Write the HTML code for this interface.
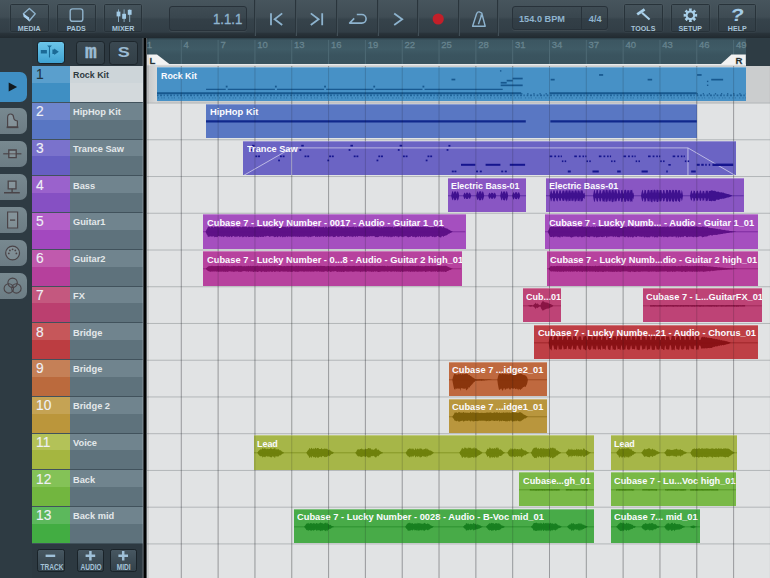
<!DOCTYPE html>
<html><head><meta charset="utf-8"><title>Cubasis</title>
<style>
html,body{margin:0;padding:0}
body{width:770px;height:578px;overflow:hidden;position:relative;background:#2e3b43;font-family:"Liberation Sans",sans-serif;}
div,svg,span{position:absolute;box-sizing:border-box}
#tb{left:0;top:0;width:770px;height:37.6px;background:linear-gradient(#47555d 0px,#3f4c54 17px,#36434b 19.5px,#323e46 32px,#29333a 33.5px,#222b31 37.6px);}
.tbtn{top:4px;height:28px;width:38.5px;border:1px solid #28333a;border-radius:1.5px;background:linear-gradient(#45535b 0%,#3e4b53 48%,#36434b 52%,#323e46 100%);box-shadow:0 0 0 .5px rgba(255,255,255,.05)}
.tbtn span{left:0;right:0;bottom:-1.5px;text-align:center;font-weight:bold;font-size:7.8px;color:#a8c4d8;line-height:8px;transform:scaleX(.91)}
.sep{top:0;width:2px;height:36px;border-left:1px solid #2a353c;border-right:1px solid #424f57}
.disp{border:1px solid #28323a;border-radius:3px;background:linear-gradient(#3f4c54 0%,#39464e 48%,#333f47 52%,#303c44 100%);box-shadow:0 1px 0 rgba(255,255,255,.06)}
#side{left:0;top:38px;width:32px;height:540px;background:#2e3b43}
.tab{left:0;width:27px;height:26px;border-radius:0 7px 7px 0;background:linear-gradient(#788990,#6c7c84)}
#tl{left:32px;top:38px;width:112px;height:540px;background:#2d3941}
#tlbg{left:0;top:28px;width:111.2px;height:478px;background:#41525c}
.row{left:0;width:111.2px;height:35.8px}
.row .n1{left:0;top:0;width:37.8px;height:16.8px}
.row .n2{left:0;top:16.8px;width:37.8px;height:19px}
.row .m1{left:37.8px;top:0;width:73.4px;height:16.8px;background:#70848e}
.row .m2{left:37.8px;top:16.8px;width:73.4px;height:19px;background:#5e727c}
.row .num{left:4.1px;top:1.3px;font-size:13.8px;line-height:16px;color:#eef0f6;-webkit-text-stroke:.12px currentColor}
.row .nm{left:41px;top:3.3px;font-size:9.25px;font-weight:bold;line-height:12px;color:#e3e8ea;white-space:nowrap}
.sbtn{top:2.5px;height:24px;border:1.5px solid #1d262c;border-radius:3.5px;background:linear-gradient(#3b4952,#323f47)}
.bbtn{top:511.4px;height:22.6px;border:1.8px solid #1a2329;border-radius:2.5px;background:linear-gradient(#475761,#33414a)}
.bbtn span{left:0;right:0;bottom:-1.3px;text-align:center;font-weight:bold;font-size:8.2px;line-height:8px;color:#a5c3d8;transform:scaleX(.8)}
#ruler{left:146.2px;top:38px;width:623.5px;height:28px;background:linear-gradient(#2c3e47 0,#3c5661 2px,#3f5b66 40%,#3a545f 60%,#39525d 100%)}
#ruler span{top:1.4px;font-size:9.5px;line-height:11px;color:#67848f;-webkit-text-stroke:.3px #67848f}
#arr{left:146.2px;top:66px;width:623.8px;height:512px;background:#e1e3e4;overflow:hidden}
.clip{border-top:1px solid rgba(255,255,255,.28);overflow:hidden}
.clip span{left:3.5px;top:1.5px;transform-origin:0 0;font-size:9.25px;font-weight:bold;line-height:12px;color:#fbfbff;white-space:nowrap}
</style></head><body>

<div id="tb">
<div class="tbtn" style="left:10.4px"><svg style="left:0;top:0" width="38" height="20" viewBox="0 0 38 20"><path d="M18.4 3.4 L24.2 8.8 L18.4 15.8 L12.4 8.8 Z" fill="none" stroke="#8fb2cb" stroke-width="1.4" stroke-linejoin="round"/><path d="M12.2 8.6 L18.2 12.4 L18.4 16 L12.6 11.8 Z" fill="#a9d0ee"/></svg><span>MEDIA</span></div>
<div class="tbtn" style="left:57.2px"><svg style="left:0;top:0" width="38" height="20" viewBox="0 0 38 20"><rect x="12.2" y="3.9" width="12.6" height="12.4" rx="2.4" fill="none" stroke="#8fb2cb" stroke-width="1.4"/></svg><span>PADS</span></div>
<div class="tbtn" style="left:103.9px"><svg style="left:0;top:0" width="38" height="20" viewBox="0 0 38 20"><path d="M13.5 4.4V17 M19.1 4.4V17 M24.7 4.4V17" stroke="#8fb2cb" stroke-width=".9" fill="none"/><rect x="11.6" y="6.6" width="3.8" height="4.8" fill="#a3cbe6"/><rect x="17.2" y="8.8" width="3.8" height="5" fill="#a3cbe6"/><rect x="22.8" y="4.8" width="3.8" height="5" fill="#a3cbe6"/></svg><span>MIXER</span></div>
<div class="tbtn" style="left:624.3px"><svg style="left:0;top:0" width="38" height="20" viewBox="0 0 38 20"><path d="M12.2 9.4 L19.6 4.4" stroke="#a9d0ea" stroke-width="2.7" fill="none"/><path d="M17 7.8 L24.6 14.6" stroke="#a9d0ea" stroke-width="2" fill="none"/></svg><span>TOOLS</span></div>
<div class="tbtn" style="left:671.1px"><svg style="left:0;top:0" width="38" height="20" viewBox="0 0 38 20"><path d="M25.13 8.79 L25.13 11.81 L23.17 11.43 L22.57 12.87 L24.23 14.00 L22.10 16.13 L20.97 14.47 L19.53 15.07 L19.91 17.03 L16.89 17.03 L17.27 15.07 L15.83 14.47 L14.70 16.13 L12.57 14.00 L14.23 12.87 L13.63 11.43 L11.67 11.81 L11.67 8.79 L13.63 9.17 L14.23 7.73 L12.57 6.60 L14.70 4.47 L15.83 6.13 L17.27 5.53 L16.89 3.57 L19.91 3.57 L19.53 5.53 L20.97 6.13 L22.10 4.47 L24.23 6.60 L22.57 7.73 L23.17 9.17Z M18.4 7.5a2.8 2.8 0 1 0 .01 0Z" fill="#a9d0ea" fill-rule="evenodd"/></svg><span>SETUP</span></div>
<div class="tbtn" style="left:717.8px"><span style="bottom:6.6px;font-size:17.4px;line-height:17px;color:#a3cbe6;transform:scaleX(1.25) skewX(-6deg)">?</span><span>HELP</span></div>
<div class="disp" style="left:169px;top:6.4px;width:78px;height:24.4px"><span style="right:3.4px;top:3.6px;font-size:14.5px;line-height:16px;color:#8fb4cf;-webkit-text-stroke:.35px #8fb4cf;transform-origin:100% 50%;transform:scaleX(.91)">1.1.1</span></div>
<div class="sep" style="left:254.3px"></div>
<div class="sep" style="left:295.4px"></div>
<div class="sep" style="left:336.3px"></div>
<div class="sep" style="left:377px"></div>
<div class="sep" style="left:417.2px"></div>
<div class="sep" style="left:458px"></div>
<div class="sep" style="left:497.2px"></div>
<svg style="left:255px;top:0" width="245" height="38" viewBox="255 0 245 38" fill="none" stroke="#8db3ce" stroke-width="1.8"><path d="M271 13.2V25.2 M282.2 13.4 L274.6 19.2 L282.2 25"/><path d="M310.8 13.4 L318.6 19.2 L310.8 25 M322.2 13.2V25.2"/><path d="M356.8 14.5 H361.8 A4.3 4.3 0 0 1 361.8 23.1 H349.6 L354.2 18.4" stroke-width="1.6" stroke-linejoin="round"/><path d="M394.2 13.4 L402.2 19.2 L394.2 25"/><circle cx="438.2" cy="19" r="5.6" fill="#c31f29" stroke="none"/><path d="M472.6 26.2 L476.6 13.8 Q477.6 11.4 479.6 12 L481.8 13.2 L485.2 26.2 Z M478.4 24.2 L482.2 13.6" stroke-width="1.4" stroke-linejoin="round"/><rect x="480.6" y="14.4" width="2.4" height="2.4" fill="#8db3ce" stroke="none"/></svg>
<div class="disp" style="left:512px;top:6.4px;width:96px;height:23.4px"><span style="left:6px;top:6.2px;font-size:9.2px;font-weight:bold;line-height:11px;color:#8fb4cf">154.0 BPM</span><div style="left:67.5px;top:0;width:1px;height:21.4px;background:#28323a"></div><span style="left:75.8px;top:6.2px;font-size:9.2px;font-weight:bold;line-height:11px;color:#8fb4cf">4/4</span></div>
</div>
<div id="side">
<div class="tab" style="top:34px;height:30.4px;background:#3f8fc4"><svg style="left:0;top:0" width="27" height="30"><path d="M8.7 10.4 L17.1 15 L8.7 19.5Z" fill="#121a1f"/></svg></div>
<div class="tab" style="top:70px"><svg style="left:0;top:0" width="27" height="26"><path d="M7.6 19 V9.6 Q7.6 6 10.6 6 Q13.4 6 13.6 9.2 Q13.8 12.4 17.4 13 V19 Z" fill="rgba(255,255,255,.14)" stroke="#4a4448" stroke-width="1.2"/><path d="M6.6 19.3 H18.4" stroke="#4a4448" stroke-width="1.7"/></svg></div>
<div class="tab" style="top:103px"><svg style="left:0;top:0" width="27" height="26"><path d="M3.2 12.8 H21.4" stroke="#4a4448" stroke-width="1.2"/><path d="M8.8 9 H16.2 V16.6 H8.8 Z" fill="rgba(255,255,255,.12)" stroke="#4a4448" stroke-width="1.3"/></svg></div>
<div class="tab" style="top:136px"><svg style="left:0;top:0" width="27" height="26"><path d="M8.2 7.2 H16 V14.8 H8.2 Z" fill="rgba(255,255,255,.14)" stroke="#4a4448" stroke-width="1.3"/><path d="M12.1 14.8 V18.4 M4 18.8 H19.8" fill="none" stroke="#4a4448" stroke-width="1.4"/></svg></div>
<div class="tab" style="top:169px"><svg style="left:0;top:0" width="27" height="26"><path d="M7.6 5 H17.6 V21 H7.6 Z" fill="rgba(255,255,255,.12)" stroke="#4a4448" stroke-width="1.2"/><path d="M10 13.1 H15.2" stroke="#4a4448" stroke-width="1.3"/></svg></div>
<div class="tab" style="top:202px"><svg style="left:0;top:0" width="27" height="26"><circle cx="12.6" cy="13" r="6.9" fill="rgba(255,255,255,.1)" stroke="#4a4448" stroke-width="1.2"/><circle cx="8.8" cy="13.4" r=".9" fill="#4a4448"/><circle cx="9.9" cy="10.4" r=".9" fill="#4a4448"/><circle cx="12.6" cy="9.3" r=".9" fill="#4a4448"/><circle cx="15.3" cy="10.4" r=".9" fill="#4a4448"/><circle cx="16.4" cy="13.4" r=".9" fill="#4a4448"/></svg></div>
<div class="tab" style="top:235px"><svg style="left:0;top:0" width="27" height="26"><circle cx="12.6" cy="9.8" r="4.7" fill="none" stroke="#4a4448" stroke-width="1.1"/><circle cx="8.8" cy="15.4" r="4.7" fill="none" stroke="#4a4448" stroke-width="1.1"/><circle cx="16.4" cy="15.4" r="4.7" fill="none" stroke="#4a4448" stroke-width="1.1"/></svg></div>
</div>
<div id="tl"><div id="tlbg"></div>
<div class="sbtn" style="left:4.6px;width:28px;top:2.6px;height:23.4px;border-color:#15222b;background:linear-gradient(#6cc6ea,#3fa2d2)"><svg style="left:0;top:0" width="25" height="20"><path d="M2.8 7.9h6.1v3.7H2.8z M14.4 7.6h1.8V6.6l4.6 3.2-4.6 3.2v-1h-1.8z" fill="#1b6a96"/><path d="M11.5 4V15.5" stroke="#1b6a96" stroke-width="1.1"/><path d="M9.1 3.5h4.8l-2.4 2.4z" fill="#1b6a96"/></svg></div>
<div class="sbtn" style="left:43.6px;width:29.6px"><span style="left:0;right:0;top:-.9px;text-align:center;font-family:'Liberation Mono',monospace;font-weight:bold;font-size:20px;line-height:24px;color:#9bbbd3;-webkit-text-stroke:.5px #9bbbd3;transform:scaleX(.98)">m</span></div>
<div class="sbtn" style="left:76.6px;width:29.6px"><span style="left:0;right:0;top:.4px;text-align:center;font-weight:bold;font-size:15px;line-height:20px;color:#9bbbd3;transform:scaleX(1.2)">S</span></div>
<div class="row" style="top:28.2px"><div class="n1" style="background:#5a9fcd"></div><div class="n2" style="background:#3f8fc3"></div><div class="m1" style="background:#cdd5d9"></div><div class="m2" style="background:#d3d9dc"></div><span class="num" style="color:#233440">1</span><span class="nm" style="color:#2f3a41;transform-origin:0 0;transform:scaleX(0.96)">Rock Kit</span></div>
<div class="row" style="top:64.9px"><div class="n1" style="background:#6e85cc"></div><div class="n2" style="background:#5876c3"></div><div class="m1" style="background:#70848e"></div><div class="m2" style="background:#5e727c"></div><span class="num" style="color:#eef0f6">2</span><span class="nm" style="color:#e3e8ea;transform-origin:0 0;transform:scaleX(1)">HipHop Kit</span></div>
<div class="row" style="top:101.7px"><div class="n1" style="background:#7a72cc"></div><div class="n2" style="background:#665fc3"></div><div class="m1" style="background:#70848e"></div><div class="m2" style="background:#5e727c"></div><span class="num" style="color:#eef0f6">3</span><span class="nm" style="color:#e3e8ea;transform-origin:0 0;transform:scaleX(1)">Trance Saw</span></div>
<div class="row" style="top:138.4px"><div class="n1" style="background:#9a62cc"></div><div class="n2" style="background:#8650c3"></div><div class="m1" style="background:#70848e"></div><div class="m2" style="background:#5e727c"></div><span class="num" style="color:#eef0f6">4</span><span class="nm" style="color:#e3e8ea;transform-origin:0 0;transform:scaleX(1)">Bass</span></div>
<div class="row" style="top:175.2px"><div class="n1" style="background:#b25fc8"></div><div class="n2" style="background:#a348bf"></div><div class="m1" style="background:#70848e"></div><div class="m2" style="background:#5e727c"></div><span class="num" style="color:#eef0f6">5</span><span class="nm" style="color:#e3e8ea;transform-origin:0 0;transform:scaleX(1)">Guitar1</span></div>
<div class="row" style="top:211.9px"><div class="n1" style="background:#c05aad"></div><div class="n2" style="background:#b6409c"></div><div class="m1" style="background:#70848e"></div><div class="m2" style="background:#5e727c"></div><span class="num" style="color:#eef0f6">6</span><span class="nm" style="color:#e3e8ea;transform-origin:0 0;transform:scaleX(1)">Guitar2</span></div>
<div class="row" style="top:248.6px"><div class="n1" style="background:#c4587f"></div><div class="n2" style="background:#bb3f6f"></div><div class="m1" style="background:#70848e"></div><div class="m2" style="background:#5e727c"></div><span class="num" style="color:#eef0f6">7</span><span class="nm" style="color:#e3e8ea;transform-origin:0 0;transform:scaleX(1)">FX</span></div>
<div class="row" style="top:285.4px"><div class="n1" style="background:#c6575a"></div><div class="n2" style="background:#bc3d41"></div><div class="m1" style="background:#70848e"></div><div class="m2" style="background:#5e727c"></div><span class="num" style="color:#eef0f6">8</span><span class="nm" style="color:#e3e8ea;transform-origin:0 0;transform:scaleX(1)">Bridge</span></div>
<div class="row" style="top:322.1px"><div class="n1" style="background:#c58057"></div><div class="n2" style="background:#bb6a3d"></div><div class="m1" style="background:#70848e"></div><div class="m2" style="background:#5e727c"></div><span class="num" style="color:#eef0f6">9</span><span class="nm" style="color:#e3e8ea;transform-origin:0 0;transform:scaleX(1)">Bridge</span></div>
<div class="row" style="top:358.9px"><div class="n1" style="background:#c5a354"></div><div class="n2" style="background:#bb963b"></div><div class="m1" style="background:#70848e"></div><div class="m2" style="background:#5e727c"></div><span class="num" style="color:#eef0f6">10</span><span class="nm" style="color:#e3e8ea;transform-origin:0 0;transform:scaleX(1)">Bridge 2</span></div>
<div class="row" style="top:395.6px"><div class="n1" style="background:#b3c258"></div><div class="n2" style="background:#a5b640"></div><div class="m1" style="background:#70848e"></div><div class="m2" style="background:#5e727c"></div><span class="num" style="color:#eef0f6">11</span><span class="nm" style="color:#e3e8ea;transform-origin:0 0;transform:scaleX(1)">Voice</span></div>
<div class="row" style="top:432.3px"><div class="n1" style="background:#84c257"></div><div class="n2" style="background:#72b63f"></div><div class="m1" style="background:#70848e"></div><div class="m2" style="background:#5e727c"></div><span class="num" style="color:#eef0f6">12</span><span class="nm" style="color:#e3e8ea;transform-origin:0 0;transform:scaleX(1)">Back</span></div>
<div class="row" style="top:469.1px"><div class="n1" style="background:#5cb85c"></div><div class="n2" style="background:#42ad42"></div><div class="m1" style="background:#70848e"></div><div class="m2" style="background:#5e727c"></div><span class="num" style="color:#eef0f6">13</span><span class="nm" style="color:#e3e8ea;transform-origin:0 0;transform:scaleX(1)">Back mid</span></div>
<div class="bbtn" style="left:4.6px;width:28px"><svg style="left:0;top:0" width="25" height="12"><rect x="7.6" y="4.6" width="9.6" height="2.4" fill="#9fc0d8"/></svg><span>TRACK</span></div>
<div class="bbtn" style="left:44.6px;width:27.8px"><svg style="left:0;top:0" width="25" height="12"><path d="M7.6 5.8h9.6M12.4 1v9.6" stroke="#9fc0d8" stroke-width="2.5"/></svg><span>AUDIO</span></div>
<div class="bbtn" style="left:77.8px;width:27.4px"><svg style="left:0;top:0" width="25" height="12"><path d="M7.4 5.8h9.6M12.2 1v9.6" stroke="#9fc0d8" stroke-width="2.5"/></svg><span>MIDI</span></div>
</div>
<div id="ruler">
<div style="left:599.8px;top:0;width:30px;height:28px;background:#2e3c44"></div>
<span style="left:0.6px">1</span>
<span style="left:37.4px">4</span>
<span style="left:74.2px">7</span>
<span style="left:111.0px">10</span>
<span style="left:147.9px">13</span>
<span style="left:184.7px">16</span>
<span style="left:221.5px">19</span>
<span style="left:258.3px">22</span>
<span style="left:295.1px">25</span>
<span style="left:332.0px">28</span>
<span style="left:368.8px">31</span>
<span style="left:405.6px">34</span>
<span style="left:442.4px">37</span>
<span style="left:479.2px">40</span>
<span style="left:516.1px">43</span>
<span style="left:552.9px">46</span>
<span style="left:589.7px">49</span>
<svg style="left:0;top:0" width="624" height="28"><path d="M35.30 2V26 M72.12 2V26 M108.94 2V26 M145.76 2V26 M182.58 2V26 M219.40 2V26 M256.22 2V26 M293.04 2V26 M329.86 2V26 M366.68 2V26 M403.50 2V26 M440.32 2V26 M477.14 2V26 M513.96 2V26 M550.78 2V26 M587.60 2V26" stroke="#4e6a75" stroke-width="1" fill="none"/></svg>
<div style="left:0;top:26px;width:599.8px;height:2px;background:linear-gradient(#f4f4f4,#c9cdcf)"></div>
<svg style="left:0;top:16px" width="624" height="12"><path d="M0 0.6 H11 L24 10.4 H0Z" fill="#f2f2f2"/><path d="M599.8 0.6 H585.4000000000001 L574.4000000000001 10.4 H599.8Z" fill="#f2f2f2"/></svg>
<span style="left:3.4px;top:17.5px;font-size:9.6px;font-weight:bold;color:#111;line-height:10px">L</span>
<span style="left:589.2px;top:17.5px;font-size:9.6px;font-weight:bold;color:#111;line-height:10px">R</span>
</div>
<div id="arr">
<div style="left:0;top:0;width:624px;height:36.74px;background:linear-gradient(90deg,#c4c6c7 0,#d7d9da 11px,#cbcdce 12px)"></div>
<svg style="left:0;top:0" width="624" height="512"><path d="M0 37.04H624 M0 73.78H624 M0 110.52H624 M0 147.26H624 M0 184.00H624 M0 220.74H624 M0 257.48H624 M0 294.22H624 M0 330.96H624 M0 367.70H624 M0 404.44H624 M0 441.18H624 M0 477.92H624" stroke="#b2b6b8" stroke-width="1" fill="none"/></svg>
<svg style="left:0;top:0" width="624" height="512"><path d="M35.30 0V512 M72.12 0V512 M108.94 0V512 M145.76 0V512 M182.58 0V512 M219.40 0V512 M256.22 0V512 M293.04 0V512 M329.86 0V512 M366.68 0V512 M403.50 0V512 M440.32 0V512 M477.14 0V512 M513.96 0V512 M550.78 0V512 M587.60 0V512 M624.42 0V512" stroke="rgba(30,36,42,.22)" stroke-width="1" fill="none"/></svg>
<div class="clip" style="left:11.1px;top:1.1px;width:588.7px;height:34.4px;background:#4791c6"><svg style="left:0;top:-1px" width="588.7" height="34.4" viewBox="157.3 67.1 588.7 34.4"><path d="M206.3 89.5H226 M228 89.5H275.2 M277.2 89.5H324.4 M326.4 89.5H373.6 M375.6 89.5H422.8 M424.8 89.5H503" stroke="#17588f" stroke-width="1.3" opacity=".95"/><rect x="226.0" y="85.8" width="1.8" height="1.8" fill="#17588f"/><rect x="275.2" y="85.8" width="1.8" height="1.8" fill="#17588f"/><rect x="324.4" y="85.8" width="1.8" height="1.8" fill="#17588f"/><rect x="373.6" y="85.8" width="1.8" height="1.8" fill="#17588f"/><rect x="422.8" y="85.8" width="1.8" height="1.8" fill="#17588f"/><path d="M157 93.4H521.5 M550 93.4H697" stroke="#17588f" stroke-width="1.9"/><path d="M157 95.5H746" stroke="#17588f" stroke-width="1.9" stroke-dasharray="1.7 1.6 2 1.5 1.3 1.9" opacity=".8"/><path d="M158 98H746" stroke="#17588f" stroke-width="1.3" stroke-dasharray="1.2 2.3 1 1.4 1.1 3.2" opacity=".5"/><path d="M521.5 93.8H550 M697 93.8H746" stroke="#17588f" stroke-width="1.6" stroke-dasharray="1.2 4.9" opacity=".85"/><rect x="451.8" y="78.8" width="3.8" height="1.7" fill="#17588f"/><rect x="501" y="82.0" width="6.0" height="1.7" fill="#17588f"/><rect x="507" y="79.9" width="6.0" height="1.7" fill="#17588f"/><rect x="513" y="77.8" width="10.0" height="1.7" fill="#17588f"/><rect x="501" y="84.60000000000001" width="22.0" height="1.7" fill="#17588f"/><rect x="551" y="78.9" width="4.0" height="1.7" fill="#17588f"/><rect x="599.4" y="74.2" width="4.1" height="1.7" fill="#17588f"/><rect x="648" y="78.9" width="4.5" height="1.7" fill="#17588f"/><rect x="697.5" y="74.2" width="4.5" height="1.7" fill="#17588f"/><rect x="711.6" y="78.9" width="11.9" height="1.7" fill="#17588f"/><rect x="500.3" y="70.3" width="1.4" height="1.4" fill="#17588f"/><rect x="707.3" y="80.8" width="1.4" height="1.4" fill="#17588f"/><rect x="707.3" y="84.7" width="1.4" height="1.4" fill="#17588f"/></svg><span style="transform:scaleX(0.957)">Rock Kit</span></div>
<div class="clip" style="left:60.0px;top:37.9px;width:490.8px;height:34.4px;background:#5977c3"><svg style="left:0;top:-1px" width="490.8" height="34.4" viewBox="206.2 103.9 490.8 34.4"><path d="M206 121.3H526 M550.6 121.3H697" stroke="#10288c" stroke-width="2.4"/></svg><span style="transform:scaleX(1.013)">HipHop Kit</span></div>
<div class="clip" style="left:97.0px;top:74.7px;width:492.8px;height:34.4px;background:#6b64c4"><svg style="left:0;top:-1px" width="492.8" height="34.4" viewBox="243.2 140.7 492.8 34.4"><path d="M243.3 175.4 L291.8 147.6 H688.2 L736 175.4 M291.8 147.6V175.4 M688.2 147.6V175.4" fill="none" stroke="rgba(255,255,255,.55)" stroke-width="1"/><rect x="252.2" y="144.5" width="2.5" height="1.7" fill="#15158e"/><rect x="250.4" y="148.8" width="1.8" height="1.7" fill="#15158e"/><rect x="255.5" y="155.2" width="1.9" height="1.7" fill="#15158e"/><rect x="258.2" y="155.2" width="1.9" height="1.7" fill="#15158e"/><rect x="278.3" y="159.3" width="1.8" height="1.7" fill="#15158e"/><rect x="280.1" y="155.2" width="1.9" height="1.7" fill="#15158e"/><rect x="282.8" y="155.2" width="1.9" height="1.7" fill="#15158e"/><rect x="301.4" y="144.5" width="2.5" height="1.7" fill="#15158e"/><rect x="299.6" y="148.8" width="1.8" height="1.7" fill="#15158e"/><rect x="304.7" y="155.2" width="1.9" height="1.7" fill="#15158e"/><rect x="307.4" y="155.2" width="1.9" height="1.7" fill="#15158e"/><rect x="327.5" y="159.3" width="1.8" height="1.7" fill="#15158e"/><rect x="329.3" y="155.2" width="1.9" height="1.7" fill="#15158e"/><rect x="332.0" y="155.2" width="1.9" height="1.7" fill="#15158e"/><rect x="350.6" y="144.5" width="2.5" height="1.7" fill="#15158e"/><rect x="348.8" y="148.8" width="1.8" height="1.7" fill="#15158e"/><rect x="353.9" y="155.2" width="1.9" height="1.7" fill="#15158e"/><rect x="356.6" y="155.2" width="1.9" height="1.7" fill="#15158e"/><rect x="376.7" y="159.3" width="1.8" height="1.7" fill="#15158e"/><rect x="378.5" y="155.2" width="1.9" height="1.7" fill="#15158e"/><rect x="381.2" y="155.2" width="1.9" height="1.7" fill="#15158e"/><rect x="399.8" y="144.5" width="2.5" height="1.7" fill="#15158e"/><rect x="398.0" y="148.8" width="1.8" height="1.7" fill="#15158e"/><rect x="403.1" y="155.2" width="1.9" height="1.7" fill="#15158e"/><rect x="405.8" y="155.2" width="1.9" height="1.7" fill="#15158e"/><rect x="425.9" y="159.3" width="1.8" height="1.7" fill="#15158e"/><rect x="427.7" y="155.2" width="1.9" height="1.7" fill="#15158e"/><rect x="430.4" y="155.2" width="1.9" height="1.7" fill="#15158e"/><rect x="448.6" y="144.6" width="2.0" height="1.7" fill="#15158e"/><rect x="446.8" y="148.8" width="1.8" height="1.7" fill="#15158e"/><rect x="461.2" y="163.5" width="14.3" height="2" fill="#15158e"/><rect x="485.8" y="163.5" width="14.8" height="2" fill="#15158e"/><rect x="510.0" y="163.5" width="15.3" height="2" fill="#15158e"/><rect x="452.0" y="170.3" width="2.0" height="1.7" fill="#15158e"/><rect x="454.6" y="170.3" width="2.0" height="1.7" fill="#15158e"/><rect x="476.2" y="170.3" width="2.0" height="1.7" fill="#15158e"/><rect x="480.0" y="170.3" width="2.0" height="1.7" fill="#15158e"/><rect x="501.4" y="170.3" width="2.0" height="1.7" fill="#15158e"/><rect x="505.0" y="170.3" width="2.0" height="1.7" fill="#15158e"/><rect x="549.9" y="155.2" width="2.6" height="1.7" fill="#15158e"/><rect x="554.5" y="155.2" width="1.8" height="1.7" fill="#15158e"/><rect x="558.1" y="155.2" width="1.6" height="1.7" fill="#15158e"/><rect x="560.9" y="155.2" width="1.2" height="1.7" fill="#15158e"/><rect x="562.1" y="160.1" width="1.5" height="1.7" fill="#15158e"/><rect x="564.9" y="160.1" width="1.5" height="1.7" fill="#15158e"/><rect x="574.5" y="155.2" width="2.6" height="1.7" fill="#15158e"/><rect x="579.1" y="155.2" width="1.8" height="1.7" fill="#15158e"/><rect x="582.7" y="155.2" width="1.6" height="1.7" fill="#15158e"/><rect x="585.5" y="155.2" width="1.2" height="1.7" fill="#15158e"/><rect x="586.7" y="160.1" width="1.5" height="1.7" fill="#15158e"/><rect x="589.5" y="160.1" width="1.5" height="1.7" fill="#15158e"/><rect x="599.1" y="155.2" width="2.6" height="1.7" fill="#15158e"/><rect x="603.7" y="155.2" width="1.8" height="1.7" fill="#15158e"/><rect x="607.3" y="155.2" width="1.6" height="1.7" fill="#15158e"/><rect x="610.1" y="155.2" width="1.2" height="1.7" fill="#15158e"/><rect x="611.3" y="160.1" width="1.5" height="1.7" fill="#15158e"/><rect x="614.1" y="160.1" width="1.5" height="1.7" fill="#15158e"/><rect x="623.7" y="155.2" width="2.6" height="1.7" fill="#15158e"/><rect x="628.3" y="155.2" width="1.8" height="1.7" fill="#15158e"/><rect x="631.9" y="155.2" width="1.6" height="1.7" fill="#15158e"/><rect x="634.7" y="155.2" width="1.2" height="1.7" fill="#15158e"/><rect x="635.9" y="160.1" width="1.5" height="1.7" fill="#15158e"/><rect x="638.7" y="160.1" width="1.5" height="1.7" fill="#15158e"/><rect x="648.3" y="155.2" width="2.6" height="1.7" fill="#15158e"/><rect x="652.9" y="155.2" width="1.8" height="1.7" fill="#15158e"/><rect x="656.5" y="155.2" width="1.6" height="1.7" fill="#15158e"/><rect x="659.3" y="155.2" width="1.2" height="1.7" fill="#15158e"/><rect x="660.5" y="160.1" width="1.5" height="1.7" fill="#15158e"/><rect x="663.3" y="160.1" width="1.5" height="1.7" fill="#15158e"/><rect x="672.9" y="155.2" width="2.6" height="1.7" fill="#15158e"/><rect x="677.5" y="155.2" width="1.8" height="1.7" fill="#15158e"/><rect x="681.1" y="155.2" width="1.6" height="1.7" fill="#15158e"/><rect x="683.9" y="155.2" width="1.2" height="1.7" fill="#15158e"/><rect x="685.1" y="160.1" width="1.5" height="1.7" fill="#15158e"/><rect x="687.9" y="160.1" width="1.5" height="1.7" fill="#15158e"/><rect x="568.0" y="170.2" width="3.0" height="2" fill="#15158e"/><rect x="592.7" y="170.2" width="6.3" height="2" fill="#15158e"/><rect x="617.4" y="170.2" width="3.6" height="2" fill="#15158e"/><rect x="641.8" y="170.2" width="6.2" height="2" fill="#15158e"/><rect x="666.5" y="170.2" width="1.5" height="2" fill="#15158e"/><rect x="691.4" y="170.2" width="4.6" height="2" fill="#15158e"/><rect x="668.6" y="163.7" width="2.4" height="1.7" fill="#15158e"/><rect x="697.0" y="163.5" width="3.0" height="2" fill="#15158e"/><rect x="701.5" y="163.5" width="2.5" height="2" fill="#15158e"/><rect x="705.5" y="163.5" width="1.5" height="2" fill="#15158e"/><rect x="709.0" y="163.5" width="1.4" height="2" fill="#15158e"/><rect x="712.7" y="163.3" width="20.8" height="2.4" fill="#15158e"/></svg><span style="transform:scaleX(0.994)">Trance Saw</span></div>
<div class="clip" style="left:301.6px;top:111.6px;width:78.4px;height:34.4px;background:#8956c3"><svg style="left:0;top:-1px" width="78.4" height="34.4" viewBox="447.8 177.6 78.4 34.4"><path d="M451.0 195.4 L451.6 192.6 L452.2 190.8 L452.8 190.8 L453.5 193.5 L454.1 191.2 L454.7 191.0 L455.3 191.2 L455.9 191.1 L456.5 193.5 L457.2 190.8 L457.8 191.0 L458.4 192.5 L459.0 195.4 L459.0 195.4 L458.4 198.4 L457.8 199.9 L457.2 200.1 L456.5 197.2 L455.9 199.2 L455.3 199.7 L454.7 200.0 L454.1 199.7 L453.5 197.2 L452.8 199.9 L452.2 199.7 L451.6 197.8 L451.0 195.4Z M463.0 195.4 L463.6 193.5 L464.2 192.3 L464.8 192.3 L465.5 194.1 L466.1 192.4 L466.7 192.2 L467.3 192.4 L467.9 192.4 L468.5 194.1 L469.2 192.2 L469.8 192.4 L470.4 193.6 L471.0 195.4 L471.0 195.4 L470.4 197.2 L469.8 198.5 L469.2 198.4 L468.5 196.8 L467.9 198.1 L467.3 198.5 L466.7 198.6 L466.1 198.5 L465.5 196.8 L464.8 198.7 L464.2 198.5 L463.6 197.2 L463.0 195.4Z M476.0 195.4 L476.6 192.7 L477.2 191.2 L477.8 190.9 L478.5 193.5 L479.1 190.8 L479.7 191.0 L480.3 190.9 L480.9 190.8 L481.5 193.5 L482.2 191.1 L482.8 191.0 L483.4 192.6 L484.0 195.4 L484.0 195.4 L483.4 197.8 L482.8 199.3 L482.2 200.0 L481.5 197.3 L480.9 199.9 L480.3 199.8 L479.7 199.7 L479.1 200.3 L478.5 197.3 L477.8 199.5 L477.2 199.3 L476.6 197.8 L476.0 195.4Z M488.0 195.4 L488.6 193.4 L489.2 192.5 L489.8 192.4 L490.5 194.1 L491.1 192.4 L491.7 192.4 L492.3 192.5 L492.9 192.4 L493.5 194.1 L494.2 192.3 L494.8 192.4 L495.4 193.5 L496.0 195.4 L496.0 195.4 L495.4 197.4 L494.8 198.2 L494.2 198.5 L493.5 196.6 L492.9 198.2 L492.3 198.3 L491.7 198.3 L491.1 198.3 L490.5 196.6 L489.8 198.3 L489.2 198.4 L488.6 197.4 L488.0 195.4Z M500.0 195.4 L500.6 192.7 L501.2 190.8 L501.8 190.8 L502.5 193.5 L503.1 191.1 L503.7 191.1 L504.3 191.0 L504.9 191.2 L505.5 193.5 L506.2 190.8 L506.8 190.9 L507.4 192.7 L508.0 195.4 L508.0 195.4 L507.4 197.9 L506.8 200.1 L506.2 200.3 L505.5 197.4 L504.9 199.9 L504.3 200.1 L503.7 199.6 L503.1 199.9 L502.5 197.1 L501.8 200.0 L501.2 199.6 L500.6 197.9 L500.0 195.4Z M512.0 195.4 L512.6 193.2 L513.2 191.8 L513.8 192.1 L514.5 193.9 L515.1 191.9 L515.7 191.9 L516.3 191.8 L516.9 192.0 L517.5 193.9 L518.2 191.8 L518.8 191.8 L519.4 193.2 L520.0 195.4 L520.0 195.4 L519.4 197.3 L518.8 198.5 L518.2 199.2 L517.5 196.9 L516.9 198.5 L516.3 198.9 L515.7 198.7 L515.1 198.7 L514.5 196.7 L513.8 198.8 L513.2 199.2 L512.6 197.6 L512.0 195.4Z" fill="#3f118f"/><path d="M447.8 195.36H526.2" stroke="#3f118f" stroke-width=".7" opacity=".8"/></svg><span style="transform:scaleX(0.956)">Electric Bass-01</span></div>
<div class="clip" style="left:399.8px;top:111.6px;width:197.6px;height:34.4px;background:#8956c3"><svg style="left:0;top:-1px" width="197.6" height="34.4" viewBox="546 177.6 197.6 34.4"><path d="M549.7 195.4 L550.3 192.3 L550.9 189.9 L551.5 190.0 L552.1 193.1 L552.7 193.1 L553.4 189.9 L554.0 190.1 L554.6 189.8 L555.2 193.1 L555.8 193.1 L556.4 190.1 L557.0 189.8 L557.6 189.8 L558.2 193.1 L558.8 193.1 L559.4 190.1 L560.0 189.9 L560.7 190.0 L561.3 193.1 L561.9 193.1 L562.5 190.1 L563.1 190.2 L563.7 190.1 L564.3 190.3 L564.9 193.1 L565.5 190.2 L566.1 190.1 L566.7 189.8 L567.4 189.8 L568.0 193.1 L568.6 190.1 L569.2 189.9 L569.8 190.1 L570.4 189.8 L571.0 193.1 L571.6 189.9 L572.2 190.3 L572.8 190.2 L573.4 190.2 L574.0 193.1 L574.7 190.2 L575.3 190.0 L575.9 189.8 L576.5 190.1 L577.1 193.1 L577.7 189.9 L578.3 190.2 L578.9 190.2 L579.5 190.3 L580.1 193.1 L580.7 189.8 L581.3 189.9 L582.0 190.2 L582.6 189.8 L583.2 193.1 L583.8 193.1 L584.4 192.1 L585.0 195.4 L585.0 195.4 L584.4 198.8 L583.8 197.7 L583.2 197.7 L582.6 200.7 L582.0 200.9 L581.3 200.8 L580.7 201.1 L580.1 197.8 L579.5 200.9 L578.9 200.9 L578.3 200.3 L577.7 200.9 L577.1 197.5 L576.5 200.1 L575.9 200.9 L575.3 201.0 L574.7 201.1 L574.0 197.4 L573.4 200.7 L572.8 200.1 L572.2 200.9 L571.6 200.7 L571.0 197.4 L570.4 200.8 L569.8 200.3 L569.2 200.6 L568.6 201.1 L568.0 197.8 L567.4 200.4 L566.7 201.4 L566.1 200.2 L565.5 200.4 L564.9 197.7 L564.3 200.0 L563.7 200.6 L563.1 200.4 L562.5 200.3 L561.9 197.8 L561.3 197.6 L560.7 200.5 L560.0 200.4 L559.4 200.3 L558.8 197.6 L558.2 197.8 L557.6 201.0 L557.0 200.9 L556.4 200.2 L555.8 197.6 L555.2 197.6 L554.6 201.3 L554.0 200.7 L553.4 201.2 L552.7 197.8 L552.1 197.4 L551.5 200.5 L550.9 201.1 L550.3 198.4 L549.7 195.4Z M593.0 195.4 L593.6 192.1 L594.2 189.4 L594.8 189.9 L595.4 193.0 L596.0 193.0 L596.6 189.4 L597.2 189.9 L597.8 189.4 L598.4 193.0 L599.0 193.0 L599.6 189.5 L600.2 189.9 L600.8 189.7 L601.4 193.0 L602.0 193.0 L602.6 190.0 L603.2 189.9 L603.9 189.5 L604.5 189.7 L605.1 193.0 L605.7 189.4 L606.3 189.4 L606.9 189.4 L607.5 189.5 L608.1 193.0 L608.7 189.9 L609.3 189.8 L609.9 189.5 L610.5 189.6 L611.1 193.0 L611.7 189.8 L612.3 189.5 L612.9 189.6 L613.5 189.4 L614.1 193.0 L614.7 189.5 L615.3 189.9 L615.9 189.6 L616.5 189.9 L617.1 193.0 L617.7 193.0 L618.3 189.6 L618.9 189.4 L619.5 189.8 L620.1 193.0 L620.7 193.0 L621.3 189.5 L621.9 189.6 L622.5 189.4 L623.1 193.0 L623.8 193.0 L624.4 189.6 L625.0 189.4 L625.6 189.4 L626.2 189.8 L626.8 193.0 L627.4 189.7 L628.0 189.8 L628.6 189.8 L629.2 189.6 L629.8 193.0 L630.4 189.9 L631.0 189.4 L631.6 189.9 L632.2 189.4 L632.8 193.0 L633.4 192.0 L634.0 195.4 L634.0 195.4 L633.4 199.0 L632.8 197.6 L632.2 201.8 L631.6 200.6 L631.0 201.4 L630.4 201.3 L629.8 197.8 L629.2 201.0 L628.6 200.9 L628.0 200.8 L627.4 200.9 L626.8 198.0 L626.2 200.7 L625.6 201.5 L625.0 201.2 L624.4 201.5 L623.8 197.8 L623.1 197.6 L622.5 201.6 L621.9 201.1 L621.3 201.8 L620.7 197.9 L620.1 197.5 L619.5 200.7 L618.9 200.9 L618.3 200.7 L617.7 197.8 L617.1 198.0 L616.5 201.2 L615.9 200.7 L615.3 201.1 L614.7 201.4 L614.1 197.7 L613.5 201.3 L612.9 201.3 L612.3 201.8 L611.7 201.3 L611.1 197.8 L610.5 201.1 L609.9 200.6 L609.3 201.0 L608.7 200.5 L608.1 197.6 L607.5 201.2 L606.9 200.9 L606.3 201.6 L605.7 201.3 L605.1 197.6 L604.5 201.6 L603.9 201.0 L603.2 200.9 L602.6 201.1 L602.0 197.9 L601.4 197.6 L600.8 201.5 L600.2 200.3 L599.6 201.2 L599.0 197.7 L598.4 197.6 L597.8 201.3 L597.2 201.2 L596.6 200.7 L596.0 197.6 L595.4 197.9 L594.8 201.0 L594.2 201.5 L593.6 198.9 L593.0 195.4Z M641.0 195.4 L641.6 192.1 L642.2 189.8 L642.8 189.4 L643.4 193.0 L644.0 193.0 L644.6 189.4 L645.2 189.5 L645.8 189.7 L646.4 193.0 L647.0 193.0 L647.6 189.8 L648.2 189.4 L648.8 189.7 L649.4 189.9 L650.0 193.0 L650.6 189.5 L651.2 189.7 L651.8 189.5 L652.4 189.4 L653.0 193.0 L653.6 189.6 L654.2 189.4 L654.8 189.4 L655.4 189.6 L656.0 193.0 L656.6 189.4 L657.2 189.5 L657.8 189.4 L658.4 189.6 L659.0 193.0 L659.6 189.5 L660.2 189.6 L660.8 189.9 L661.4 189.5 L662.0 193.0 L662.6 193.0 L663.2 189.6 L663.8 189.5 L664.4 189.9 L665.0 193.0 L665.6 193.0 L666.2 189.6 L666.8 189.4 L667.4 189.8 L668.0 189.5 L668.6 193.0 L669.2 189.4 L669.8 189.7 L670.4 189.8 L671.0 189.7 L671.6 193.0 L672.2 189.9 L672.8 189.4 L673.4 189.8 L674.0 189.4 L674.6 193.0 L675.2 189.4 L675.8 189.5 L676.4 189.8 L677.0 189.4 L677.6 193.0 L678.2 189.9 L678.8 189.8 L679.4 189.8 L680.0 189.7 L680.6 193.0 L681.2 193.0 L681.8 189.4 L682.4 191.9 L683.0 195.4 L683.0 195.4 L682.4 199.0 L681.8 200.8 L681.2 198.0 L680.6 197.6 L680.0 201.5 L679.4 201.5 L678.8 200.4 L678.2 201.1 L677.6 197.6 L677.0 200.8 L676.4 201.0 L675.8 200.8 L675.2 201.0 L674.6 197.7 L674.0 201.3 L673.4 201.4 L672.8 201.0 L672.2 201.1 L671.6 197.7 L671.0 200.5 L670.4 201.1 L669.8 201.1 L669.2 201.1 L668.6 197.5 L668.0 201.1 L667.4 201.2 L666.8 201.6 L666.2 200.6 L665.6 197.7 L665.0 197.9 L664.4 200.7 L663.8 200.7 L663.2 201.3 L662.6 197.5 L662.0 197.9 L661.4 200.7 L660.8 201.1 L660.2 200.8 L659.6 201.2 L659.0 197.7 L658.4 201.2 L657.8 201.5 L657.2 201.7 L656.6 201.4 L656.0 197.8 L655.4 200.9 L654.8 201.4 L654.2 201.1 L653.6 200.7 L653.0 197.9 L652.4 201.8 L651.8 201.8 L651.2 201.3 L650.6 200.9 L650.0 197.6 L649.4 201.3 L648.8 200.5 L648.2 201.1 L647.6 200.8 L647.0 197.6 L646.4 197.8 L645.8 200.7 L645.2 201.4 L644.6 201.5 L644.0 197.8 L643.4 197.9 L642.8 201.1 L642.2 200.5 L641.6 198.4 L641.0 195.4Z M690.0 195.4 L690.6 192.3 L691.2 190.1 L691.8 190.4 L692.4 193.2 L693.1 193.2 L693.7 190.1 L694.3 190.3 L694.9 190.5 L695.5 193.2 L696.1 193.2 L696.7 190.3 L697.3 190.4 L697.9 190.3 L698.6 193.2 L699.2 193.2 L699.8 190.4 L700.4 190.0 L701.0 190.2 L701.6 193.2 L702.2 193.2 L702.8 190.3 L703.4 190.5 L704.1 190.3 L704.7 193.2 L705.3 193.2 L705.9 190.0 L706.5 190.3 L707.1 190.3 L707.7 190.2 L708.3 193.2 L708.9 190.4 L709.6 190.5 L710.2 190.5 L710.8 190.2 L711.4 194.0 L712.0 195.4 L712.0 195.4 L711.4 196.6 L710.8 200.6 L710.2 200.7 L709.6 200.6 L708.9 200.5 L708.3 197.6 L707.7 200.1 L707.1 200.8 L706.5 200.4 L705.9 201.2 L705.3 197.6 L704.7 197.4 L704.1 200.3 L703.4 199.9 L702.8 200.8 L702.2 197.6 L701.6 197.6 L701.0 200.2 L700.4 200.7 L699.8 200.1 L699.2 197.6 L698.6 197.3 L697.9 200.4 L697.3 200.2 L696.7 200.6 L696.1 197.5 L695.5 197.6 L694.9 199.9 L694.3 200.9 L693.7 201.1 L693.1 197.5 L692.4 197.4 L691.8 200.1 L691.2 200.1 L690.6 198.6 L690.0 195.4Z M709.0 195.1 L709.6 193.6 L710.2 191.7 L710.8 190.5 L711.4 190.0 L712.0 189.7 L712.6 190.3 L713.2 190.4 L713.8 190.7 L714.4 190.1 L715.1 191.0 L715.7 190.4 L716.3 191.4 L716.9 191.3 L717.5 191.3 L718.1 191.2 L718.7 191.3 L719.3 191.5 L719.9 192.0 L720.5 192.1 L721.1 191.7 L721.7 192.2 L722.3 192.2 L722.9 192.3 L723.5 192.2 L724.1 192.5 L724.7 192.8 L725.3 193.0 L725.9 193.1 L726.6 193.4 L727.2 193.6 L727.8 193.5 L728.4 193.7 L729.0 194.1 L729.6 194.1 L730.2 194.3 L730.8 194.7 L731.4 194.9 L732.0 195.1 L732.0 195.6 L731.4 195.8 L730.8 196.0 L730.2 196.4 L729.6 196.7 L729.0 196.8 L728.4 197.0 L727.8 197.2 L727.2 197.1 L726.6 197.4 L725.9 197.7 L725.3 197.8 L724.7 197.8 L724.1 198.3 L723.5 198.3 L722.9 198.2 L722.3 198.3 L721.7 198.4 L721.1 198.8 L720.5 198.4 L719.9 198.6 L719.3 199.4 L718.7 199.4 L718.1 199.7 L717.5 199.1 L716.9 199.5 L716.3 198.9 L715.7 200.8 L715.1 200.1 L714.4 200.9 L713.8 200.3 L713.2 200.7 L712.6 200.0 L712.0 200.5 L711.4 201.1 L710.8 199.7 L710.2 198.9 L709.6 197.3 L709.0 195.6Z" fill="#3f118f"/><path d="M546 195.36H743.6" stroke="#3f118f" stroke-width=".7" opacity=".8"/></svg><span style="transform:scaleX(0.967)">Electric Bass-01</span></div>
<div class="clip" style="left:57.1px;top:148.4px;width:262.3px;height:34.4px;background:#a54fbf"><svg style="left:0;top:-1px" width="262.3" height="34.4" viewBox="203.3 214.4 262.3 34.4"><path d="M205.8 232.2 L206.4 230.9 L207.0 229.7 L207.6 229.0 L208.2 227.1 L208.8 226.9 L209.4 227.4 L210.0 227.3 L210.6 227.8 L211.2 227.6 L211.8 227.0 L212.4 227.0 L213.0 227.2 L213.6 227.9 L214.2 227.6 L214.8 226.8 L215.4 227.5 L216.0 227.3 L216.6 227.6 L217.2 227.1 L217.8 226.9 L218.4 227.5 L219.0 227.7 L219.6 227.5 L220.2 227.9 L220.8 227.5 L221.4 227.0 L222.0 227.5 L222.6 227.1 L223.2 226.8 L223.8 227.1 L224.4 227.8 L225.0 227.5 L225.6 227.9 L226.2 227.7 L226.8 227.6 L227.4 226.9 L228.0 227.5 L228.6 227.3 L229.2 227.7 L229.8 227.0 L230.4 227.8 L231.0 227.8 L231.6 227.2 L232.2 227.5 L232.8 227.3 L233.4 227.5 L234.0 227.8 L234.6 227.1 L235.2 227.7 L235.8 226.8 L236.4 227.4 L237.0 227.2 L237.6 227.4 L238.2 227.8 L238.8 227.8 L239.4 227.0 L240.0 227.1 L240.6 227.2 L241.2 227.7 L241.8 227.7 L242.4 227.5 L243.0 226.8 L243.6 226.8 L244.2 227.3 L244.8 227.3 L245.4 227.4 L246.0 227.5 L246.6 226.8 L247.2 227.3 L247.8 227.8 L248.4 227.0 L249.0 227.5 L249.6 227.0 L250.2 227.1 L250.8 227.5 L251.4 227.6 L252.0 227.0 L252.6 227.5 L253.2 227.2 L253.8 227.8 L254.4 227.6 L255.0 227.4 L255.6 227.2 L256.2 227.5 L256.8 227.1 L257.4 227.5 L258.0 226.9 L258.6 226.8 L259.2 227.3 L259.8 227.7 L260.4 226.8 L261.0 227.1 L261.6 227.1 L262.2 227.0 L262.8 227.1 L263.4 227.2 L264.0 227.2 L264.6 227.8 L265.2 227.4 L265.8 227.6 L266.4 227.2 L267.0 227.4 L267.6 227.8 L268.2 227.5 L268.8 227.7 L269.4 227.4 L270.0 227.2 L270.6 227.6 L271.2 227.9 L271.8 227.6 L272.4 227.7 L273.0 227.5 L273.6 227.2 L274.2 227.3 L274.8 227.2 L275.4 227.0 L276.0 227.0 L276.6 227.5 L277.2 227.2 L277.8 226.8 L278.4 227.2 L279.0 226.9 L279.6 227.7 L280.2 227.2 L280.8 227.2 L281.4 227.5 L282.0 227.6 L282.6 226.8 L283.2 226.8 L283.8 227.2 L284.4 226.8 L285.0 227.4 L285.6 226.8 L286.2 227.6 L286.8 227.7 L287.4 227.4 L288.0 227.0 L288.6 227.8 L289.2 227.6 L289.8 227.0 L290.4 227.6 L291.0 226.8 L291.6 227.2 L292.2 227.2 L292.8 227.1 L293.4 227.0 L294.0 227.3 L294.6 227.5 L295.2 227.4 L295.8 227.1 L296.4 227.8 L297.0 227.4 L297.6 226.9 L298.2 227.8 L298.8 227.4 L299.4 227.1 L300.0 227.3 L300.6 227.4 L301.2 226.9 L301.8 227.5 L302.4 227.8 L303.0 227.1 L303.6 227.6 L304.2 226.9 L304.8 227.3 L305.4 227.3 L306.0 227.7 L306.6 227.0 L307.2 227.6 L307.8 227.0 L308.4 227.8 L309.0 226.8 L309.6 227.1 L310.2 227.0 L310.8 227.2 L311.4 227.1 L312.0 227.5 L312.6 227.7 L313.2 227.4 L313.8 227.2 L314.4 227.7 L315.0 227.8 L315.6 227.2 L316.2 226.9 L316.8 227.4 L317.4 227.2 L318.0 226.8 L318.6 227.8 L319.2 227.7 L319.8 227.3 L320.4 227.3 L321.0 227.6 L321.6 227.6 L322.2 227.3 L322.8 227.6 L323.4 227.1 L324.0 227.1 L324.6 227.8 L325.2 227.8 L325.8 227.2 L326.4 226.9 L327.0 227.5 L327.6 227.8 L328.2 227.8 L328.8 226.8 L329.4 227.6 L330.0 226.8 L330.6 227.0 L331.2 227.2 L331.8 227.6 L332.4 227.2 L333.0 227.4 L333.6 227.0 L334.2 227.0 L334.8 226.9 L335.4 227.2 L336.0 227.1 L336.6 227.8 L337.2 227.6 L337.8 226.9 L338.4 227.0 L339.0 227.4 L339.6 227.2 L340.2 227.4 L340.8 227.7 L341.4 227.5 L342.0 226.9 L342.6 227.6 L343.2 227.7 L343.8 227.6 L344.4 227.8 L345.0 227.5 L345.6 227.1 L346.2 227.4 L346.8 227.7 L347.4 227.5 L348.0 227.1 L348.6 227.6 L349.2 227.6 L349.8 227.4 L350.4 227.5 L351.0 227.4 L351.6 227.1 L352.2 227.7 L352.8 227.1 L353.4 227.2 L354.0 226.8 L354.6 227.8 L355.2 227.4 L355.8 227.3 L356.4 227.3 L357.0 227.8 L357.6 226.9 L358.2 226.8 L358.8 227.6 L359.4 227.4 L360.0 227.6 L360.6 227.5 L361.2 227.8 L361.8 227.7 L362.4 227.4 L363.0 227.8 L363.6 227.7 L364.2 226.9 L364.8 226.9 L365.4 227.8 L366.0 227.3 L366.6 227.5 L367.2 227.1 L367.8 227.5 L368.4 227.0 L369.0 227.7 L369.6 227.8 L370.2 227.0 L370.8 227.7 L371.4 227.6 L372.0 227.4 L372.6 227.6 L373.2 227.1 L373.8 227.6 L374.4 227.5 L375.0 227.4 L375.6 227.0 L376.2 226.9 L376.8 227.0 L377.4 227.4 L378.0 227.2 L378.6 227.1 L379.2 227.6 L379.8 227.4 L380.4 227.8 L381.0 227.6 L381.6 227.6 L382.2 227.0 L382.8 227.8 L383.4 227.7 L384.0 226.9 L384.6 227.2 L385.2 227.4 L385.8 227.5 L386.4 227.2 L387.0 227.1 L387.6 227.3 L388.2 227.1 L388.8 226.8 L389.4 227.7 L390.0 226.9 L390.6 227.4 L391.2 227.0 L391.8 227.3 L392.4 227.2 L393.0 227.0 L393.6 227.8 L394.2 227.8 L394.8 227.3 L395.4 227.4 L396.0 227.6 L396.6 227.3 L397.2 227.0 L397.8 227.5 L398.4 226.8 L399.0 226.9 L399.6 227.4 L400.2 227.0 L400.8 227.8 L401.4 227.8 L402.0 226.9 L402.6 227.0 L403.2 227.1 L403.8 227.2 L404.4 227.5 L405.0 227.3 L405.6 227.7 L406.2 227.5 L406.8 227.5 L407.4 227.3 L408.0 227.4 L408.6 227.0 L409.2 227.1 L409.8 227.3 L410.4 227.5 L411.0 227.1 L411.6 227.6 L412.2 227.8 L412.8 227.2 L413.4 227.1 L414.0 226.9 L414.6 227.1 L415.2 227.0 L415.8 226.8 L416.4 227.1 L417.0 227.1 L417.6 227.6 L418.2 226.9 L418.8 226.8 L419.4 227.4 L420.0 227.4 L420.6 227.2 L421.2 226.9 L421.8 227.4 L422.4 227.1 L423.0 227.1 L423.6 226.9 L424.2 227.5 L424.8 227.2 L425.4 227.7 L426.0 227.0 L426.6 227.8 L427.2 227.0 L427.8 227.1 L428.4 227.4 L429.0 226.9 L429.6 227.6 L430.2 226.8 L430.8 227.8 L431.4 227.3 L432.0 227.7 L432.6 227.2 L433.2 227.1 L433.8 227.8 L434.4 227.0 L435.0 227.5 L435.6 227.2 L436.2 227.6 L436.8 227.0 L437.4 227.8 L438.0 227.7 L438.6 227.7 L439.2 227.7 L439.8 227.1 L440.4 227.0 L441.0 226.9 L441.6 227.2 L442.2 227.7 L442.8 227.8 L443.4 227.5 L444.0 227.1 L444.6 228.1 L445.2 227.9 L445.8 228.6 L446.4 228.7 L447.0 228.9 L447.6 229.0 L448.2 229.4 L448.8 230.0 L449.4 230.2 L450.0 230.5 L450.6 230.9 L451.2 231.2 L451.8 231.5 L452.4 231.9 L453.0 232.0 L453.0 232.4 L452.4 232.5 L451.8 232.9 L451.2 233.2 L450.6 233.4 L450.0 234.0 L449.4 234.1 L448.8 234.2 L448.2 235.0 L447.6 235.1 L447.0 235.7 L446.4 235.8 L445.8 235.8 L445.2 236.3 L444.6 236.2 L444.0 237.5 L443.4 236.9 L442.8 236.3 L442.2 236.3 L441.6 237.6 L441.0 238.0 L440.4 237.6 L439.8 237.6 L439.2 236.8 L438.6 236.8 L438.0 236.3 L437.4 236.3 L436.8 237.4 L436.2 236.9 L435.6 237.6 L435.0 237.2 L434.4 237.9 L433.8 236.6 L433.2 237.5 L432.6 237.3 L432.0 236.4 L431.4 237.2 L430.8 236.2 L430.2 237.2 L429.6 236.9 L429.0 237.3 L428.4 237.0 L427.8 237.2 L427.2 237.8 L426.6 236.6 L426.0 237.0 L425.4 236.8 L424.8 237.6 L424.2 236.6 L423.6 237.2 L423.0 237.1 L422.4 237.3 L421.8 236.5 L421.2 237.6 L420.6 237.6 L420.0 236.6 L419.4 236.5 L418.8 237.6 L418.2 237.2 L417.6 236.7 L417.0 237.4 L416.4 237.6 L415.8 238.0 L415.2 237.5 L414.6 236.8 L414.0 237.3 L413.4 237.1 L412.8 237.4 L412.2 236.5 L411.6 236.4 L411.0 237.3 L410.4 237.0 L409.8 237.4 L409.2 237.4 L408.6 237.8 L408.0 237.4 L407.4 237.2 L406.8 236.7 L406.2 236.4 L405.6 236.6 L405.0 237.1 L404.4 236.4 L403.8 237.5 L403.2 237.6 L402.6 237.2 L402.0 237.2 L401.4 236.8 L400.8 236.3 L400.2 237.4 L399.6 236.6 L399.0 237.5 L398.4 237.9 L397.8 236.6 L397.2 237.0 L396.6 237.0 L396.0 236.5 L395.4 236.7 L394.8 237.4 L394.2 236.6 L393.6 237.0 L393.0 237.3 L392.4 236.8 L391.8 237.5 L391.2 237.8 L390.6 236.9 L390.0 237.4 L389.4 236.5 L388.8 237.8 L388.2 237.2 L387.6 236.8 L387.0 236.9 L386.4 237.5 L385.8 236.4 L385.2 236.8 L384.6 236.9 L384.0 237.9 L383.4 236.5 L382.8 236.1 L382.2 237.4 L381.6 236.4 L381.0 236.9 L380.4 236.3 L379.8 236.6 L379.2 237.1 L378.6 237.5 L378.0 237.7 L377.4 237.3 L376.8 237.4 L376.2 237.6 L375.6 237.4 L375.0 236.8 L374.4 236.5 L373.8 236.5 L373.2 236.8 L372.6 236.4 L372.0 237.0 L371.4 236.4 L370.8 236.3 L370.2 237.2 L369.6 236.8 L369.0 236.5 L368.4 237.1 L367.8 236.8 L367.2 237.7 L366.6 237.0 L366.0 237.1 L365.4 236.6 L364.8 237.1 L364.2 237.6 L363.6 236.7 L363.0 236.4 L362.4 237.0 L361.8 236.7 L361.2 237.0 L360.6 236.4 L360.0 236.7 L359.4 236.5 L358.8 236.4 L358.2 237.0 L357.6 237.5 L357.0 236.2 L356.4 236.9 L355.8 237.6 L355.2 236.5 L354.6 236.8 L354.0 237.0 L353.4 237.1 L352.8 237.7 L352.2 236.4 L351.6 237.5 L351.0 236.8 L350.4 236.7 L349.8 237.4 L349.2 236.4 L348.6 236.3 L348.0 236.9 L347.4 237.0 L346.8 236.8 L346.2 237.4 L345.6 237.4 L345.0 237.3 L344.4 236.9 L343.8 236.7 L343.2 236.5 L342.6 236.6 L342.0 237.1 L341.4 236.8 L340.8 236.4 L340.2 236.6 L339.6 237.1 L339.0 237.4 L338.4 236.8 L337.8 237.4 L337.2 236.3 L336.6 236.2 L336.0 237.2 L335.4 237.2 L334.8 237.4 L334.2 237.3 L333.6 237.6 L333.0 236.6 L332.4 237.0 L331.8 236.6 L331.2 237.0 L330.6 237.0 L330.0 237.7 L329.4 236.4 L328.8 237.7 L328.2 236.3 L327.6 236.7 L327.0 237.1 L326.4 237.4 L325.8 236.9 L325.2 236.3 L324.6 236.7 L324.0 237.4 L323.4 237.0 L322.8 236.6 L322.2 236.7 L321.6 237.0 L321.0 236.8 L320.4 237.2 L319.8 237.4 L319.2 236.8 L318.6 236.7 L318.0 237.4 L317.4 237.1 L316.8 236.8 L316.2 237.1 L315.6 237.4 L315.0 236.2 L314.4 236.5 L313.8 236.7 L313.2 236.6 L312.6 236.8 L312.0 237.2 L311.4 236.9 L310.8 237.7 L310.2 237.1 L309.6 236.8 L309.0 238.1 L308.4 236.7 L307.8 237.5 L307.2 237.0 L306.6 236.9 L306.0 236.7 L305.4 236.9 L304.8 237.1 L304.2 237.1 L303.6 237.1 L303.0 237.2 L302.4 236.9 L301.8 237.1 L301.2 237.1 L300.6 236.8 L300.0 237.4 L299.4 237.4 L298.8 237.0 L298.2 236.8 L297.6 237.5 L297.0 237.4 L296.4 236.3 L295.8 237.4 L295.2 236.9 L294.6 236.8 L294.0 236.9 L293.4 237.1 L292.8 236.9 L292.2 237.3 L291.6 237.1 L291.0 237.3 L290.4 236.5 L289.8 237.1 L289.2 237.2 L288.6 236.5 L288.0 237.7 L287.4 236.8 L286.8 236.7 L286.2 236.8 L285.6 237.6 L285.0 236.8 L284.4 237.6 L283.8 236.9 L283.2 238.0 L282.6 237.4 L282.0 236.6 L281.4 236.8 L280.8 237.6 L280.2 236.8 L279.6 236.7 L279.0 236.9 L278.4 237.0 L277.8 238.0 L277.2 237.2 L276.6 236.6 L276.0 237.5 L275.4 237.3 L274.8 237.6 L274.2 236.9 L273.6 236.8 L273.0 236.5 L272.4 236.9 L271.8 236.7 L271.2 236.4 L270.6 237.1 L270.0 237.3 L269.4 236.9 L268.8 236.3 L268.2 236.5 L267.6 236.2 L267.0 236.7 L266.4 236.7 L265.8 236.9 L265.2 237.1 L264.6 236.2 L264.0 237.4 L263.4 237.4 L262.8 237.1 L262.2 237.4 L261.6 237.0 L261.0 237.5 L260.4 237.5 L259.8 237.0 L259.2 237.1 L258.6 238.0 L258.0 237.6 L257.4 237.2 L256.8 237.6 L256.2 237.0 L255.6 237.5 L255.0 237.3 L254.4 236.9 L253.8 236.6 L253.2 237.3 L252.6 237.2 L252.0 237.5 L251.4 236.8 L250.8 237.1 L250.2 237.5 L249.6 237.5 L249.0 237.2 L248.4 237.7 L247.8 236.4 L247.2 236.9 L246.6 237.7 L246.0 237.4 L245.4 236.6 L244.8 236.8 L244.2 237.2 L243.6 237.5 L243.0 238.0 L242.4 236.8 L241.8 237.0 L241.2 236.6 L240.6 237.5 L240.0 237.7 L239.4 237.0 L238.8 236.5 L238.2 236.9 L237.6 236.9 L237.0 237.5 L236.4 236.7 L235.8 237.6 L235.2 236.3 L234.6 237.7 L234.0 236.3 L233.4 236.5 L232.8 236.9 L232.2 237.3 L231.6 237.6 L231.0 236.5 L230.4 236.9 L229.8 237.7 L229.2 236.8 L228.6 237.3 L228.0 236.7 L227.4 238.0 L226.8 236.9 L226.2 237.1 L225.6 236.1 L225.0 237.0 L224.4 236.8 L223.8 237.7 L223.2 237.0 L222.6 236.8 L222.0 236.8 L221.4 237.4 L220.8 236.7 L220.2 236.7 L219.6 236.9 L219.0 236.3 L218.4 236.6 L217.8 237.3 L217.2 237.7 L216.6 237.1 L216.0 237.3 L215.4 237.2 L214.8 238.0 L214.2 236.5 L213.6 236.8 L213.0 236.8 L212.4 237.0 L211.8 237.0 L211.2 237.2 L210.6 236.3 L210.0 237.2 L209.4 236.8 L208.8 237.1 L208.2 237.5 L207.6 235.3 L207.0 234.8 L206.4 233.5 L205.8 232.2Z" fill="#5f1187"/><path d="M203.3 232.18H465.6" stroke="#5f1187" stroke-width=".7" opacity=".8"/></svg><span style="transform:scaleX(1.007)">Cubase 7 - Lucky Number - 0017 - Audio - Guitar 1_01</span></div>
<div class="clip" style="left:399.2px;top:148.4px;width:212.8px;height:34.4px;background:#a54fbf"><svg style="left:0;top:-1px" width="212.8" height="34.4" viewBox="545.4 214.4 212.8 34.4"><path d="M548.0 232.2 L548.6 231.0 L549.2 230.0 L549.8 228.6 L550.4 227.5 L551.0 227.4 L551.6 226.9 L552.2 227.1 L552.8 227.5 L553.4 226.8 L554.0 226.8 L554.6 226.8 L555.2 227.6 L555.8 226.8 L556.4 227.6 L557.0 227.0 L557.6 226.6 L558.2 227.5 L558.8 227.3 L559.4 226.7 L560.0 227.0 L560.6 226.8 L561.2 227.7 L561.8 227.0 L562.4 227.0 L563.0 226.7 L563.6 227.6 L564.2 227.4 L564.8 227.2 L565.4 227.5 L566.0 226.9 L566.6 226.8 L567.2 227.3 L567.8 227.0 L568.4 227.3 L569.0 227.6 L569.6 227.6 L570.2 226.9 L570.8 226.6 L571.4 226.6 L572.0 226.9 L572.6 227.2 L573.2 226.8 L573.8 227.2 L574.4 227.2 L575.0 226.9 L575.6 227.2 L576.2 227.5 L576.8 227.6 L577.4 227.3 L578.0 227.2 L578.6 227.4 L579.2 226.7 L579.8 227.4 L580.4 227.2 L581.0 227.3 L581.6 226.8 L582.2 227.0 L582.8 226.7 L583.4 227.0 L584.0 227.3 L584.6 226.8 L585.2 227.4 L585.8 227.2 L586.4 227.7 L587.0 227.6 L587.6 227.3 L588.2 226.7 L588.8 227.5 L589.4 227.0 L590.0 226.8 L590.6 227.1 L591.2 227.6 L591.8 227.5 L592.4 227.0 L593.0 227.0 L593.6 227.6 L594.2 227.2 L594.8 227.0 L595.5 227.6 L596.1 227.6 L596.7 226.7 L597.3 226.7 L597.9 226.9 L598.5 227.5 L599.1 226.7 L599.7 226.8 L600.3 227.4 L600.9 227.6 L601.5 226.6 L602.1 226.6 L602.7 226.7 L603.3 226.6 L603.9 226.7 L604.5 227.6 L605.1 227.0 L605.7 227.7 L606.3 227.3 L606.9 226.6 L607.5 226.6 L608.1 227.3 L608.7 226.9 L609.3 227.1 L609.9 227.1 L610.5 227.6 L611.1 227.7 L611.7 227.5 L612.3 227.5 L612.9 227.3 L613.5 227.5 L614.1 226.7 L614.7 227.5 L615.3 227.4 L615.9 226.8 L616.5 227.5 L617.1 227.3 L617.7 227.3 L618.3 227.1 L618.9 226.9 L619.5 226.8 L620.1 227.0 L620.7 227.5 L621.3 227.3 L621.9 227.7 L622.5 227.6 L623.1 227.6 L623.7 227.7 L624.3 226.8 L624.9 227.1 L625.5 227.4 L626.1 226.9 L626.7 227.5 L627.3 227.6 L627.9 226.6 L628.5 226.7 L629.1 226.9 L629.7 227.0 L630.3 227.2 L630.9 226.7 L631.5 226.8 L632.1 227.0 L632.7 226.8 L633.3 226.6 L633.9 226.9 L634.5 227.6 L635.1 227.7 L635.7 227.6 L636.3 227.7 L636.9 226.6 L637.5 226.8 L638.1 227.5 L638.7 227.6 L639.3 226.8 L639.9 227.0 L640.5 227.6 L641.1 227.5 L641.7 227.3 L642.3 227.1 L642.9 227.2 L643.5 227.5 L644.1 227.5 L644.7 226.8 L645.3 226.6 L645.9 227.1 L646.5 227.0 L647.1 226.7 L647.7 226.9 L648.3 227.2 L648.9 226.7 L649.5 226.7 L650.1 226.7 L650.7 227.4 L651.3 227.3 L651.9 227.3 L652.5 227.4 L653.1 227.0 L653.7 226.7 L654.3 227.3 L654.9 226.7 L655.5 227.1 L656.1 227.1 L656.7 227.2 L657.3 226.6 L657.9 227.0 L658.5 227.0 L659.1 227.6 L659.7 227.6 L660.3 226.9 L660.9 227.1 L661.5 226.9 L662.1 227.6 L662.7 227.0 L663.3 227.3 L663.9 226.9 L664.5 227.5 L665.1 227.0 L665.7 226.9 L666.3 227.6 L666.9 227.2 L667.5 227.1 L668.1 226.6 L668.7 226.7 L669.3 227.7 L669.9 227.7 L670.5 227.2 L671.1 227.4 L671.7 227.3 L672.3 227.6 L672.9 227.3 L673.5 227.5 L674.1 227.2 L674.7 227.7 L675.3 226.8 L675.9 227.2 L676.5 226.6 L677.1 226.9 L677.7 227.6 L678.3 226.9 L678.9 226.6 L679.5 227.2 L680.1 227.1 L680.7 227.1 L681.3 227.2 L681.9 226.9 L682.5 226.9 L683.1 227.0 L683.7 226.7 L684.3 227.1 L684.9 227.7 L685.5 227.5 L686.1 227.5 L686.7 226.9 L687.3 226.7 L687.9 226.9 L688.5 227.6 L689.2 227.3 L689.8 227.5 L690.4 227.5 L691.0 227.1 L691.6 227.0 L692.2 227.2 L692.8 227.0 L693.4 227.4 L694.0 226.6 L694.6 227.0 L695.2 227.4 L695.8 226.6 L696.4 227.2 L697.0 226.6 L697.6 226.7 L698.2 227.4 L698.8 227.3 L699.4 227.1 L700.0 227.6 L700.6 227.1 L701.2 227.4 L701.8 227.4 L702.4 227.3 L703.0 226.7 L703.6 226.9 L704.2 227.2 L704.8 226.8 L705.4 227.9 L706.0 227.4 L706.6 227.9 L707.2 227.5 L707.8 227.3 L708.4 227.5 L709.0 228.3 L709.6 228.0 L710.2 228.3 L710.8 228.5 L711.4 228.7 L712.0 228.5 L712.6 228.3 L713.2 228.6 L713.8 228.6 L714.4 229.0 L715.0 228.7 L715.6 229.2 L716.2 229.0 L716.8 229.1 L717.4 229.4 L718.0 229.2 L718.6 229.5 L719.2 229.8 L719.8 229.4 L720.4 229.7 L721.0 229.6 L721.6 230.0 L722.2 230.1 L722.8 230.1 L723.4 230.3 L724.0 230.3 L724.6 230.2 L725.2 230.4 L725.8 230.6 L726.4 230.7 L727.0 230.9 L727.6 230.8 L728.2 230.9 L728.8 231.0 L729.4 231.1 L730.0 231.3 L730.6 231.3 L731.2 231.4 L731.8 231.5 L732.4 231.6 L733.0 231.7 L733.6 231.8 L734.2 231.9 L734.8 232.0 L735.4 232.0 L736.0 232.0 L736.0 232.4 L735.4 232.4 L734.8 232.4 L734.2 232.5 L733.6 232.6 L733.0 232.7 L732.4 232.8 L731.8 232.8 L731.2 232.9 L730.6 233.0 L730.0 233.2 L729.4 233.2 L728.8 233.5 L728.2 233.5 L727.6 233.5 L727.0 233.5 L726.4 233.8 L725.8 233.7 L725.2 234.0 L724.6 234.0 L724.0 233.9 L723.4 234.1 L722.8 234.3 L722.2 234.5 L721.6 234.5 L721.0 234.7 L720.4 234.5 L719.8 234.9 L719.2 234.7 L718.6 234.9 L718.0 235.1 L717.4 235.1 L716.8 235.3 L716.2 235.4 L715.6 235.1 L715.0 235.4 L714.4 235.1 L713.8 235.5 L713.2 235.6 L712.6 236.1 L712.0 235.8 L711.4 235.5 L710.8 235.5 L710.2 235.8 L709.6 236.0 L709.0 236.0 L708.4 236.5 L707.8 236.6 L707.2 237.2 L706.6 236.7 L706.0 237.3 L705.4 236.1 L704.8 237.3 L704.2 237.4 L703.6 237.3 L703.0 237.9 L702.4 237.2 L701.8 236.8 L701.2 236.5 L700.6 236.9 L700.0 236.7 L699.4 236.8 L698.8 237.2 L698.2 237.1 L697.6 237.3 L697.0 237.8 L696.4 237.0 L695.8 237.5 L695.2 236.7 L694.6 237.7 L694.0 237.7 L693.4 237.1 L692.8 237.5 L692.2 237.2 L691.6 237.0 L691.0 237.1 L690.4 236.8 L689.8 237.3 L689.2 236.8 L688.5 237.1 L687.9 237.6 L687.3 237.3 L686.7 237.7 L686.1 236.4 L685.5 236.7 L684.9 236.3 L684.3 236.9 L683.7 237.6 L683.1 236.8 L682.5 237.7 L681.9 237.0 L681.3 237.6 L680.7 237.7 L680.1 237.1 L679.5 236.9 L678.9 238.2 L678.3 237.8 L677.7 236.4 L677.1 237.4 L676.5 238.3 L675.9 236.7 L675.3 237.2 L674.7 236.7 L674.1 237.1 L673.5 237.0 L672.9 237.4 L672.3 237.1 L671.7 237.2 L671.1 237.2 L670.5 236.7 L669.9 237.1 L669.3 237.0 L668.7 237.4 L668.1 237.9 L667.5 237.5 L666.9 237.5 L666.3 236.9 L665.7 237.4 L665.1 237.7 L664.5 236.6 L663.9 237.9 L663.3 236.7 L662.7 237.0 L662.1 237.2 L661.5 237.7 L660.9 236.8 L660.3 237.1 L659.7 236.9 L659.1 236.4 L658.5 237.7 L657.9 237.7 L657.3 238.2 L656.7 237.1 L656.1 237.5 L655.5 237.7 L654.9 238.1 L654.3 236.7 L653.7 237.2 L653.1 237.6 L652.5 236.6 L651.9 236.6 L651.3 237.4 L650.7 236.6 L650.1 237.4 L649.5 238.1 L648.9 237.3 L648.3 237.5 L647.7 237.8 L647.1 237.7 L646.5 237.3 L645.9 236.9 L645.3 238.1 L644.7 237.6 L644.1 236.8 L643.5 237.2 L642.9 237.0 L642.3 237.4 L641.7 237.2 L641.1 237.3 L640.5 236.7 L639.9 237.1 L639.3 237.1 L638.7 236.3 L638.1 236.4 L637.5 237.1 L636.9 237.7 L636.3 237.1 L635.7 237.2 L635.1 236.6 L634.5 236.9 L633.9 237.7 L633.3 238.0 L632.7 237.8 L632.1 237.1 L631.5 237.2 L630.9 237.9 L630.3 236.9 L629.7 237.2 L629.1 237.7 L628.5 238.0 L627.9 237.3 L627.3 236.4 L626.7 237.0 L626.1 237.9 L625.5 237.0 L624.9 237.7 L624.3 237.2 L623.7 236.7 L623.1 236.7 L622.5 237.0 L621.9 236.9 L621.3 236.7 L620.7 237.0 L620.1 237.9 L619.5 237.4 L618.9 237.6 L618.3 237.4 L617.7 237.6 L617.1 237.0 L616.5 236.7 L615.9 237.6 L615.3 237.0 L614.7 236.7 L614.1 237.6 L613.5 237.0 L612.9 236.8 L612.3 236.9 L611.7 236.6 L611.1 236.7 L610.5 236.8 L609.9 236.8 L609.3 237.2 L608.7 237.1 L608.1 236.6 L607.5 237.9 L606.9 238.1 L606.3 236.6 L605.7 236.4 L605.1 237.4 L604.5 237.0 L603.9 237.2 L603.3 237.7 L602.7 237.4 L602.1 237.3 L601.5 237.5 L600.9 237.0 L600.3 237.2 L599.7 237.5 L599.1 237.6 L598.5 237.2 L597.9 237.7 L597.3 237.6 L596.7 238.1 L596.1 236.9 L595.5 237.1 L594.8 237.6 L594.2 237.6 L593.6 236.9 L593.0 236.9 L592.4 237.0 L591.8 236.9 L591.2 236.6 L590.6 237.2 L590.0 237.9 L589.4 237.3 L588.8 237.3 L588.2 237.1 L587.6 237.5 L587.0 237.0 L586.4 236.9 L585.8 236.7 L585.2 236.5 L584.6 238.0 L584.0 237.1 L583.4 237.1 L582.8 237.6 L582.2 237.9 L581.6 237.4 L581.0 236.9 L580.4 236.8 L579.8 236.9 L579.2 237.8 L578.6 236.9 L578.0 237.6 L577.4 236.8 L576.8 236.9 L576.2 236.4 L575.6 237.5 L575.0 237.2 L574.4 236.7 L573.8 237.4 L573.2 237.6 L572.6 237.5 L572.0 237.8 L571.4 238.2 L570.8 237.5 L570.2 237.4 L569.6 236.7 L569.0 237.3 L568.4 237.0 L567.8 237.2 L567.2 237.4 L566.6 237.0 L566.0 236.9 L565.4 237.2 L564.8 236.8 L564.2 236.7 L563.6 236.9 L563.0 237.7 L562.4 236.9 L561.8 237.1 L561.2 236.6 L560.6 238.1 L560.0 237.6 L559.4 237.7 L558.8 237.5 L558.2 237.0 L557.6 237.8 L557.0 237.2 L556.4 236.5 L555.8 237.5 L555.2 237.0 L554.6 237.4 L554.0 237.8 L553.4 237.3 L552.8 236.9 L552.2 237.4 L551.6 237.4 L551.0 237.3 L550.4 237.1 L549.8 236.0 L549.2 234.4 L548.6 233.3 L548.0 232.2Z" fill="#5f1187"/><path d="M545.4 232.18H758.2" stroke="#5f1187" stroke-width=".7" opacity=".8"/></svg><span style="transform:scaleX(1.000)">Cubase 7 - Lucky Numb... - Audio - Guitar 1_01</span></div>
<div class="clip" style="left:57.1px;top:185.2px;width:258.3px;height:34.4px;background:#b7429e"><svg style="left:0;top:-1px" width="258.3" height="34.4" viewBox="203.3 251.2 258.3 34.4"><path d="M206.0 269.0 L206.6 268.3 L207.2 267.6 L207.8 267.2 L208.4 266.6 L209.0 266.5 L209.6 266.3 L210.2 266.4 L210.8 266.1 L211.4 266.2 L212.0 265.9 L212.6 266.0 L213.2 266.4 L213.8 266.3 L214.4 266.4 L215.0 266.1 L215.6 266.2 L216.2 266.5 L216.8 266.1 L217.4 266.3 L218.0 266.2 L218.6 266.0 L219.2 266.4 L219.8 266.2 L220.4 266.1 L221.0 265.9 L221.6 266.3 L222.2 266.4 L222.8 266.5 L223.4 266.0 L224.0 266.0 L224.6 266.1 L225.2 266.2 L225.8 266.0 L226.4 266.2 L227.0 266.5 L227.6 266.1 L228.2 266.0 L228.8 266.3 L229.4 266.5 L230.0 266.4 L230.6 266.5 L231.2 266.4 L231.8 266.3 L232.4 266.5 L233.0 266.2 L233.6 266.0 L234.2 266.3 L234.8 266.3 L235.4 265.9 L236.0 266.4 L236.6 266.4 L237.3 266.2 L237.9 266.5 L238.5 266.3 L239.1 265.9 L239.7 266.2 L240.3 266.1 L240.9 266.0 L241.5 266.0 L242.1 266.3 L242.7 266.5 L243.3 266.5 L243.9 266.4 L244.5 266.3 L245.1 266.5 L245.7 266.5 L246.3 266.5 L246.9 266.1 L247.5 266.4 L248.1 266.3 L248.7 266.0 L249.3 266.2 L249.9 266.5 L250.5 266.3 L251.1 266.0 L251.7 266.5 L252.3 266.2 L252.9 266.2 L253.5 266.2 L254.1 266.0 L254.7 266.4 L255.3 266.4 L255.9 266.2 L256.5 266.3 L257.1 266.0 L257.7 266.0 L258.3 266.0 L258.9 266.4 L259.5 266.3 L260.1 266.5 L260.7 266.4 L261.3 265.9 L261.9 265.9 L262.5 265.9 L263.1 266.4 L263.7 266.4 L264.3 266.1 L264.9 266.0 L265.5 266.1 L266.1 266.5 L266.7 266.0 L267.3 266.1 L267.9 266.4 L268.5 266.3 L269.1 265.9 L269.7 266.3 L270.3 266.1 L270.9 266.4 L271.5 266.0 L272.1 266.4 L272.7 265.9 L273.3 266.3 L273.9 266.4 L274.5 265.9 L275.1 266.2 L275.7 266.3 L276.3 266.0 L276.9 266.4 L277.5 266.4 L278.1 266.4 L278.7 266.4 L279.3 266.3 L279.9 266.2 L280.5 266.3 L281.1 266.2 L281.7 266.2 L282.3 266.2 L282.9 266.5 L283.5 266.4 L284.1 266.1 L284.7 266.3 L285.3 266.2 L285.9 266.5 L286.5 266.4 L287.1 266.0 L287.7 266.2 L288.3 266.0 L288.9 266.1 L289.5 266.2 L290.1 266.2 L290.7 266.2 L291.3 266.1 L291.9 265.9 L292.5 266.2 L293.1 266.0 L293.7 266.4 L294.3 266.5 L294.9 266.5 L295.5 266.0 L296.1 266.4 L296.7 266.1 L297.3 266.0 L297.9 266.4 L298.5 266.3 L299.2 265.9 L299.8 266.4 L300.4 266.2 L301.0 266.4 L301.6 266.1 L302.2 266.2 L302.8 266.5 L303.4 266.1 L304.0 266.5 L304.6 266.0 L305.2 266.5 L305.8 266.5 L306.4 266.4 L307.0 266.3 L307.6 266.0 L308.2 266.4 L308.8 266.2 L309.4 266.5 L310.0 266.1 L310.6 266.5 L311.2 266.1 L311.8 266.5 L312.4 266.5 L313.0 266.2 L313.6 266.2 L314.2 266.4 L314.8 266.2 L315.4 266.5 L316.0 266.5 L316.6 266.3 L317.2 266.0 L317.8 266.2 L318.4 266.3 L319.0 266.4 L319.6 266.1 L320.2 266.4 L320.8 265.9 L321.4 266.0 L322.0 266.2 L322.6 266.3 L323.2 266.1 L323.8 266.3 L324.4 266.1 L325.0 266.3 L325.6 266.5 L326.2 266.5 L326.8 266.4 L327.4 266.5 L328.0 266.0 L328.6 266.3 L329.2 266.3 L329.8 266.4 L330.4 266.4 L331.0 265.9 L331.6 266.4 L332.2 266.3 L332.8 266.5 L333.4 266.2 L334.0 266.4 L334.6 266.5 L335.2 266.5 L335.8 266.5 L336.4 266.3 L337.0 266.2 L337.6 266.1 L338.2 266.1 L338.8 266.3 L339.4 265.9 L340.0 266.1 L340.6 266.5 L341.2 266.0 L341.8 266.1 L342.4 266.4 L343.0 266.2 L343.6 266.0 L344.2 266.2 L344.8 266.1 L345.4 266.4 L346.0 266.4 L346.6 266.5 L347.2 266.2 L347.8 266.1 L348.4 266.2 L349.0 266.0 L349.6 266.2 L350.2 266.1 L350.8 266.1 L351.4 266.5 L352.0 266.1 L352.6 266.1 L353.2 266.2 L353.8 266.2 L354.4 266.0 L355.0 266.1 L355.6 266.4 L356.2 266.1 L356.8 266.2 L357.4 266.5 L358.0 266.1 L358.6 266.1 L359.2 266.2 L359.8 266.2 L360.5 266.0 L361.1 265.9 L361.7 266.5 L362.3 266.0 L362.9 266.2 L363.5 266.4 L364.1 266.4 L364.7 266.4 L365.3 265.9 L365.9 266.0 L366.5 266.0 L367.1 266.4 L367.7 266.2 L368.3 266.5 L368.9 266.2 L369.5 266.4 L370.1 266.3 L370.7 266.5 L371.3 266.0 L371.9 265.9 L372.5 266.0 L373.1 266.3 L373.7 265.9 L374.3 266.3 L374.9 266.3 L375.5 266.5 L376.1 266.3 L376.7 266.4 L377.3 266.2 L377.9 266.3 L378.5 266.0 L379.1 266.1 L379.7 265.9 L380.3 266.1 L380.9 266.1 L381.5 266.1 L382.1 266.3 L382.7 265.9 L383.3 266.2 L383.9 266.3 L384.5 265.9 L385.1 266.1 L385.7 266.2 L386.3 266.4 L386.9 266.4 L387.5 266.2 L388.1 266.0 L388.7 266.2 L389.3 266.4 L389.9 266.3 L390.5 266.4 L391.1 266.2 L391.7 266.1 L392.3 266.3 L392.9 266.3 L393.5 266.5 L394.1 265.9 L394.7 266.2 L395.3 266.0 L395.9 266.4 L396.5 266.3 L397.1 265.9 L397.7 266.0 L398.3 266.5 L398.9 266.0 L399.5 266.2 L400.1 266.3 L400.7 266.0 L401.3 265.9 L401.9 266.5 L402.5 266.2 L403.1 265.9 L403.7 266.1 L404.3 266.2 L404.9 266.5 L405.5 266.4 L406.1 266.1 L406.7 266.4 L407.3 266.1 L407.9 266.5 L408.5 266.2 L409.1 266.3 L409.7 266.1 L410.3 266.3 L410.9 265.9 L411.5 266.0 L412.1 266.4 L412.7 265.9 L413.3 266.3 L413.9 266.2 L414.5 266.3 L415.1 266.1 L415.7 266.4 L416.3 266.3 L416.9 266.1 L417.5 266.0 L418.1 266.2 L418.7 265.9 L419.3 266.0 L419.9 266.4 L420.5 266.3 L421.1 266.2 L421.7 266.4 L422.4 266.1 L423.0 266.4 L423.6 266.4 L424.2 266.4 L424.8 266.5 L425.4 266.0 L426.0 266.1 L426.6 265.9 L427.2 266.4 L427.8 266.1 L428.4 266.1 L429.0 266.3 L429.6 266.4 L430.2 266.3 L430.8 265.9 L431.4 265.9 L432.0 266.3 L432.6 266.0 L433.2 266.5 L433.8 266.3 L434.4 266.4 L435.0 266.0 L435.6 266.3 L436.2 266.0 L436.8 266.5 L437.4 265.9 L438.0 266.1 L438.6 266.3 L439.2 265.9 L439.8 266.4 L440.4 266.3 L441.0 266.5 L441.6 266.0 L442.2 265.9 L442.8 266.4 L443.4 265.9 L444.0 266.3 L444.6 266.3 L445.2 265.9 L445.8 266.0 L446.4 266.0 L447.0 266.1 L447.6 266.6 L448.2 266.6 L448.8 267.2 L449.4 267.4 L450.0 267.7 L450.6 267.9 L451.2 268.1 L451.8 268.5 L452.4 268.7 L453.0 268.9 L453.0 269.1 L452.4 269.3 L451.8 269.5 L451.2 270.0 L450.6 270.2 L450.0 270.3 L449.4 270.4 L448.8 270.9 L448.2 271.2 L447.6 271.3 L447.0 271.8 L446.4 272.2 L445.8 272.1 L445.2 271.9 L444.6 271.7 L444.0 271.6 L443.4 272.4 L442.8 271.6 L442.2 271.8 L441.6 272.1 L441.0 271.6 L440.4 271.6 L439.8 271.8 L439.2 272.1 L438.6 271.6 L438.0 272.2 L437.4 271.9 L436.8 271.3 L436.2 271.7 L435.6 271.9 L435.0 271.8 L434.4 271.5 L433.8 271.9 L433.2 271.5 L432.6 271.9 L432.0 271.9 L431.4 271.9 L430.8 271.8 L430.2 271.6 L429.6 271.3 L429.0 271.6 L428.4 271.8 L427.8 271.7 L427.2 271.8 L426.6 272.0 L426.0 272.2 L425.4 272.3 L424.8 271.5 L424.2 271.3 L423.6 271.9 L423.0 271.5 L422.4 272.2 L421.7 271.6 L421.1 271.6 L420.5 271.9 L419.9 271.8 L419.3 271.8 L418.7 272.0 L418.1 271.6 L417.5 272.1 L416.9 271.7 L416.3 271.6 L415.7 271.4 L415.1 272.1 L414.5 271.6 L413.9 271.9 L413.3 271.4 L412.7 272.2 L412.1 271.5 L411.5 272.0 L410.9 272.2 L410.3 271.6 L409.7 271.6 L409.1 271.6 L408.5 271.9 L407.9 271.3 L407.3 272.0 L406.7 271.4 L406.1 271.8 L405.5 271.8 L404.9 271.6 L404.3 271.8 L403.7 272.0 L403.1 272.2 L402.5 271.9 L401.9 271.4 L401.3 271.9 L400.7 272.2 L400.1 272.0 L399.5 271.6 L398.9 272.0 L398.3 271.6 L397.7 271.7 L397.1 272.3 L396.5 271.7 L395.9 271.5 L395.3 271.8 L394.7 271.9 L394.1 271.8 L393.5 271.4 L392.9 271.6 L392.3 271.7 L391.7 271.9 L391.1 272.1 L390.5 271.5 L389.9 271.5 L389.3 271.4 L388.7 271.6 L388.1 272.3 L387.5 271.6 L386.9 271.8 L386.3 271.4 L385.7 271.8 L385.1 271.8 L384.5 271.9 L383.9 271.8 L383.3 271.7 L382.7 271.8 L382.1 271.4 L381.5 272.0 L380.9 271.9 L380.3 271.7 L379.7 272.1 L379.1 272.1 L378.5 272.2 L377.9 272.0 L377.3 271.6 L376.7 271.5 L376.1 271.9 L375.5 271.7 L374.9 271.4 L374.3 271.7 L373.7 272.2 L373.1 271.7 L372.5 271.9 L371.9 272.2 L371.3 271.8 L370.7 271.6 L370.1 271.9 L369.5 271.5 L368.9 271.7 L368.3 271.5 L367.7 271.5 L367.1 271.8 L366.5 272.2 L365.9 272.0 L365.3 271.8 L364.7 271.6 L364.1 271.7 L363.5 271.8 L362.9 271.6 L362.3 272.3 L361.7 271.5 L361.1 272.4 L360.5 271.9 L359.8 271.6 L359.2 271.8 L358.6 271.8 L358.0 272.0 L357.4 271.4 L356.8 271.6 L356.2 271.8 L355.6 271.4 L355.0 271.6 L354.4 272.0 L353.8 271.9 L353.2 271.7 L352.6 272.2 L352.0 271.8 L351.4 271.4 L350.8 271.8 L350.2 271.6 L349.6 271.8 L349.0 272.1 L348.4 271.5 L347.8 272.0 L347.2 271.9 L346.6 271.7 L346.0 271.5 L345.4 271.4 L344.8 272.0 L344.2 272.1 L343.6 272.2 L343.0 272.0 L342.4 271.6 L341.8 272.1 L341.2 272.1 L340.6 271.7 L340.0 272.0 L339.4 271.9 L338.8 271.6 L338.2 272.1 L337.6 272.0 L337.0 271.9 L336.4 271.5 L335.8 271.3 L335.2 271.5 L334.6 271.4 L334.0 271.6 L333.4 271.8 L332.8 271.4 L332.2 271.6 L331.6 271.9 L331.0 272.1 L330.4 271.9 L329.8 271.5 L329.2 271.6 L328.6 271.5 L328.0 272.1 L327.4 271.7 L326.8 271.5 L326.2 271.6 L325.6 271.3 L325.0 271.6 L324.4 272.0 L323.8 271.9 L323.2 272.2 L322.6 271.7 L322.0 272.0 L321.4 271.9 L320.8 271.8 L320.2 271.6 L319.6 272.0 L319.0 271.4 L318.4 271.4 L317.8 271.6 L317.2 271.8 L316.6 271.6 L316.0 271.4 L315.4 271.4 L314.8 271.7 L314.2 271.4 L313.6 272.1 L313.0 271.7 L312.4 271.7 L311.8 271.7 L311.2 272.0 L310.6 271.7 L310.0 271.9 L309.4 271.3 L308.8 271.9 L308.2 271.8 L307.6 271.8 L307.0 272.0 L306.4 271.5 L305.8 271.6 L305.2 271.4 L304.6 272.2 L304.0 271.8 L303.4 271.9 L302.8 271.4 L302.2 271.8 L301.6 271.6 L301.0 271.5 L300.4 271.7 L299.8 271.5 L299.2 272.3 L298.5 271.7 L297.9 271.9 L297.3 272.3 L296.7 271.7 L296.1 271.7 L295.5 272.2 L294.9 271.6 L294.3 271.4 L293.7 271.5 L293.1 271.8 L292.5 272.1 L291.9 271.9 L291.3 272.1 L290.7 272.0 L290.1 271.8 L289.5 271.9 L288.9 271.9 L288.3 272.0 L287.7 272.0 L287.1 272.0 L286.5 271.5 L285.9 271.6 L285.3 272.0 L284.7 271.7 L284.1 272.0 L283.5 271.6 L282.9 271.6 L282.3 271.6 L281.7 271.5 L281.1 271.8 L280.5 272.0 L279.9 272.1 L279.3 271.7 L278.7 271.8 L278.1 271.6 L277.5 271.7 L276.9 271.5 L276.3 271.8 L275.7 272.0 L275.1 272.0 L274.5 272.2 L273.9 271.3 L273.3 271.7 L272.7 272.2 L272.1 271.7 L271.5 272.2 L270.9 271.4 L270.3 271.7 L269.7 272.0 L269.1 272.0 L268.5 271.8 L267.9 271.7 L267.3 271.9 L266.7 272.2 L266.1 271.6 L265.5 272.1 L264.9 272.0 L264.3 272.1 L263.7 271.4 L263.1 271.5 L262.5 272.0 L261.9 272.4 L261.3 272.0 L260.7 271.7 L260.1 271.4 L259.5 271.4 L258.9 271.6 L258.3 272.1 L257.7 272.2 L257.1 272.3 L256.5 271.5 L255.9 272.0 L255.3 271.7 L254.7 271.6 L254.1 272.1 L253.5 272.1 L252.9 271.6 L252.3 271.6 L251.7 271.7 L251.1 271.8 L250.5 271.6 L249.9 271.3 L249.3 271.8 L248.7 272.3 L248.1 271.5 L247.5 271.6 L246.9 271.7 L246.3 271.7 L245.7 271.5 L245.1 271.3 L244.5 271.5 L243.9 271.4 L243.3 271.3 L242.7 271.6 L242.1 271.7 L241.5 272.2 L240.9 272.2 L240.3 271.6 L239.7 271.9 L239.1 272.2 L238.5 271.7 L237.9 271.4 L237.3 271.7 L236.6 271.6 L236.0 271.5 L235.4 271.9 L234.8 271.9 L234.2 271.6 L233.6 272.2 L233.0 272.0 L232.4 271.5 L231.8 271.9 L231.2 271.4 L230.6 271.7 L230.0 271.4 L229.4 271.5 L228.8 271.8 L228.2 271.9 L227.6 272.2 L227.0 271.6 L226.4 271.9 L225.8 272.3 L225.2 271.8 L224.6 272.0 L224.0 271.9 L223.4 272.0 L222.8 271.6 L222.2 271.6 L221.6 271.9 L221.0 271.9 L220.4 271.8 L219.8 272.0 L219.2 271.7 L218.6 272.1 L218.0 271.7 L217.4 271.7 L216.8 271.9 L216.2 271.4 L215.6 271.6 L215.0 271.8 L214.4 271.6 L213.8 271.8 L213.2 271.4 L212.6 271.9 L212.0 271.8 L211.4 271.8 L210.8 272.1 L210.2 271.4 L209.6 271.9 L209.0 271.3 L208.4 271.4 L207.8 270.8 L207.2 270.3 L206.6 269.6 L206.0 269.0Z" fill="#84116a"/><path d="M203.3 269.0H461.6" stroke="#84116a" stroke-width=".7" opacity=".8"/></svg><span style="transform:scaleX(1.006)">Cubase 7 - Lucky Number - 0...8 - Audio - Guitar 2 high_01</span></div>
<div class="clip" style="left:400.4px;top:185.2px;width:211.6px;height:34.4px;background:#b7429e"><svg style="left:0;top:-1px" width="211.6" height="34.4" viewBox="546.6 251.2 211.6 34.4"><path d="M548.0 269.0 L548.6 268.4 L549.2 267.8 L549.8 266.8 L550.4 266.2 L551.0 266.2 L551.6 266.4 L552.2 266.5 L552.8 266.5 L553.4 266.3 L554.0 266.3 L554.6 266.4 L555.2 266.5 L555.8 266.3 L556.4 266.3 L557.0 266.2 L557.6 266.0 L558.2 266.4 L558.8 265.9 L559.4 266.4 L560.0 266.2 L560.6 266.0 L561.2 266.3 L561.8 266.4 L562.4 266.5 L563.0 266.1 L563.6 266.0 L564.2 266.4 L564.8 266.2 L565.4 266.5 L566.0 266.2 L566.6 266.4 L567.2 266.5 L567.8 266.4 L568.4 266.3 L569.0 266.0 L569.6 266.3 L570.2 266.1 L570.8 266.4 L571.4 266.3 L572.0 266.0 L572.6 266.4 L573.2 266.4 L573.8 266.2 L574.4 266.2 L575.0 266.5 L575.6 266.5 L576.2 266.3 L576.8 266.2 L577.4 265.9 L578.0 266.5 L578.6 266.3 L579.2 266.1 L579.8 265.9 L580.4 266.0 L581.0 266.0 L581.6 265.9 L582.2 265.9 L582.8 266.4 L583.4 266.2 L584.0 266.1 L584.6 266.2 L585.2 266.4 L585.8 266.2 L586.4 266.2 L587.0 266.1 L587.6 266.3 L588.2 266.4 L588.8 266.2 L589.4 266.1 L590.0 266.1 L590.6 266.3 L591.2 266.5 L591.8 266.1 L592.4 266.1 L593.0 266.4 L593.6 266.1 L594.2 266.5 L594.8 266.0 L595.4 265.9 L596.0 266.4 L596.6 266.2 L597.2 266.3 L597.8 266.0 L598.4 266.1 L599.0 266.0 L599.6 266.0 L600.2 266.3 L600.8 266.0 L601.4 266.3 L602.0 266.0 L602.6 265.9 L603.2 266.0 L603.8 266.3 L604.4 266.2 L605.0 266.0 L605.6 266.5 L606.2 266.4 L606.8 266.4 L607.4 266.4 L608.0 266.0 L608.6 266.3 L609.2 266.3 L609.8 265.9 L610.4 266.1 L611.0 266.0 L611.6 266.0 L612.2 266.0 L612.8 266.3 L613.4 266.0 L614.0 265.9 L614.6 266.4 L615.2 266.1 L615.8 266.2 L616.4 266.0 L617.0 266.5 L617.6 266.0 L618.2 266.3 L618.8 265.9 L619.4 266.1 L620.0 266.0 L620.6 266.1 L621.2 266.3 L621.8 266.3 L622.4 266.2 L623.0 266.1 L623.6 266.4 L624.2 266.3 L624.8 266.0 L625.4 266.4 L626.0 266.4 L626.6 266.5 L627.2 266.2 L627.8 266.0 L628.4 266.3 L629.0 266.1 L629.6 266.2 L630.2 265.9 L630.8 266.4 L631.4 266.3 L632.0 266.0 L632.6 266.0 L633.2 266.1 L633.8 265.9 L634.4 266.0 L635.0 266.1 L635.6 266.2 L636.2 266.0 L636.8 266.3 L637.4 266.2 L638.0 266.0 L638.6 265.9 L639.2 265.9 L639.8 266.4 L640.4 266.0 L641.0 266.1 L641.6 266.3 L642.2 266.3 L642.8 266.3 L643.4 266.1 L644.0 266.1 L644.6 266.4 L645.2 266.4 L645.8 266.3 L646.4 265.9 L647.0 265.9 L647.6 266.1 L648.2 265.9 L648.8 265.9 L649.4 266.2 L650.0 266.4 L650.6 266.3 L651.2 266.0 L651.8 266.1 L652.4 266.4 L653.0 266.0 L653.6 266.5 L654.2 266.3 L654.8 266.2 L655.4 266.1 L656.0 266.0 L656.6 266.2 L657.2 266.0 L657.8 266.0 L658.4 266.1 L659.0 266.1 L659.6 266.2 L660.2 266.3 L660.8 266.2 L661.4 266.3 L662.0 266.1 L662.6 266.4 L663.2 266.5 L663.8 266.0 L664.4 266.1 L665.0 266.0 L665.6 266.4 L666.2 266.1 L666.8 266.3 L667.4 266.1 L668.0 266.2 L668.6 266.5 L669.2 266.3 L669.8 266.3 L670.4 266.5 L671.0 266.5 L671.6 266.2 L672.2 266.1 L672.8 266.0 L673.4 266.4 L674.0 266.1 L674.6 266.1 L675.2 266.1 L675.8 266.4 L676.4 266.4 L677.0 266.5 L677.6 266.1 L678.2 266.3 L678.8 266.4 L679.4 266.1 L680.0 266.4 L680.6 266.1 L681.2 266.0 L681.8 266.0 L682.4 266.2 L683.0 266.3 L683.6 266.5 L684.2 266.2 L684.8 266.1 L685.4 266.0 L686.0 266.1 L686.6 266.2 L687.2 266.0 L687.8 266.4 L688.4 266.4 L689.0 266.1 L689.6 266.1 L690.2 266.4 L690.8 265.9 L691.4 266.4 L692.0 266.0 L692.6 266.3 L693.2 266.4 L693.8 266.0 L694.4 266.2 L695.0 266.2 L695.6 266.0 L696.2 266.4 L696.8 265.9 L697.4 266.2 L698.0 266.2 L698.6 266.1 L699.2 265.9 L699.8 266.2 L700.4 266.1 L701.0 266.3 L701.6 266.3 L702.2 266.4 L702.8 266.0 L703.4 266.0 L704.0 266.3 L704.6 266.2 L705.2 266.4 L705.8 266.3 L706.4 266.5 L707.0 266.6 L707.6 266.4 L708.2 266.8 L708.8 266.7 L709.4 266.5 L710.0 266.8 L710.6 266.8 L711.2 267.0 L711.8 266.8 L712.4 267.0 L713.0 267.0 L713.6 267.2 L714.2 267.1 L714.8 267.1 L715.4 267.1 L716.0 267.3 L716.6 267.3 L717.2 267.5 L717.8 267.6 L718.4 267.5 L719.0 267.5 L719.6 267.5 L720.2 267.7 L720.8 267.7 L721.4 267.7 L722.0 267.8 L722.6 267.9 L723.2 267.9 L723.8 268.0 L724.4 268.1 L725.0 268.0 L725.6 268.1 L726.2 268.1 L726.8 268.2 L727.4 268.2 L728.0 268.3 L728.6 268.3 L729.2 268.4 L729.8 268.4 L730.4 268.4 L731.0 268.5 L731.6 268.6 L732.2 268.6 L732.8 268.6 L733.4 268.7 L734.0 268.7 L734.6 268.8 L735.2 268.8 L735.8 268.9 L736.4 268.9 L737.0 268.9 L737.0 269.1 L736.4 269.1 L735.8 269.1 L735.2 269.1 L734.6 269.2 L734.0 269.3 L733.4 269.3 L732.8 269.4 L732.2 269.4 L731.6 269.5 L731.0 269.6 L730.4 269.5 L729.8 269.6 L729.2 269.7 L728.6 269.7 L728.0 269.6 L727.4 269.7 L726.8 269.9 L726.2 270.0 L725.6 270.0 L725.0 269.9 L724.4 269.9 L723.8 270.1 L723.2 270.1 L722.6 270.0 L722.0 270.2 L721.4 270.3 L720.8 270.4 L720.2 270.2 L719.6 270.4 L719.0 270.5 L718.4 270.5 L717.8 270.4 L717.2 270.4 L716.6 270.7 L716.0 270.8 L715.4 270.7 L714.8 270.9 L714.2 271.0 L713.6 271.0 L713.0 271.1 L712.4 271.0 L711.8 271.4 L711.2 270.8 L710.6 271.2 L710.0 271.5 L709.4 271.6 L708.8 271.4 L708.2 271.3 L707.6 271.4 L707.0 271.4 L706.4 271.5 L705.8 271.7 L705.2 271.7 L704.6 272.0 L704.0 271.7 L703.4 272.3 L702.8 272.0 L702.2 271.6 L701.6 271.7 L701.0 271.6 L700.4 271.6 L699.8 271.6 L699.2 272.0 L698.6 271.6 L698.0 271.8 L697.4 271.7 L696.8 272.1 L696.2 271.7 L695.6 272.3 L695.0 271.8 L694.4 271.8 L693.8 272.1 L693.2 271.5 L692.6 271.9 L692.0 272.3 L691.4 271.7 L690.8 271.9 L690.2 271.6 L689.6 271.9 L689.0 271.7 L688.4 271.7 L687.8 271.4 L687.2 272.0 L686.6 271.6 L686.0 271.9 L685.4 272.3 L684.8 272.1 L684.2 272.0 L683.6 271.5 L683.0 271.8 L682.4 271.9 L681.8 272.2 L681.2 272.1 L680.6 271.7 L680.0 271.7 L679.4 271.8 L678.8 271.7 L678.2 271.8 L677.6 271.8 L677.0 271.5 L676.4 271.4 L675.8 271.7 L675.2 271.9 L674.6 271.8 L674.0 272.2 L673.4 271.4 L672.8 272.0 L672.2 272.2 L671.6 272.0 L671.0 271.5 L670.4 271.7 L669.8 272.0 L669.2 271.9 L668.6 271.6 L668.0 271.9 L667.4 272.1 L666.8 271.9 L666.2 271.8 L665.6 271.3 L665.0 271.8 L664.4 271.7 L663.8 271.8 L663.2 271.7 L662.6 271.7 L662.0 271.7 L661.4 271.7 L660.8 271.7 L660.2 271.8 L659.6 272.0 L659.0 271.8 L658.4 271.9 L657.8 272.0 L657.2 271.9 L656.6 271.7 L656.0 272.1 L655.4 272.0 L654.8 271.7 L654.2 271.6 L653.6 271.4 L653.0 271.9 L652.4 271.7 L651.8 271.6 L651.2 271.9 L650.6 271.6 L650.0 271.6 L649.4 271.6 L648.8 272.2 L648.2 272.0 L647.6 271.9 L647.0 271.8 L646.4 271.8 L645.8 271.8 L645.2 271.8 L644.6 271.6 L644.0 271.7 L643.4 271.7 L642.8 271.8 L642.2 272.0 L641.6 271.5 L641.0 271.7 L640.4 272.1 L639.8 271.6 L639.2 271.9 L638.6 272.1 L638.0 272.0 L637.4 271.6 L636.8 271.8 L636.2 272.0 L635.6 271.7 L635.0 272.2 L634.4 272.3 L633.8 272.1 L633.2 271.8 L632.6 272.1 L632.0 271.7 L631.4 271.6 L630.8 271.5 L630.2 272.4 L629.6 272.1 L629.0 271.9 L628.4 271.9 L627.8 272.0 L627.2 272.0 L626.6 271.3 L626.0 271.7 L625.4 271.5 L624.8 271.7 L624.2 271.7 L623.6 271.5 L623.0 271.8 L622.4 271.6 L621.8 271.6 L621.2 271.6 L620.6 272.0 L620.0 272.2 L619.4 271.8 L618.8 272.3 L618.2 271.4 L617.6 272.1 L617.0 271.6 L616.4 272.3 L615.8 272.0 L615.2 271.7 L614.6 271.6 L614.0 272.2 L613.4 272.3 L612.8 271.8 L612.2 272.1 L611.6 271.9 L611.0 272.0 L610.4 271.8 L609.8 272.3 L609.2 271.7 L608.6 271.9 L608.0 272.0 L607.4 271.5 L606.8 271.7 L606.2 271.6 L605.6 271.6 L605.0 271.9 L604.4 271.8 L603.8 271.7 L603.2 272.1 L602.6 272.2 L602.0 272.1 L601.4 271.7 L600.8 271.9 L600.2 272.0 L599.6 271.8 L599.0 271.8 L598.4 272.1 L597.8 272.0 L597.2 271.9 L596.6 272.1 L596.0 271.5 L595.4 272.3 L594.8 272.2 L594.2 271.5 L593.6 272.0 L593.0 271.6 L592.4 271.7 L591.8 272.0 L591.2 271.8 L590.6 271.7 L590.0 271.6 L589.4 272.1 L588.8 271.5 L588.2 271.5 L587.6 271.6 L587.0 271.9 L586.4 271.9 L585.8 271.6 L585.2 271.6 L584.6 271.6 L584.0 271.9 L583.4 271.5 L582.8 271.8 L582.2 272.1 L581.6 272.2 L581.0 271.7 L580.4 271.8 L579.8 271.8 L579.2 271.9 L578.6 271.8 L578.0 271.3 L577.4 271.8 L576.8 271.9 L576.2 271.9 L575.6 271.6 L575.0 271.3 L574.4 271.7 L573.8 271.7 L573.2 271.6 L572.6 271.6 L572.0 271.9 L571.4 271.4 L570.8 271.7 L570.2 272.2 L569.6 271.5 L569.0 271.8 L568.4 271.9 L567.8 271.6 L567.2 271.4 L566.6 271.5 L566.0 271.9 L565.4 271.7 L564.8 271.8 L564.2 271.4 L563.6 272.0 L563.0 272.2 L562.4 271.6 L561.8 271.7 L561.2 271.9 L560.6 271.9 L560.0 272.0 L559.4 271.8 L558.8 272.1 L558.2 271.3 L557.6 272.1 L557.0 271.9 L556.4 271.8 L555.8 271.8 L555.2 271.6 L554.6 271.9 L554.0 271.5 L553.4 272.0 L552.8 271.4 L552.2 271.4 L551.6 271.8 L551.0 271.8 L550.4 271.7 L549.8 271.1 L549.2 270.2 L548.6 269.6 L548.0 269.0Z" fill="#84116a"/><path d="M546.6 269.0H758.2" stroke="#84116a" stroke-width=".7" opacity=".8"/></svg><span style="transform:scaleX(1.000)">Cubase 7 - Lucky Numb...dio - Guitar 2 high_01</span></div>
<div class="clip" style="left:376.6px;top:222.0px;width:38.7px;height:34.4px;background:#be4376"><svg style="left:0;top:-1px" width="38.7" height="34.4" viewBox="522.8 288.0 38.7 34.4"><path d="M527.6 305.8 L528.3 305.6 L528.9 305.3 L529.6 305.2 L530.2 305.0 L530.9 305.1 L531.5 305.1 L532.2 305.5 L532.8 305.6 L533.5 305.8 L533.5 305.8 L532.8 306.0 L532.2 306.2 L531.5 306.5 L530.9 306.4 L530.2 306.7 L529.6 306.4 L528.9 306.3 L528.3 306.1 L527.6 305.8Z M532.5 305.8 L533.1 305.1 L533.7 304.6 L534.3 304.1 L534.9 303.6 L535.5 302.6 L536.1 303.7 L536.8 304.0 L537.4 303.3 L538.0 304.0 L538.6 304.7 L539.2 305.0 L539.8 305.2 L540.4 305.4 L541.0 305.8 L541.0 305.8 L540.4 306.2 L539.8 306.4 L539.2 306.6 L538.6 307.0 L538.0 307.5 L537.4 308.3 L536.8 307.5 L536.1 307.7 L535.5 309.3 L534.9 308.1 L534.3 307.6 L533.7 307.0 L533.1 306.6 L532.5 305.8Z M540.0 305.6 L540.6 304.3 L541.2 302.7 L541.9 301.9 L542.5 301.0 L543.1 301.6 L543.7 301.2 L544.3 302.3 L545.0 302.2 L545.6 302.5 L546.2 302.6 L546.8 302.6 L547.4 302.8 L548.0 303.0 L548.7 303.4 L549.3 303.8 L549.9 303.9 L550.5 304.0 L551.1 304.5 L551.8 304.8 L552.4 305.2 L553.0 305.6 L553.0 306.0 L552.4 306.4 L551.8 306.8 L551.1 307.2 L550.5 307.6 L549.9 307.6 L549.3 308.0 L548.7 308.3 L548.0 308.8 L547.4 308.6 L546.8 308.8 L546.2 308.7 L545.6 309.1 L545.0 309.4 L544.3 309.5 L543.7 310.5 L543.1 310.0 L542.5 310.8 L541.9 309.7 L541.2 309.1 L540.6 307.4 L540.0 306.0Z" fill="#8a1545"/><path d="M522.8 305.82H561.5" stroke="#8a1545" stroke-width=".7" opacity=".8"/></svg><span style="transform:scaleX(0.976)">Cub...01</span></div>
<div class="clip" style="left:496.6px;top:222.0px;width:118.8px;height:34.4px;background:#be4376"><svg style="left:0;top:-1px" width="118.8" height="34.4" viewBox="642.8 288.0 118.8 34.4"><path d="M650.0 305.1 L650.6 305.0 L651.2 305.2 L651.8 305.2 L652.4 305.3 L653.0 305.1 L653.6 305.1 L654.2 305.2 L654.8 304.9 L655.4 305.3 L656.0 305.2 L656.6 305.2 L657.2 305.3 L657.8 305.2 L658.4 305.3 L659.0 305.0 L659.6 305.2 L660.2 305.1 L660.8 305.2 L661.4 304.9 L662.0 305.2 L662.6 305.2 L663.2 305.2 L663.8 305.0 L664.4 305.1 L665.0 305.2 L665.6 305.1 L666.2 305.0 L666.8 305.1 L667.4 305.1 L668.0 305.1 L668.6 305.1 L669.2 305.2 L669.8 305.1 L670.4 305.1 L671.0 305.2 L671.6 305.1 L672.2 305.1 L672.8 305.0 L673.4 305.0 L674.1 305.2 L674.7 305.0 L675.3 305.1 L675.9 305.1 L676.5 305.0 L677.1 305.0 L677.7 305.2 L678.3 305.1 L678.9 305.2 L679.5 305.2 L680.1 305.0 L680.7 305.0 L681.3 305.0 L681.9 305.1 L682.5 305.2 L683.1 305.0 L683.7 305.1 L684.3 305.2 L684.9 305.1 L685.5 305.1 L686.1 305.1 L686.7 305.1 L687.3 305.1 L687.9 305.0 L688.5 304.9 L689.1 305.3 L689.7 305.3 L690.3 305.0 L690.9 305.2 L691.5 305.0 L692.1 305.0 L692.7 305.1 L693.3 305.0 L693.9 305.0 L694.5 305.0 L695.1 305.2 L695.7 305.3 L696.3 305.1 L696.9 305.2 L697.5 304.9 L698.1 305.1 L698.7 305.1 L699.3 305.0 L699.9 305.0 L700.5 305.0 L701.1 305.1 L701.7 305.1 L702.3 305.2 L702.9 304.9 L703.5 305.1 L704.1 305.2 L704.7 305.2 L705.3 305.2 L705.9 305.1 L706.5 305.2 L707.1 305.0 L707.7 305.0 L708.3 305.1 L708.9 305.0 L709.5 304.9 L710.1 305.0 L710.7 305.0 L711.3 305.0 L711.9 305.1 L712.5 305.0 L713.1 305.1 L713.7 305.1 L714.3 304.9 L714.9 305.1 L715.5 305.3 L716.1 304.9 L716.7 305.1 L717.3 305.2 L717.9 305.2 L718.5 305.1 L719.1 305.3 L719.7 305.3 L720.3 305.2 L720.9 305.1 L721.6 305.0 L722.2 305.1 L722.8 305.3 L723.4 305.0 L724.0 305.2 L724.6 305.2 L725.2 305.2 L725.8 305.0 L726.4 305.1 L727.0 305.1 L727.6 305.1 L728.2 305.1 L728.8 305.0 L729.4 305.1 L730.0 305.2 L730.6 305.1 L731.2 305.1 L731.8 305.0 L732.4 305.2 L733.0 305.1 L733.6 305.1 L734.2 304.9 L734.8 305.0 L735.4 305.2 L736.0 304.9 L736.6 305.0 L737.2 305.0 L737.8 304.9 L738.4 305.0 L739.0 305.2 L739.6 305.1 L740.2 305.0 L740.8 305.2 L741.4 305.2 L742.0 305.1 L742.6 305.1 L743.2 305.1 L743.8 305.1 L744.4 305.1 L745.0 305.3 L745.0 306.3 L744.4 306.6 L743.8 306.5 L743.2 306.6 L742.6 306.6 L742.0 306.6 L741.4 306.4 L740.8 306.5 L740.2 306.6 L739.6 306.5 L739.0 306.3 L738.4 306.7 L737.8 306.7 L737.2 306.6 L736.6 306.7 L736.0 306.7 L735.4 306.4 L734.8 306.6 L734.2 306.7 L733.6 306.6 L733.0 306.5 L732.4 306.4 L731.8 306.6 L731.2 306.6 L730.6 306.5 L730.0 306.5 L729.4 306.5 L728.8 306.6 L728.2 306.5 L727.6 306.6 L727.0 306.5 L726.4 306.6 L725.8 306.7 L725.2 306.4 L724.6 306.4 L724.0 306.4 L723.4 306.6 L722.8 306.4 L722.2 306.5 L721.6 306.7 L720.9 306.5 L720.3 306.4 L719.7 306.4 L719.1 306.3 L718.5 306.6 L717.9 306.4 L717.3 306.4 L716.7 306.7 L716.1 306.7 L715.5 306.4 L714.9 306.5 L714.3 306.7 L713.7 306.5 L713.1 306.6 L712.5 306.6 L711.9 306.5 L711.3 306.7 L710.7 306.7 L710.1 306.6 L709.5 306.6 L708.9 306.7 L708.3 306.6 L707.7 306.6 L707.1 306.6 L706.5 306.4 L705.9 306.6 L705.3 306.5 L704.7 306.4 L704.1 306.5 L703.5 306.4 L702.9 306.8 L702.3 306.4 L701.7 306.5 L701.1 306.6 L700.5 306.7 L699.9 306.7 L699.3 306.7 L698.7 306.5 L698.1 306.5 L697.5 306.6 L696.9 306.4 L696.3 306.5 L695.7 306.4 L695.1 306.4 L694.5 306.7 L693.9 306.7 L693.3 306.6 L692.7 306.6 L692.1 306.7 L691.5 306.7 L690.9 306.4 L690.3 306.6 L689.7 306.3 L689.1 306.4 L688.5 306.8 L687.9 306.6 L687.3 306.6 L686.7 306.5 L686.1 306.5 L685.5 306.5 L684.9 306.6 L684.3 306.4 L683.7 306.5 L683.1 306.7 L682.5 306.4 L681.9 306.5 L681.3 306.6 L680.7 306.6 L680.1 306.7 L679.5 306.4 L678.9 306.4 L678.3 306.6 L677.7 306.5 L677.1 306.7 L676.5 306.6 L675.9 306.6 L675.3 306.6 L674.7 306.6 L674.1 306.5 L673.4 306.7 L672.8 306.7 L672.2 306.5 L671.6 306.5 L671.0 306.4 L670.4 306.5 L669.8 306.4 L669.2 306.4 L668.6 306.6 L668.0 306.5 L667.4 306.5 L666.8 306.6 L666.2 306.7 L665.6 306.5 L665.0 306.5 L664.4 306.4 L663.8 306.6 L663.2 306.4 L662.6 306.4 L662.0 306.4 L661.4 306.7 L660.8 306.4 L660.2 306.5 L659.6 306.4 L659.0 306.6 L658.4 306.4 L657.8 306.4 L657.2 306.4 L656.6 306.5 L656.0 306.5 L655.4 306.3 L654.8 306.7 L654.2 306.4 L653.6 306.6 L653.0 306.5 L652.4 306.4 L651.8 306.5 L651.2 306.4 L650.6 306.7 L650.0 306.5Z" fill="#8a1545"/><path d="M642.8 305.82H761.6" stroke="#8a1545" stroke-width=".7" opacity=".8"/></svg><span style="transform:scaleX(0.998)">Cubase 7 - L...GuitarFX_01</span></div>
<div class="clip" style="left:388.2px;top:258.8px;width:223.8px;height:34.4px;background:#be3f45"><svg style="left:0;top:-1px" width="223.8" height="34.4" viewBox="534.4 324.8 223.8 34.4"><path d="M549.0 342.6 L549.6 338.7 L550.2 336.1 L550.8 336.4 L551.4 335.9 L552.0 335.8 L552.6 339.9 L553.2 339.9 L553.8 339.9 L554.4 336.3 L555.0 336.1 L555.6 336.0 L556.2 336.1 L556.8 335.7 L557.4 336.2 L558.0 339.9 L558.6 339.9 L559.2 336.2 L559.8 336.4 L560.4 336.1 L561.0 336.4 L561.6 336.2 L562.2 335.8 L562.8 339.9 L563.4 339.9 L564.0 336.3 L564.6 336.3 L565.2 336.0 L565.8 336.3 L566.4 335.9 L567.0 336.3 L567.6 339.9 L568.2 339.9 L568.8 336.3 L569.4 336.2 L570.0 336.0 L570.6 336.2 L571.2 336.1 L571.8 336.3 L572.4 339.9 L573.0 339.9 L573.6 335.8 L574.2 335.8 L574.8 336.4 L575.4 336.3 L576.0 335.9 L576.6 336.3 L577.2 339.9 L577.8 339.9 L578.4 339.9 L579.0 336.3 L579.6 336.1 L580.2 336.2 L580.8 336.2 L581.4 336.0 L582.0 339.9 L582.6 339.9 L583.2 339.9 L583.8 336.4 L584.4 335.9 L585.0 336.4 L585.6 335.8 L586.2 335.9 L586.8 336.0 L587.4 339.9 L588.0 339.9 L588.6 336.0 L589.2 336.0 L589.8 335.7 L590.4 336.2 L591.0 336.1 L591.6 335.9 L592.2 339.9 L592.8 339.9 L593.4 336.0 L594.0 336.4 L594.6 336.3 L595.2 336.0 L595.8 336.2 L596.4 336.1 L597.0 339.9 L597.6 339.9 L598.2 336.3 L598.8 335.8 L599.4 336.2 L600.0 336.2 L600.6 336.0 L601.2 335.9 L601.8 339.9 L602.4 339.9 L603.0 335.9 L603.6 335.9 L604.2 336.1 L604.8 336.3 L605.4 336.0 L606.0 336.0 L606.6 339.9 L607.2 339.9 L607.8 339.9 L608.4 335.9 L609.0 336.2 L609.6 336.0 L610.2 335.9 L610.8 335.8 L611.4 339.9 L612.0 339.9 L612.6 339.9 L613.2 335.9 L613.8 336.0 L614.4 335.9 L615.0 336.3 L615.6 335.8 L616.2 336.2 L616.8 339.9 L617.4 339.9 L618.0 335.9 L618.6 335.9 L619.2 336.3 L619.8 336.3 L620.4 335.9 L621.0 335.8 L621.6 339.9 L622.2 339.9 L622.8 335.9 L623.4 335.8 L624.0 336.2 L624.6 336.3 L625.2 336.1 L625.8 336.1 L626.4 339.9 L627.0 339.9 L627.6 335.9 L628.2 336.0 L628.8 336.1 L629.4 336.2 L630.0 336.1 L630.6 336.1 L631.2 339.9 L631.8 339.9 L632.4 336.4 L633.0 336.0 L633.6 336.0 L634.2 336.3 L634.8 336.3 L635.4 336.2 L636.0 339.9 L636.6 339.9 L637.2 336.1 L637.8 335.8 L638.4 335.9 L639.0 336.2 L639.6 335.7 L640.2 336.3 L640.8 339.9 L641.4 339.9 L642.0 339.9 L642.6 336.0 L643.2 336.0 L643.8 336.4 L644.4 336.1 L645.0 336.4 L645.6 336.0 L646.2 339.9 L646.8 339.9 L647.4 335.7 L648.0 336.4 L648.6 335.9 L649.2 336.1 L649.8 336.4 L650.4 336.3 L651.0 339.9 L651.6 339.9 L652.2 336.4 L652.8 335.9 L653.4 336.2 L654.0 335.8 L654.6 335.8 L655.2 335.9 L655.8 339.9 L656.4 339.9 L657.0 336.2 L657.6 336.2 L658.2 336.2 L658.8 336.3 L659.4 336.2 L660.0 336.1 L660.6 339.9 L661.2 339.9 L661.8 336.4 L662.4 336.3 L663.0 336.3 L663.6 336.3 L664.2 336.1 L664.8 335.7 L665.4 339.9 L666.0 339.9 L666.6 335.8 L667.2 336.3 L667.8 336.4 L668.4 336.1 L669.0 336.2 L669.6 336.2 L670.2 339.9 L670.8 339.9 L671.4 339.9 L672.0 335.8 L672.6 335.7 L673.2 335.8 L673.8 335.8 L674.4 335.8 L675.0 335.8 L675.6 339.9 L676.2 339.9 L676.8 336.4 L677.4 336.1 L678.0 336.2 L678.6 335.9 L679.2 335.8 L679.8 336.4 L680.4 339.9 L681.0 339.9 L681.6 336.0 L682.2 335.9 L682.8 335.8 L683.4 336.4 L684.0 336.1 L684.6 336.1 L685.2 339.9 L685.8 339.9 L686.4 336.1 L687.0 335.9 L687.6 336.3 L688.2 335.9 L688.8 336.3 L689.4 336.0 L690.0 339.9 L690.6 339.9 L691.2 336.2 L691.8 336.4 L692.4 336.1 L693.0 335.9 L693.6 336.0 L694.2 335.9 L694.8 339.9 L695.4 339.9 L696.0 339.9 L696.6 336.0 L697.2 335.8 L697.8 336.2 L698.4 335.8 L699.0 336.2 L699.6 339.9 L700.2 339.9 L700.8 339.9 L701.4 338.6 L702.0 342.6 L702.0 342.6 L701.4 346.8 L700.8 345.6 L700.2 345.2 L699.6 345.3 L699.0 348.9 L698.4 350.0 L697.8 348.8 L697.2 349.4 L696.6 349.8 L696.0 345.2 L695.4 345.5 L694.8 345.2 L694.2 349.6 L693.6 348.7 L693.0 348.8 L692.4 349.4 L691.8 348.4 L691.2 348.6 L690.6 345.6 L690.0 345.4 L689.4 350.0 L688.8 349.4 L688.2 349.0 L687.6 349.3 L687.0 349.8 L686.4 348.8 L685.8 345.5 L685.2 345.5 L684.6 348.7 L684.0 349.3 L683.4 348.3 L682.8 350.1 L682.2 349.0 L681.6 349.4 L681.0 345.3 L680.4 345.5 L679.8 349.4 L679.2 349.8 L678.6 349.4 L678.0 349.1 L677.4 349.4 L676.8 348.9 L676.2 345.4 L675.6 345.2 L675.0 350.0 L674.4 349.8 L673.8 349.2 L673.2 349.4 L672.6 350.1 L672.0 349.8 L671.4 345.5 L670.8 345.1 L670.2 345.1 L669.6 349.3 L669.0 349.2 L668.4 349.3 L667.8 349.4 L667.2 349.0 L666.6 349.0 L666.0 345.5 L665.4 345.2 L664.8 349.7 L664.2 349.8 L663.6 349.5 L663.0 348.8 L662.4 348.9 L661.8 349.0 L661.2 345.5 L660.6 345.5 L660.0 349.1 L659.4 349.3 L658.8 349.6 L658.2 349.3 L657.6 349.0 L657.0 349.4 L656.4 345.5 L655.8 345.6 L655.2 349.3 L654.6 349.8 L654.0 349.9 L653.4 349.3 L652.8 349.8 L652.2 349.3 L651.6 345.2 L651.0 345.3 L650.4 348.9 L649.8 349.1 L649.2 349.1 L648.6 349.1 L648.0 349.5 L647.4 350.1 L646.8 345.2 L646.2 345.2 L645.6 349.3 L645.0 348.4 L644.4 349.4 L643.8 348.9 L643.2 349.9 L642.6 348.7 L642.0 345.2 L641.4 345.4 L640.8 345.2 L640.2 349.3 L639.6 350.1 L639.0 349.6 L638.4 350.0 L637.8 349.1 L637.2 349.7 L636.6 345.5 L636.0 345.2 L635.4 349.0 L634.8 349.0 L634.2 348.9 L633.6 348.8 L633.0 349.1 L632.4 348.5 L631.8 345.2 L631.2 345.5 L630.6 348.9 L630.0 349.6 L629.4 349.0 L628.8 349.7 L628.2 348.7 L627.6 349.5 L627.0 345.4 L626.4 345.1 L625.8 349.2 L625.2 349.3 L624.6 349.4 L624.0 349.6 L623.4 349.5 L622.8 349.5 L622.2 345.4 L621.6 345.2 L621.0 349.5 L620.4 349.8 L619.8 348.5 L619.2 348.8 L618.6 348.8 L618.0 349.4 L617.4 345.4 L616.8 345.3 L616.2 349.6 L615.6 349.6 L615.0 349.5 L614.4 349.6 L613.8 348.9 L613.2 350.0 L612.6 345.4 L612.0 345.6 L611.4 345.4 L610.8 349.8 L610.2 349.9 L609.6 349.6 L609.0 349.3 L608.4 348.9 L607.8 345.1 L607.2 345.4 L606.6 345.5 L606.0 349.7 L605.4 349.2 L604.8 348.6 L604.2 348.5 L603.6 348.7 L603.0 349.4 L602.4 345.6 L601.8 345.2 L601.2 350.1 L600.6 349.3 L600.0 348.7 L599.4 348.6 L598.8 349.7 L598.2 348.9 L597.6 345.4 L597.0 345.6 L596.4 349.5 L595.8 349.3 L595.2 349.2 L594.6 348.6 L594.0 348.6 L593.4 349.8 L592.8 345.5 L592.2 345.4 L591.6 348.7 L591.0 349.6 L590.4 349.4 L589.8 350.1 L589.2 348.7 L588.6 349.1 L588.0 345.6 L587.4 345.4 L586.8 349.9 L586.2 350.0 L585.6 349.8 L585.0 349.0 L584.4 349.1 L583.8 349.0 L583.2 345.5 L582.6 345.1 L582.0 345.2 L581.4 349.6 L580.8 349.6 L580.2 349.2 L579.6 348.6 L579.0 348.4 L578.4 345.3 L577.8 345.6 L577.2 345.3 L576.6 349.3 L576.0 349.5 L575.4 349.3 L574.8 348.3 L574.2 349.6 L573.6 349.1 L573.0 345.2 L572.4 345.6 L571.8 348.5 L571.2 349.3 L570.6 349.0 L570.0 348.9 L569.4 348.5 L568.8 349.4 L568.2 345.7 L567.6 345.5 L567.0 348.9 L566.4 349.1 L565.8 348.7 L565.2 348.8 L564.6 349.3 L564.0 349.0 L563.4 345.2 L562.8 345.3 L562.2 349.9 L561.6 348.5 L561.0 349.1 L560.4 349.8 L559.8 348.5 L559.2 349.7 L558.6 345.3 L558.0 345.2 L557.4 348.7 L556.8 350.0 L556.2 348.9 L555.6 349.3 L555.0 349.6 L554.4 348.4 L553.8 345.2 L553.2 345.1 L552.6 345.5 L552.0 350.2 L551.4 349.7 L550.8 348.7 L550.2 349.4 L549.6 346.6 L549.0 342.6Z M700.0 342.4 L700.6 340.7 L701.2 338.9 L701.8 336.9 L702.4 337.3 L703.0 336.4 L703.6 337.4 L704.3 336.5 L704.9 336.9 L705.5 336.8 L706.1 337.5 L706.7 337.0 L707.3 337.1 L707.9 337.7 L708.5 337.4 L709.1 337.7 L709.7 337.6 L710.3 338.0 L710.9 337.8 L711.5 337.8 L712.2 337.8 L712.8 338.2 L713.4 338.2 L714.0 338.6 L714.6 338.9 L715.2 338.3 L715.8 339.1 L716.4 339.0 L717.0 338.7 L717.6 339.3 L718.2 339.1 L718.8 339.6 L719.5 339.5 L720.1 339.3 L720.7 340.0 L721.3 340.0 L721.9 339.8 L722.5 340.2 L723.1 340.3 L723.7 340.2 L724.3 340.5 L724.9 340.6 L725.5 340.6 L726.1 341.0 L726.7 340.9 L727.4 341.3 L728.0 341.3 L728.6 341.6 L729.2 341.8 L729.8 341.9 L730.4 342.3 L731.0 342.4 L731.0 342.9 L730.4 343.0 L729.8 343.4 L729.2 343.5 L728.6 343.7 L728.0 344.1 L727.4 343.8 L726.7 344.4 L726.1 344.3 L725.5 344.8 L724.9 344.5 L724.3 345.0 L723.7 345.0 L723.1 344.8 L722.5 344.9 L721.9 345.5 L721.3 345.1 L720.7 345.1 L720.1 345.6 L719.5 345.8 L718.8 345.4 L718.2 346.3 L717.6 345.7 L717.0 346.3 L716.4 346.1 L715.8 346.0 L715.2 346.9 L714.6 346.5 L714.0 346.6 L713.4 347.4 L712.8 347.1 L712.2 347.9 L711.5 347.8 L710.9 347.8 L710.3 347.6 L709.7 348.1 L709.1 347.8 L708.5 347.9 L707.9 348.0 L707.3 348.1 L706.7 348.3 L706.1 347.5 L705.5 348.6 L704.9 348.0 L704.3 348.3 L703.6 348.1 L703.0 348.4 L702.4 348.1 L701.8 348.7 L701.2 346.8 L700.6 344.6 L700.0 342.9Z" fill="#8a1216"/><path d="M534.4 342.64000000000004H758.2" stroke="#8a1216" stroke-width=".7" opacity=".8"/></svg><span style="transform:scaleX(1.000)">Cubase 7 - Lucky Numbe...21 - Audio - Chorus_01</span></div>
<div class="clip" style="left:302.5px;top:295.7px;width:98.3px;height:34.4px;background:#bf693f"><svg style="left:0;top:-1px" width="98.3" height="34.4" viewBox="448.7 361.7 98.3 34.4"><path d="M452.0 379.5 L452.6 377.1 L453.2 375.4 L453.8 374.0 L454.4 373.5 L455.0 373.6 L455.6 374.2 L456.2 374.1 L456.8 374.3 L457.4 374.2 L458.0 373.9 L458.6 373.3 L459.2 374.3 L459.8 373.7 L460.4 373.1 L461.0 374.2 L461.6 374.2 L462.2 373.5 L462.8 373.4 L463.4 374.1 L464.0 373.8 L464.6 373.6 L465.2 373.8 L465.8 373.4 L466.4 373.1 L467.0 373.9 L467.6 373.5 L468.2 374.6 L468.8 374.7 L469.4 374.6 L470.0 375.7 L470.6 375.8 L471.2 376.3 L471.8 376.6 L472.4 377.1 L473.0 377.5 L473.6 377.9 L474.2 378.2 L474.8 378.6 L475.4 378.9 L476.0 378.9 L476.6 378.9 L477.2 378.9 L477.8 378.9 L478.4 378.9 L479.0 378.9 L479.6 378.8 L480.2 378.9 L480.8 378.9 L481.4 378.8 L482.0 378.9 L482.6 379.0 L483.2 379.0 L483.8 379.1 L484.4 379.1 L485.0 379.1 L485.6 379.1 L486.2 379.2 L486.8 379.2 L487.4 379.2 L488.0 379.3 L488.6 379.3 L489.2 379.3 L489.8 379.4 L490.4 379.3 L491.0 379.3 L491.0 379.7 L490.4 379.6 L489.8 379.6 L489.2 379.7 L488.6 379.7 L488.0 379.7 L487.4 379.8 L486.8 379.9 L486.2 379.9 L485.6 380.0 L485.0 380.0 L484.4 380.1 L483.8 380.1 L483.2 380.3 L482.6 380.3 L482.0 380.2 L481.4 380.6 L480.8 380.3 L480.2 380.2 L479.6 380.4 L479.0 380.2 L478.4 380.5 L477.8 380.3 L477.2 380.4 L476.6 380.5 L476.0 380.5 L475.4 380.3 L474.8 380.8 L474.2 381.6 L473.6 381.8 L473.0 382.8 L472.4 383.2 L471.8 384.3 L471.2 384.4 L470.6 385.4 L470.0 385.8 L469.4 387.2 L468.8 387.2 L468.2 386.9 L467.6 389.4 L467.0 388.1 L466.4 390.0 L465.8 390.0 L465.2 387.6 L464.6 388.8 L464.0 388.3 L463.4 388.5 L462.8 388.2 L462.2 388.3 L461.6 387.6 L461.0 387.8 L460.4 390.6 L459.8 387.9 L459.2 388.5 L458.6 388.4 L458.0 388.2 L457.4 388.1 L456.8 388.3 L456.2 388.7 L455.6 387.8 L455.0 389.1 L454.4 389.3 L453.8 388.8 L453.2 385.9 L452.6 383.0 L452.0 379.5Z M497.0 379.5 L497.6 376.9 L498.2 374.6 L498.8 373.6 L499.4 373.3 L500.0 373.9 L500.6 373.4 L501.2 374.3 L501.8 373.2 L502.4 373.2 L503.0 373.7 L503.6 373.9 L504.2 373.9 L504.8 373.1 L505.4 373.6 L506.0 374.2 L506.6 373.4 L507.2 374.0 L507.8 373.9 L508.4 374.2 L509.0 373.9 L509.6 373.4 L510.2 373.1 L510.8 374.3 L511.4 373.8 L512.0 373.5 L512.6 374.0 L513.2 373.1 L513.8 373.9 L514.4 374.1 L515.0 374.1 L515.6 373.7 L516.2 374.1 L516.8 373.6 L517.4 374.0 L518.0 373.2 L518.6 374.0 L519.2 373.4 L519.8 373.5 L520.4 373.2 L521.0 373.6 L521.6 373.7 L522.2 374.1 L522.8 374.5 L523.4 374.8 L524.0 375.0 L524.6 374.8 L525.2 375.1 L525.8 376.0 L526.4 376.3 L527.0 377.5 L527.6 379.5 L527.6 379.5 L527.0 382.7 L526.4 384.4 L525.8 385.4 L525.2 386.6 L524.6 386.6 L524.0 385.9 L523.4 387.0 L522.8 386.8 L522.2 387.8 L521.6 388.4 L521.0 388.5 L520.4 389.6 L519.8 389.3 L519.2 389.0 L518.6 388.2 L518.0 390.1 L517.4 388.1 L516.8 389.5 L516.2 387.9 L515.6 389.0 L515.0 388.8 L514.4 387.9 L513.8 388.0 L513.2 388.6 L512.6 387.8 L512.0 388.7 L511.4 388.0 L510.8 387.7 L510.2 389.3 L509.6 389.5 L509.0 388.6 L508.4 387.2 L507.8 388.6 L507.2 388.0 L506.6 388.9 L506.0 388.0 L505.4 389.0 L504.8 389.9 L504.2 388.0 L503.6 387.7 L503.0 389.3 L502.4 390.3 L501.8 390.1 L501.2 388.0 L500.6 389.3 L500.0 388.1 L499.4 389.4 L498.8 389.6 L498.2 387.1 L497.6 383.9 L497.0 379.5Z" fill="#8a350c"/><path d="M448.7 379.46H547" stroke="#8a350c" stroke-width=".7" opacity=".8"/></svg><span style="transform:scaleX(1.004)">Cubase 7 ...idge2_01</span></div>
<div class="clip" style="left:302.5px;top:332.5px;width:98.3px;height:34.4px;background:#b9963d"><svg style="left:0;top:-1px" width="98.3" height="34.4" viewBox="448.7 398.5 98.3 34.4"><path d="M452.0 416.3 L452.6 415.2 L453.2 414.4 L453.8 413.5 L454.4 412.0 L455.0 412.0 L455.6 412.2 L456.2 411.7 L456.8 412.5 L457.4 412.4 L458.0 411.8 L458.6 411.7 L459.2 411.6 L459.8 412.3 L460.4 412.1 L461.0 412.0 L461.6 412.2 L462.2 412.2 L462.8 411.7 L463.4 411.6 L464.0 412.0 L464.6 412.4 L465.2 412.1 L465.8 412.3 L466.4 412.3 L467.0 412.0 L467.6 412.4 L468.2 412.3 L468.8 412.3 L469.4 412.5 L470.0 411.6 L470.6 411.8 L471.2 412.5 L471.8 411.8 L472.4 411.9 L473.0 412.1 L473.6 411.7 L474.2 412.3 L474.8 412.2 L475.4 412.4 L476.0 412.0 L476.6 412.3 L477.2 412.0 L477.8 412.2 L478.4 412.2 L479.0 412.4 L479.6 412.4 L480.2 412.5 L480.8 412.0 L481.4 412.5 L482.0 412.2 L482.6 412.5 L483.2 412.4 L483.8 412.3 L484.4 412.4 L485.0 412.2 L485.6 412.5 L486.2 412.1 L486.8 412.0 L487.4 411.9 L488.0 412.5 L488.6 411.7 L489.2 412.3 L489.8 411.7 L490.4 412.0 L491.0 412.3 L491.6 412.3 L492.2 412.5 L492.8 412.4 L493.4 412.0 L494.0 411.8 L494.6 412.1 L495.2 412.2 L495.8 412.1 L496.4 411.7 L497.0 411.7 L497.6 412.2 L498.2 412.5 L498.8 412.2 L499.4 411.7 L500.0 412.5 L500.6 412.4 L501.2 412.2 L501.8 412.0 L502.4 412.5 L503.0 411.7 L503.6 412.1 L504.2 412.2 L504.8 412.3 L505.4 411.9 L506.0 412.0 L506.6 412.1 L507.2 411.9 L507.8 411.7 L508.4 412.4 L509.0 411.8 L509.6 412.2 L510.2 412.2 L510.8 412.5 L511.4 411.8 L512.0 411.8 L512.6 411.6 L513.2 412.1 L513.8 411.7 L514.4 412.2 L515.0 412.4 L515.6 411.6 L516.2 412.3 L516.8 412.1 L517.4 412.5 L518.0 412.2 L518.6 412.3 L519.2 411.7 L519.8 411.6 L520.4 412.1 L521.0 412.3 L521.6 412.6 L522.2 413.1 L522.8 413.6 L523.4 414.0 L524.0 414.3 L524.6 414.4 L525.2 414.7 L525.8 415.2 L526.4 415.6 L527.0 415.9 L527.6 416.1 L527.6 416.4 L527.0 416.6 L526.4 417.0 L525.8 417.4 L525.2 417.9 L524.6 418.1 L524.0 418.1 L523.4 418.7 L522.8 419.0 L522.2 419.4 L521.6 419.7 L521.0 420.6 L520.4 420.3 L519.8 421.2 L519.2 420.8 L518.6 420.6 L518.0 420.7 L517.4 419.9 L516.8 420.0 L516.2 420.5 L515.6 420.9 L515.0 420.0 L514.4 420.5 L513.8 421.0 L513.2 420.5 L512.6 421.3 L512.0 421.0 L511.4 420.4 L510.8 419.7 L510.2 420.0 L509.6 420.7 L509.0 420.8 L508.4 420.2 L507.8 420.5 L507.2 420.9 L506.6 420.5 L506.0 420.9 L505.4 421.0 L504.8 420.4 L504.2 420.6 L503.6 420.4 L503.0 420.5 L502.4 419.9 L501.8 420.2 L501.2 420.7 L500.6 420.4 L500.0 420.1 L499.4 421.3 L498.8 420.3 L498.2 419.8 L497.6 420.2 L497.0 420.6 L496.4 420.5 L495.8 420.1 L495.2 420.2 L494.6 420.5 L494.0 420.5 L493.4 420.2 L492.8 420.3 L492.2 420.0 L491.6 420.1 L491.0 420.1 L490.4 420.5 L489.8 420.6 L489.2 420.4 L488.6 421.1 L488.0 420.1 L487.4 420.5 L486.8 420.5 L486.2 420.9 L485.6 419.9 L485.0 420.7 L484.4 420.1 L483.8 420.4 L483.2 420.0 L482.6 420.4 L482.0 420.0 L481.4 420.0 L480.8 420.6 L480.2 420.2 L479.6 419.9 L479.0 420.3 L478.4 420.2 L477.8 420.6 L477.2 420.7 L476.6 420.3 L476.0 420.8 L475.4 420.5 L474.8 420.6 L474.2 420.5 L473.6 421.2 L473.0 420.7 L472.4 420.3 L471.8 421.1 L471.2 419.8 L470.6 421.1 L470.0 420.8 L469.4 420.2 L468.8 420.1 L468.2 420.1 L467.6 420.2 L467.0 420.5 L466.4 420.2 L465.8 420.2 L465.2 420.2 L464.6 420.3 L464.0 420.8 L463.4 421.1 L462.8 421.1 L462.2 420.0 L461.6 420.3 L461.0 420.5 L460.4 420.7 L459.8 420.6 L459.2 421.2 L458.6 421.0 L458.0 421.1 L457.4 420.5 L456.8 419.9 L456.2 420.9 L455.6 420.3 L455.0 420.3 L454.4 420.2 L453.8 418.9 L453.2 418.1 L452.6 417.4 L452.0 416.3Z" fill="#7e600a"/><path d="M448.7 416.28000000000003H547" stroke="#7e600a" stroke-width=".7" opacity=".8"/></svg><span style="transform:scaleX(1.004)">Cubase 7 ...idge1_01</span></div>
<div class="clip" style="left:107.6px;top:369.3px;width:340.2px;height:34.4px;background:#a6b648"><svg style="left:0;top:-1px" width="340.2" height="34.4" viewBox="253.8 435.3 340.2 34.4"><path d="M257.0 453.1 L257.6 452.4 L258.2 451.4 L258.8 450.8 L259.4 450.3 L260.0 449.6 L260.6 449.8 L261.2 449.8 L261.8 449.4 L262.4 448.1 L263.0 449.2 L263.6 448.7 L264.2 448.8 L264.8 448.4 L265.4 449.2 L266.0 449.1 L266.6 449.9 L267.2 448.6 L267.8 449.9 L268.4 449.0 L269.0 449.2 L269.6 449.2 L270.2 448.2 L270.8 448.7 L271.4 448.7 L272.0 449.4 L272.6 449.6 L273.2 448.8 L273.8 449.3 L274.4 448.1 L275.0 448.2 L275.6 450.0 L276.2 449.6 L276.8 449.6 L277.4 449.7 L278.0 449.6 L278.6 449.6 L279.2 450.5 L279.8 450.6 L280.4 450.6 L281.0 451.0 L281.6 451.9 L282.2 452.0 L282.8 452.4 L283.4 452.7 L284.0 453.1 L284.0 453.1 L283.4 453.5 L282.8 453.8 L282.2 454.1 L281.6 454.2 L281.0 455.2 L280.4 455.6 L279.8 455.7 L279.2 455.6 L278.6 456.6 L278.0 456.7 L277.4 456.7 L276.8 456.7 L276.2 456.8 L275.6 456.0 L275.0 457.8 L274.4 458.2 L273.8 456.5 L273.2 457.3 L272.6 456.5 L272.0 456.8 L271.4 457.9 L270.8 457.6 L270.2 457.6 L269.6 456.8 L269.0 457.0 L268.4 457.1 L267.8 456.3 L267.2 457.2 L266.6 456.1 L266.0 456.8 L265.4 456.8 L264.8 457.9 L264.2 457.1 L263.6 457.1 L263.0 457.1 L262.4 458.0 L261.8 456.5 L261.2 456.5 L260.6 456.4 L260.0 456.8 L259.4 456.1 L258.8 455.5 L258.2 454.8 L257.6 453.8 L257.0 453.1Z M306.0 453.1 L306.6 452.2 L307.2 451.3 L307.8 450.5 L308.4 450.0 L309.0 448.2 L309.7 448.7 L310.3 449.9 L310.9 448.1 L311.5 448.2 L312.1 449.5 L312.7 448.9 L313.3 448.5 L313.9 449.5 L314.5 448.7 L315.1 448.1 L315.7 448.2 L316.3 449.3 L317.0 448.2 L317.6 448.2 L318.2 448.2 L318.8 449.2 L319.4 449.2 L320.0 449.3 L320.6 449.3 L321.2 448.4 L321.8 449.1 L322.4 449.6 L323.0 449.6 L323.7 449.0 L324.3 448.7 L324.9 449.3 L325.5 448.8 L326.1 449.4 L326.7 448.9 L327.3 449.6 L327.9 450.0 L328.5 450.5 L329.1 449.8 L329.7 450.6 L330.3 450.9 L331.0 451.6 L331.6 451.7 L332.2 452.0 L332.8 452.4 L333.4 452.8 L334.0 453.1 L334.0 453.1 L333.4 453.4 L332.8 453.8 L332.2 454.3 L331.6 454.4 L331.0 454.6 L330.3 455.3 L329.7 455.7 L329.1 456.5 L328.5 455.8 L327.9 456.0 L327.3 456.6 L326.7 457.3 L326.1 457.0 L325.5 457.5 L324.9 456.7 L324.3 457.6 L323.7 456.8 L323.0 456.3 L322.4 456.4 L321.8 456.8 L321.2 457.8 L320.6 456.7 L320.0 457.1 L319.4 457.0 L318.8 457.3 L318.2 458.1 L317.6 458.3 L317.0 457.5 L316.3 456.9 L315.7 458.3 L315.1 457.8 L314.5 457.6 L313.9 457.0 L313.3 457.7 L312.7 456.9 L312.1 456.4 L311.5 457.5 L310.9 458.4 L310.3 456.5 L309.7 457.8 L309.0 458.3 L308.4 456.0 L307.8 455.8 L307.2 454.8 L306.6 453.9 L306.0 453.1Z M355.0 453.1 L355.6 452.4 L356.2 451.8 L356.8 450.4 L357.4 449.8 L358.0 449.4 L358.7 450.1 L359.3 449.8 L359.9 449.2 L360.5 449.2 L361.1 449.0 L361.7 448.8 L362.3 449.8 L362.9 449.3 L363.5 450.1 L364.1 449.5 L364.7 449.7 L365.3 448.7 L366.0 449.4 L366.6 449.5 L367.2 449.2 L367.8 448.5 L368.4 448.4 L369.0 448.6 L369.6 448.9 L370.2 448.4 L370.8 449.6 L371.4 449.9 L372.0 449.8 L372.7 449.8 L373.3 450.2 L373.9 449.6 L374.5 449.8 L375.1 448.7 L375.7 448.6 L376.3 448.6 L376.9 450.5 L377.5 449.8 L378.1 449.8 L378.7 450.3 L379.3 451.0 L380.0 451.6 L380.6 451.9 L381.2 452.3 L381.8 452.3 L382.4 452.7 L383.0 453.1 L383.0 453.1 L382.4 453.5 L381.8 453.9 L381.2 453.8 L380.6 454.3 L380.0 454.6 L379.3 455.0 L378.7 455.8 L378.1 456.6 L377.5 456.5 L376.9 455.9 L376.3 457.5 L375.7 457.5 L375.1 457.8 L374.5 456.7 L373.9 456.9 L373.3 456.1 L372.7 456.2 L372.0 456.5 L371.4 456.6 L370.8 456.4 L370.2 457.8 L369.6 457.7 L369.0 457.6 L368.4 457.8 L367.8 457.7 L367.2 457.2 L366.6 456.5 L366.0 456.5 L365.3 457.6 L364.7 456.5 L364.1 457.0 L363.5 456.2 L362.9 456.9 L362.3 456.7 L361.7 457.1 L361.1 457.5 L360.5 456.7 L359.9 457.2 L359.3 456.5 L358.7 456.3 L358.0 457.0 L357.4 456.1 L356.8 455.7 L356.2 454.5 L355.6 453.9 L355.0 453.1Z M405.4 453.1 L406.0 452.2 L406.6 451.2 L407.2 450.5 L407.8 449.4 L408.4 449.5 L409.1 448.8 L409.7 448.8 L410.3 448.9 L410.9 450.1 L411.5 448.6 L412.1 449.9 L412.7 448.4 L413.3 449.2 L413.9 450.0 L414.5 450.2 L415.1 448.5 L415.7 448.7 L416.4 450.2 L417.0 448.6 L417.6 449.4 L418.2 449.0 L418.8 450.1 L419.4 448.7 L420.0 448.4 L420.6 449.4 L421.2 448.7 L421.8 449.3 L422.4 450.1 L423.0 449.9 L423.7 449.6 L424.3 449.4 L424.9 449.5 L425.5 448.3 L426.1 450.1 L426.7 448.3 L427.3 449.6 L427.9 449.9 L428.5 450.0 L429.1 450.7 L429.7 450.6 L430.3 450.7 L431.0 451.0 L431.6 451.5 L432.2 451.9 L432.8 452.3 L433.4 452.8 L434.0 453.1 L434.0 453.1 L433.4 453.4 L432.8 453.9 L432.2 454.3 L431.6 454.7 L431.0 455.0 L430.3 455.7 L429.7 455.6 L429.1 455.7 L428.5 456.1 L427.9 456.0 L427.3 456.5 L426.7 458.1 L426.1 455.8 L425.5 457.4 L424.9 457.0 L424.3 456.8 L423.7 456.9 L423.0 456.5 L422.4 456.2 L421.8 456.8 L421.2 457.5 L420.6 457.1 L420.0 458.1 L419.4 457.3 L418.8 456.2 L418.2 456.9 L417.6 456.9 L417.0 457.2 L416.4 456.0 L415.7 457.6 L415.1 457.5 L414.5 455.8 L413.9 455.9 L413.3 456.7 L412.7 457.3 L412.1 456.0 L411.5 457.7 L410.9 456.0 L410.3 457.0 L409.7 457.7 L409.1 457.2 L408.4 456.6 L407.8 456.8 L407.2 455.7 L406.6 455.2 L406.0 454.0 L405.4 453.1Z M459.0 453.1 L459.6 452.3 L460.2 451.2 L460.8 450.6 L461.4 449.4 L462.0 448.1 L462.6 448.9 L463.2 449.0 L463.8 449.2 L464.4 447.6 L465.1 448.4 L465.7 447.7 L466.3 448.5 L466.9 449.2 L467.5 448.3 L468.1 447.5 L468.7 448.8 L469.3 447.9 L469.9 448.5 L470.5 447.9 L471.1 448.7 L471.7 449.0 L472.3 448.5 L472.9 449.1 L473.5 448.0 L474.1 447.6 L474.7 449.3 L475.3 448.0 L475.9 449.3 L476.5 448.2 L477.2 449.6 L477.8 450.3 L478.4 450.3 L479.0 450.8 L479.6 450.8 L480.2 451.7 L480.8 451.6 L481.4 452.3 L482.0 452.8 L482.6 453.1 L482.6 453.1 L482.0 453.4 L481.4 453.9 L480.8 454.5 L480.2 454.5 L479.6 455.4 L479.0 455.3 L478.4 455.8 L477.8 456.0 L477.2 456.3 L476.5 458.1 L475.9 456.9 L475.3 458.3 L474.7 456.6 L474.1 458.1 L473.5 458.3 L472.9 457.4 L472.3 457.3 L471.7 457.6 L471.1 457.6 L470.5 458.0 L469.9 457.9 L469.3 458.2 L468.7 457.6 L468.1 458.5 L467.5 458.2 L466.9 456.9 L466.3 457.3 L465.7 458.1 L465.1 457.6 L464.4 458.3 L463.8 456.7 L463.2 457.3 L462.6 457.5 L462.0 458.5 L461.4 457.0 L460.8 455.6 L460.2 455.2 L459.6 453.9 L459.0 453.1Z M485.0 453.1 L485.6 452.3 L486.2 451.2 L486.8 450.0 L487.4 448.8 L488.0 449.5 L488.6 449.5 L489.2 447.3 L489.8 449.3 L490.4 447.8 L491.0 449.4 L491.6 448.7 L492.2 448.4 L492.8 449.4 L493.4 449.0 L494.0 448.2 L494.6 448.6 L495.2 449.5 L495.8 447.8 L496.4 448.3 L497.0 447.3 L497.6 449.1 L498.2 447.9 L498.8 449.8 L499.4 450.0 L500.0 449.6 L500.6 449.7 L501.2 450.4 L501.8 450.7 L502.4 451.2 L503.0 452.0 L503.6 452.4 L504.2 452.6 L504.8 453.1 L504.8 453.1 L504.2 453.5 L503.6 453.8 L503.0 454.3 L502.4 454.8 L501.8 455.7 L501.2 455.8 L500.6 456.3 L500.0 456.3 L499.4 456.0 L498.8 456.3 L498.2 458.0 L497.6 456.8 L497.0 458.6 L496.4 457.5 L495.8 457.9 L495.2 456.5 L494.6 457.9 L494.0 458.2 L493.4 457.4 L492.8 457.2 L492.2 458.0 L491.6 457.7 L491.0 456.8 L490.4 458.9 L489.8 456.8 L489.2 458.8 L488.6 456.4 L488.0 456.4 L487.4 457.6 L486.8 456.0 L486.2 455.0 L485.6 453.8 L485.0 453.1Z M507.0 453.1 L507.6 452.4 L508.2 451.4 L508.8 450.3 L509.4 450.0 L510.1 448.4 L510.7 450.2 L511.3 449.3 L511.9 448.3 L512.5 449.5 L513.1 449.8 L513.7 449.4 L514.3 449.0 L514.9 448.7 L515.6 449.6 L516.2 449.8 L516.8 449.2 L517.4 449.2 L518.0 449.3 L518.6 450.1 L519.2 449.1 L519.8 450.0 L520.4 449.6 L521.1 448.3 L521.7 448.9 L522.3 449.7 L522.9 449.8 L523.5 450.6 L524.1 450.2 L524.7 451.2 L525.3 450.6 L525.9 451.3 L526.6 451.9 L527.2 452.2 L527.8 452.4 L528.4 452.7 L529.0 453.1 L529.0 453.1 L528.4 453.5 L527.8 453.8 L527.2 454.0 L526.6 454.3 L525.9 455.0 L525.3 455.7 L524.7 454.9 L524.1 455.9 L523.5 455.7 L522.9 456.6 L522.3 456.8 L521.7 457.1 L521.1 458.0 L520.4 456.6 L519.8 456.0 L519.2 457.0 L518.6 456.3 L518.0 456.5 L517.4 457.3 L516.8 456.9 L516.2 456.4 L515.6 456.9 L514.9 457.2 L514.3 457.3 L513.7 456.8 L513.1 456.5 L512.5 456.5 L511.9 458.0 L511.3 457.0 L510.7 456.2 L510.1 457.4 L509.4 456.4 L508.8 456.1 L508.2 454.7 L507.6 453.8 L507.0 453.1Z M530.5 453.1 L531.1 452.4 L531.7 451.5 L532.3 450.0 L532.9 449.1 L533.5 448.6 L534.2 448.2 L534.8 447.9 L535.4 448.1 L536.0 447.9 L536.6 447.7 L537.2 449.0 L537.8 449.0 L538.4 448.1 L539.0 449.6 L539.6 449.3 L540.3 448.3 L540.9 448.9 L541.5 448.4 L542.1 449.7 L542.7 448.0 L543.3 448.7 L543.9 448.4 L544.5 449.4 L545.1 449.6 L545.8 448.2 L546.4 449.4 L547.0 449.3 L547.6 449.3 L548.2 448.1 L548.8 449.6 L549.4 449.5 L550.0 447.8 L550.6 448.2 L551.2 448.9 L551.9 447.7 L552.5 448.0 L553.1 448.7 L553.7 447.9 L554.3 449.0 L554.9 448.4 L555.5 449.2 L556.1 450.3 L556.7 450.7 L557.3 450.6 L558.0 451.4 L558.6 451.6 L559.2 452.0 L559.8 452.2 L560.4 452.6 L561.0 453.1 L561.0 453.1 L560.4 453.6 L559.8 453.9 L559.2 454.1 L558.6 454.5 L558.0 454.7 L557.3 455.7 L556.7 455.7 L556.1 456.1 L555.5 456.9 L554.9 457.4 L554.3 457.4 L553.7 458.7 L553.1 457.5 L552.5 458.7 L551.9 458.2 L551.2 457.0 L550.6 458.3 L550.0 458.2 L549.4 457.0 L548.8 456.7 L548.2 457.8 L547.6 456.8 L547.0 456.8 L546.4 456.6 L545.8 458.0 L545.1 456.9 L544.5 456.8 L543.9 457.7 L543.3 457.5 L542.7 457.7 L542.1 456.3 L541.5 458.2 L540.9 457.3 L540.3 457.5 L539.6 456.9 L539.0 456.3 L538.4 458.3 L537.8 456.9 L537.2 456.9 L536.6 458.8 L536.0 457.9 L535.4 458.2 L534.8 458.1 L534.2 458.5 L533.5 457.4 L532.9 456.9 L532.3 456.4 L531.7 454.7 L531.1 453.9 L530.5 453.1Z M565.5 453.1 L566.1 452.4 L566.7 451.5 L567.3 450.7 L567.9 450.6 L568.5 448.9 L569.1 449.7 L569.8 449.9 L570.4 450.1 L571.0 448.8 L571.6 450.2 L572.2 449.9 L572.8 449.9 L573.4 450.4 L574.0 450.1 L574.6 449.7 L575.2 450.3 L575.8 450.1 L576.4 448.8 L577.0 450.3 L577.6 449.6 L578.2 449.4 L578.9 450.1 L579.5 450.1 L580.1 449.5 L580.7 450.0 L581.3 449.3 L581.9 450.5 L582.5 450.2 L583.1 448.9 L583.7 448.7 L584.3 449.1 L584.9 450.1 L585.5 450.5 L586.1 450.4 L586.8 450.7 L587.4 451.3 L588.0 451.4 L588.6 452.2 L589.2 452.4 L589.8 452.5 L590.4 452.8 L591.0 453.1 L591.0 453.1 L590.4 453.3 L589.8 453.6 L589.2 453.8 L588.6 454.1 L588.0 455.0 L587.4 455.0 L586.8 455.7 L586.1 455.7 L585.5 456.0 L584.9 456.2 L584.3 457.3 L583.7 457.3 L583.1 456.9 L582.5 456.1 L581.9 455.6 L581.3 457.1 L580.7 456.3 L580.1 456.9 L579.5 456.0 L578.9 456.2 L578.2 456.9 L577.6 456.9 L577.0 455.6 L576.4 457.0 L575.8 455.9 L575.2 455.9 L574.6 456.6 L574.0 456.2 L573.4 455.9 L572.8 456.6 L572.2 456.5 L571.6 455.9 L571.0 457.8 L570.4 456.1 L569.8 456.3 L569.1 456.7 L568.5 457.7 L567.9 455.4 L567.3 455.6 L566.7 454.6 L566.1 453.8 L565.5 453.1Z" fill="#6f810c"/><path d="M253.8 453.09999999999997H594" stroke="#6f810c" stroke-width=".7" opacity=".8"/></svg><span style="transform:scaleX(0.964)">Lead</span></div>
<div class="clip" style="left:464.6px;top:369.3px;width:126.2px;height:34.4px;background:#a6b648"><svg style="left:0;top:-1px" width="126.2" height="34.4" viewBox="610.8 435.3 126.2 34.4"><path d="M616.0 453.1 L616.6 452.0 L617.2 451.2 L617.8 450.8 L618.4 450.0 L619.0 448.0 L619.6 449.4 L620.2 449.4 L620.8 449.7 L621.5 448.6 L622.1 449.0 L622.7 448.8 L623.3 449.6 L623.9 448.4 L624.5 448.8 L625.1 449.6 L625.7 448.0 L626.3 448.8 L626.9 449.1 L627.5 448.1 L628.1 449.1 L628.7 447.9 L629.3 449.8 L629.9 448.7 L630.5 450.1 L631.2 449.4 L631.8 450.5 L632.4 451.3 L633.0 451.3 L633.6 451.5 L634.2 452.3 L634.8 452.4 L635.4 452.7 L636.0 453.1 L636.0 453.1 L635.4 453.5 L634.8 453.8 L634.2 453.9 L633.6 454.7 L633.0 455.0 L632.4 455.0 L631.8 455.9 L631.2 456.5 L630.5 455.8 L629.9 457.9 L629.3 456.4 L628.7 458.6 L628.1 457.0 L627.5 457.9 L626.9 456.9 L626.3 457.1 L625.7 458.2 L625.1 456.3 L624.5 457.7 L623.9 458.0 L623.3 456.4 L622.7 457.8 L622.1 457.5 L621.5 458.0 L620.8 456.6 L620.2 456.8 L619.6 457.1 L619.0 458.6 L618.4 456.1 L617.8 455.3 L617.2 455.1 L616.6 454.1 L616.0 453.1Z M641.0 453.1 L641.6 452.3 L642.2 451.8 L642.8 450.9 L643.5 450.1 L644.1 448.7 L644.7 449.8 L645.3 449.9 L645.9 449.4 L646.5 449.9 L647.1 449.0 L647.7 449.3 L648.4 448.5 L649.0 448.4 L649.6 449.0 L650.2 449.6 L650.8 449.9 L651.4 449.8 L652.0 449.4 L652.6 448.8 L653.3 450.0 L653.9 450.4 L654.5 449.5 L655.1 450.7 L655.7 450.4 L656.3 451.3 L656.9 451.7 L657.5 451.4 L658.2 452.0 L658.8 452.4 L659.4 452.8 L660.0 453.1 L660.0 453.1 L659.4 453.5 L658.8 453.8 L658.2 454.1 L657.5 454.7 L656.9 454.4 L656.3 454.8 L655.7 455.8 L655.1 455.6 L654.5 456.4 L653.9 456.1 L653.3 456.1 L652.6 457.3 L652.0 457.0 L651.4 456.6 L650.8 456.4 L650.2 456.6 L649.6 457.4 L649.0 457.9 L648.4 457.4 L647.7 457.1 L647.1 457.2 L646.5 456.2 L645.9 457.1 L645.3 456.5 L644.7 456.7 L644.1 457.4 L643.5 456.0 L642.8 455.5 L642.2 454.4 L641.6 453.8 L641.0 453.1Z M664.0 453.1 L664.6 452.4 L665.2 451.8 L665.8 451.1 L666.4 450.0 L667.0 449.3 L667.6 449.8 L668.2 449.6 L668.8 450.2 L669.4 449.5 L670.1 450.0 L670.7 450.3 L671.3 450.4 L671.9 450.1 L672.5 450.3 L673.1 450.3 L673.7 449.5 L674.3 449.9 L674.9 449.4 L675.5 449.9 L676.1 449.3 L676.7 448.9 L677.3 450.4 L677.9 449.4 L678.5 450.5 L679.1 450.1 L679.7 449.8 L680.3 449.4 L680.9 450.2 L681.6 450.4 L682.2 450.4 L682.8 450.7 L683.4 451.6 L684.0 451.6 L684.6 452.0 L685.2 452.0 L685.8 452.4 L686.4 452.8 L687.0 453.1 L687.0 453.1 L686.4 453.4 L685.8 453.8 L685.2 454.1 L684.6 454.1 L684.0 454.6 L683.4 454.6 L682.8 455.2 L682.2 455.9 L681.6 455.8 L680.9 456.1 L680.3 457.1 L679.7 456.2 L679.1 455.9 L678.5 455.8 L677.9 456.6 L677.3 455.6 L676.7 457.2 L676.1 456.8 L675.5 456.5 L674.9 456.8 L674.3 456.4 L673.7 456.9 L673.1 456.1 L672.5 456.0 L671.9 456.1 L671.3 456.0 L670.7 456.1 L670.1 456.4 L669.4 456.9 L668.8 456.1 L668.2 456.6 L667.6 456.4 L667.0 456.6 L666.4 456.2 L665.8 455.2 L665.2 454.3 L664.6 453.9 L664.0 453.1Z M690.0 453.1 L690.6 452.2 L691.2 451.1 L691.8 450.2 L692.4 449.3 L693.0 449.3 L693.6 449.1 L694.2 448.6 L694.8 449.4 L695.4 449.3 L696.0 448.7 L696.6 448.8 L697.2 449.0 L697.8 449.2 L698.4 448.5 L699.0 448.6 L699.6 448.8 L700.2 449.3 L700.8 449.3 L701.4 448.6 L702.0 448.6 L702.6 448.7 L703.2 449.2 L703.8 448.6 L704.4 449.0 L705.0 449.1 L705.6 448.8 L706.2 448.6 L706.8 448.7 L707.4 448.8 L708.0 448.6 L708.6 449.3 L709.2 449.2 L709.8 448.9 L710.4 449.3 L711.0 448.8 L711.6 448.8 L712.2 448.7 L712.9 448.6 L713.5 449.3 L714.1 449.3 L714.7 449.1 L715.3 448.8 L715.9 448.5 L716.5 448.9 L717.1 449.2 L717.7 449.0 L718.3 448.6 L718.9 448.6 L719.5 449.4 L720.1 448.6 L720.7 449.3 L721.3 448.5 L721.9 449.3 L722.5 449.4 L723.1 448.8 L723.7 448.8 L724.3 448.7 L724.9 448.7 L725.5 448.5 L726.1 449.0 L726.7 448.9 L727.3 449.0 L727.9 448.5 L728.5 449.2 L729.1 449.3 L729.7 449.9 L730.3 450.4 L730.9 450.5 L731.5 451.2 L732.1 451.6 L732.7 451.9 L733.3 452.3 L733.9 452.7 L734.5 452.9 L734.5 453.3 L733.9 453.5 L733.3 453.9 L732.7 454.3 L732.1 454.5 L731.5 454.8 L730.9 455.7 L730.3 455.7 L729.7 456.2 L729.1 456.6 L728.5 457.3 L727.9 457.8 L727.3 457.2 L726.7 457.4 L726.1 457.1 L725.5 458.1 L724.9 457.2 L724.3 457.6 L723.7 457.0 L723.1 457.3 L722.5 457.0 L721.9 456.7 L721.3 457.4 L720.7 456.6 L720.1 457.4 L719.5 456.7 L718.9 457.4 L718.3 457.7 L717.7 457.2 L717.1 457.1 L716.5 457.0 L715.9 457.8 L715.3 457.4 L714.7 457.2 L714.1 457.2 L713.5 456.7 L712.9 457.5 L712.2 458.0 L711.6 457.5 L711.0 457.1 L710.4 456.9 L709.8 457.3 L709.2 456.7 L708.6 456.8 L708.0 458.0 L707.4 457.1 L706.8 457.7 L706.2 457.8 L705.6 457.3 L705.0 457.3 L704.4 457.4 L703.8 457.4 L703.2 456.8 L702.6 457.2 L702.0 457.8 L701.4 457.4 L700.8 457.3 L700.2 457.1 L699.6 457.4 L699.0 457.9 L698.4 458.1 L697.8 457.2 L697.2 457.2 L696.6 457.6 L696.0 457.5 L695.4 457.0 L694.8 456.8 L694.2 458.0 L693.6 457.5 L693.0 456.6 L692.4 457.2 L691.8 455.8 L691.2 455.3 L690.6 454.0 L690.0 453.1Z" fill="#6f810c"/><path d="M610.8 453.09999999999997H737" stroke="#6f810c" stroke-width=".7" opacity=".8"/></svg><span style="transform:scaleX(0.964)">Lead</span></div>
<div class="clip" style="left:373.0px;top:406.1px;width:74.8px;height:34.4px;background:#79b947"><svg style="left:0;top:-1px" width="74.8" height="34.4" viewBox="519.2 472.1 74.8 34.4"><path d="M530.0 489.2 L530.6 489.2 L531.2 489.2 L531.8 489.3 L532.4 489.3 L533.0 489.3 L533.6 489.1 L534.2 489.2 L534.8 489.3 L535.4 489.3 L536.0 489.0 L536.6 489.0 L537.2 489.2 L537.8 489.3 L538.4 489.1 L539.0 489.1 L539.6 489.2 L540.2 489.2 L540.8 489.3 L541.4 489.2 L542.0 489.2 L542.6 489.0 L543.2 489.1 L543.8 489.3 L544.4 489.2 L545.0 489.1 L545.6 489.3 L546.2 489.3 L546.8 489.0 L547.4 489.2 L548.0 489.1 L548.6 489.4 L549.2 489.0 L549.8 489.3 L550.4 489.3 L551.0 489.3 L551.6 489.2 L552.2 489.1 L552.8 489.3 L553.4 489.3 L554.0 489.4 L554.6 489.2 L555.2 489.2 L555.8 489.4 L556.4 489.1 L557.0 489.1 L557.6 489.3 L558.2 489.2 L558.8 489.2 L559.4 489.3 L560.0 489.4 L560.0 490.5 L559.4 490.5 L558.8 490.7 L558.2 490.6 L557.6 490.5 L557.0 490.8 L556.4 490.7 L555.8 490.5 L555.2 490.7 L554.6 490.6 L554.0 490.5 L553.4 490.5 L552.8 490.5 L552.2 490.8 L551.6 490.6 L551.0 490.6 L550.4 490.5 L549.8 490.5 L549.2 490.8 L548.6 490.4 L548.0 490.7 L547.4 490.5 L546.8 490.7 L546.2 490.5 L545.6 490.5 L545.0 490.8 L544.4 490.7 L543.8 490.5 L543.2 490.7 L542.6 490.9 L542.0 490.6 L541.4 490.6 L540.8 490.5 L540.2 490.7 L539.6 490.7 L539.0 490.8 L538.4 490.7 L537.8 490.6 L537.2 490.6 L536.6 490.9 L536.0 490.8 L535.4 490.6 L534.8 490.5 L534.2 490.7 L533.6 490.6 L533.0 490.6 L532.4 490.6 L531.8 490.5 L531.2 490.6 L530.6 490.6 L530.0 490.6Z M566.0 489.2 L566.6 489.1 L567.2 489.1 L567.8 489.2 L568.4 489.2 L569.1 489.2 L569.7 489.3 L570.3 489.1 L570.9 489.0 L571.5 489.1 L572.1 489.3 L572.7 489.3 L573.3 489.3 L573.9 489.3 L574.6 489.3 L575.2 489.1 L575.8 489.3 L576.4 489.3 L577.0 489.1 L577.6 489.3 L578.2 489.2 L578.8 489.2 L579.4 489.4 L580.1 489.1 L580.7 489.3 L581.3 489.2 L581.9 489.0 L582.5 489.3 L583.1 489.2 L583.7 489.2 L584.3 489.1 L584.9 489.0 L585.6 489.2 L586.2 489.2 L586.8 489.2 L587.4 489.0 L588.0 489.3 L588.0 490.6 L587.4 490.8 L586.8 490.5 L586.2 490.6 L585.6 490.6 L584.9 490.8 L584.3 490.8 L583.7 490.7 L583.1 490.7 L582.5 490.6 L581.9 490.7 L581.3 490.7 L580.7 490.5 L580.1 490.7 L579.4 490.5 L578.8 490.6 L578.2 490.6 L577.6 490.5 L577.0 490.7 L576.4 490.5 L575.8 490.5 L575.2 490.7 L574.6 490.5 L573.9 490.4 L573.3 490.5 L572.7 490.6 L572.1 490.5 L571.5 490.8 L570.9 490.8 L570.3 490.7 L569.7 490.6 L569.1 490.6 L568.4 490.7 L567.8 490.7 L567.2 490.8 L566.6 490.7 L566.0 490.6Z" fill="#468612"/><path d="M519.2 489.92H594" stroke="#468612" stroke-width=".7" opacity=".8"/></svg><span style="transform:scaleX(0.995)">Cubase...gh_01</span></div>
<div class="clip" style="left:464.6px;top:406.1px;width:125.6px;height:34.4px;background:#79b947"><svg style="left:0;top:-1px" width="125.6" height="34.4" viewBox="610.8 472.1 125.6 34.4"><path d="M616.0 489.1 L616.6 489.1 L617.2 489.3 L617.8 489.1 L618.4 489.3 L619.0 489.2 L619.6 489.1 L620.2 489.1 L620.8 489.3 L621.4 489.2 L622.0 489.0 L622.6 489.3 L623.2 489.0 L623.8 489.4 L624.4 489.0 L625.0 489.1 L625.6 489.0 L626.2 489.3 L626.8 489.2 L627.4 489.3 L628.0 489.3 L628.6 489.2 L629.2 489.1 L629.8 489.3 L630.4 489.3 L631.0 489.1 L631.6 489.1 L632.2 489.0 L632.8 489.3 L633.4 489.3 L634.0 489.2 L634.0 490.7 L633.4 490.5 L632.8 490.5 L632.2 490.8 L631.6 490.7 L631.0 490.7 L630.4 490.5 L629.8 490.6 L629.2 490.7 L628.6 490.6 L628.0 490.6 L627.4 490.5 L626.8 490.7 L626.2 490.6 L625.6 490.8 L625.0 490.7 L624.4 490.8 L623.8 490.5 L623.2 490.7 L622.6 490.5 L622.0 490.8 L621.4 490.7 L620.8 490.5 L620.2 490.7 L619.6 490.8 L619.0 490.7 L618.4 490.6 L617.8 490.7 L617.2 490.4 L616.6 490.8 L616.0 490.8Z M642.0 489.1 L642.6 489.3 L643.2 489.1 L643.8 489.3 L644.4 489.2 L645.0 489.3 L645.6 489.2 L646.2 489.2 L646.8 489.1 L647.4 489.3 L648.0 489.1 L648.6 489.1 L649.2 489.0 L649.8 489.2 L650.4 489.3 L651.0 489.2 L651.6 489.2 L652.2 489.2 L652.8 489.2 L653.4 489.3 L654.0 489.2 L654.6 489.3 L655.2 489.4 L655.8 489.2 L656.4 489.1 L657.0 489.2 L657.0 490.7 L656.4 490.8 L655.8 490.8 L655.2 490.5 L654.6 490.6 L654.0 490.7 L653.4 490.6 L652.8 490.6 L652.2 490.6 L651.6 490.7 L651.0 490.7 L650.4 490.6 L649.8 490.7 L649.2 490.8 L648.6 490.8 L648.0 490.7 L647.4 490.5 L646.8 490.7 L646.2 490.6 L645.6 490.6 L645.0 490.6 L644.4 490.6 L643.8 490.5 L643.2 490.7 L642.6 490.5 L642.0 490.7Z M665.0 489.1 L665.6 489.2 L666.2 489.3 L666.8 489.3 L667.4 489.0 L668.0 489.1 L668.6 489.1 L669.2 489.3 L669.8 489.2 L670.4 489.3 L671.0 489.1 L671.6 489.2 L672.2 489.1 L672.8 489.2 L673.4 489.2 L674.0 489.2 L674.6 489.3 L675.2 489.0 L675.8 489.3 L676.4 489.2 L677.0 489.1 L677.6 489.3 L678.2 489.4 L678.8 489.2 L679.4 489.3 L680.0 489.3 L680.6 489.0 L681.2 489.1 L681.8 489.3 L682.4 489.1 L683.0 489.1 L683.6 489.1 L684.2 489.3 L684.8 489.1 L685.4 489.4 L686.0 489.1 L686.0 490.7 L685.4 490.5 L684.8 490.7 L684.2 490.5 L683.6 490.8 L683.0 490.7 L682.4 490.8 L681.8 490.5 L681.2 490.8 L680.6 490.9 L680.0 490.6 L679.4 490.6 L678.8 490.7 L678.2 490.4 L677.6 490.5 L677.0 490.8 L676.4 490.6 L675.8 490.5 L675.2 490.8 L674.6 490.6 L674.0 490.6 L673.4 490.7 L672.8 490.6 L672.2 490.7 L671.6 490.6 L671.0 490.7 L670.4 490.5 L669.8 490.6 L669.2 490.5 L668.6 490.7 L668.0 490.7 L667.4 490.8 L666.8 490.6 L666.2 490.5 L665.6 490.6 L665.0 490.7Z M690.0 489.3 L690.6 489.0 L691.2 489.3 L691.8 489.0 L692.4 489.2 L693.0 489.1 L693.7 489.2 L694.3 489.3 L694.9 489.3 L695.5 489.1 L696.1 489.0 L696.7 489.2 L697.3 489.0 L697.9 489.3 L698.5 489.3 L699.1 489.3 L699.7 489.3 L700.3 489.3 L701.0 489.2 L701.6 489.2 L702.2 489.1 L702.8 489.1 L703.4 489.3 L704.0 489.3 L704.6 489.0 L705.2 489.3 L705.8 489.2 L706.4 489.4 L707.0 489.1 L707.7 489.1 L708.3 489.3 L708.9 489.3 L709.5 489.1 L710.1 489.4 L710.7 489.2 L711.3 489.3 L711.9 489.1 L712.5 489.3 L713.1 489.2 L713.7 489.4 L714.3 489.3 L715.0 489.3 L715.6 489.3 L716.2 489.4 L716.8 489.1 L717.4 489.2 L718.0 489.1 L718.0 490.8 L717.4 490.6 L716.8 490.7 L716.2 490.5 L715.6 490.5 L715.0 490.5 L714.3 490.6 L713.7 490.5 L713.1 490.7 L712.5 490.6 L711.9 490.7 L711.3 490.6 L710.7 490.7 L710.1 490.4 L709.5 490.7 L708.9 490.5 L708.3 490.6 L707.7 490.7 L707.0 490.7 L706.4 490.5 L705.8 490.6 L705.2 490.5 L704.6 490.7 L704.0 490.6 L703.4 490.5 L702.8 490.9 L702.2 490.7 L701.6 490.7 L701.0 490.7 L700.3 490.6 L699.7 490.6 L699.1 490.5 L698.5 490.5 L697.9 490.5 L697.3 490.8 L696.7 490.6 L696.1 490.9 L695.5 490.8 L694.9 490.5 L694.3 490.6 L693.7 490.6 L693.0 490.8 L692.4 490.6 L691.8 490.8 L691.2 490.5 L690.6 490.8 L690.0 490.5Z" fill="#468612"/><path d="M610.8 489.92H736.4" stroke="#468612" stroke-width=".7" opacity=".8"/></svg><span style="transform:scaleX(0.995)">Cubase 7 - Lu...Voc high_01</span></div>
<div class="clip" style="left:147.8px;top:442.9px;width:300.0px;height:34.4px;background:#48ab48"><svg style="left:0;top:-1px" width="300.0" height="34.4" viewBox="294 508.9 300.0 34.4"><path d="M304.0 526.7 L304.6 526.0 L305.2 525.4 L305.8 524.4 L306.4 523.5 L307.0 523.7 L307.6 523.1 L308.2 522.6 L308.8 523.6 L309.4 523.7 L310.0 523.1 L310.6 523.0 L311.2 523.3 L311.8 522.9 L312.4 523.7 L313.0 523.4 L313.6 522.9 L314.2 523.5 L314.8 523.1 L315.4 523.8 L316.0 523.1 L316.6 523.0 L317.2 522.9 L317.8 523.9 L318.4 523.3 L319.0 523.4 L319.6 522.9 L320.2 522.6 L320.8 522.3 L321.4 523.1 L322.0 522.8 L322.6 523.2 L323.2 523.9 L323.8 523.4 L324.4 523.3 L325.0 522.5 L325.6 522.7 L326.2 523.6 L326.8 522.5 L327.4 522.6 L328.0 524.1 L328.6 523.8 L329.2 524.6 L329.8 524.8 L330.4 524.7 L331.0 525.2 L331.6 525.8 L332.2 526.0 L332.8 526.2 L333.4 526.4 L334.0 526.7 L334.0 526.7 L333.4 527.1 L332.8 527.2 L332.2 527.4 L331.6 527.7 L331.0 528.3 L330.4 528.7 L329.8 528.7 L329.2 529.0 L328.6 529.9 L328.0 529.2 L327.4 530.9 L326.8 531.2 L326.2 529.6 L325.6 531.1 L325.0 530.7 L324.4 530.2 L323.8 530.1 L323.2 529.7 L322.6 530.3 L322.0 530.8 L321.4 530.1 L320.8 531.2 L320.2 530.7 L319.6 530.3 L319.0 530.0 L318.4 530.4 L317.8 529.7 L317.2 530.6 L316.6 530.7 L316.0 530.1 L315.4 529.4 L314.8 530.0 L314.2 530.2 L313.6 530.7 L313.0 530.1 L312.4 529.9 L311.8 530.7 L311.2 530.5 L310.6 530.3 L310.0 530.4 L309.4 529.9 L308.8 529.6 L308.2 531.2 L307.6 530.2 L307.0 529.6 L306.4 530.2 L305.8 529.0 L305.2 528.1 L304.6 527.4 L304.0 526.7Z M405.0 526.7 L405.6 526.2 L406.2 525.1 L406.8 524.2 L407.4 524.0 L408.0 522.7 L408.6 523.1 L409.2 523.1 L409.8 522.5 L410.4 523.0 L411.0 523.7 L411.6 523.1 L412.2 523.0 L412.9 523.5 L413.5 523.8 L414.1 523.8 L414.7 523.2 L415.3 523.2 L415.9 523.7 L416.5 523.1 L417.1 523.9 L417.7 522.6 L418.3 522.8 L418.9 523.3 L419.5 523.1 L420.1 522.9 L420.7 523.7 L421.3 523.7 L421.9 523.3 L422.5 524.2 L423.1 522.7 L423.7 524.1 L424.3 522.6 L424.9 522.8 L425.5 523.5 L426.1 523.9 L426.8 524.0 L427.4 523.4 L428.0 523.4 L428.6 523.9 L429.2 524.2 L429.8 524.4 L430.4 525.2 L431.0 525.3 L431.6 525.6 L432.2 525.8 L432.8 526.2 L433.4 526.5 L434.0 526.7 L434.0 526.7 L433.4 527.0 L432.8 527.2 L432.2 527.8 L431.6 527.8 L431.0 528.1 L430.4 528.4 L429.8 529.3 L429.2 529.2 L428.6 529.7 L428.0 530.3 L427.4 529.8 L426.8 529.7 L426.1 529.5 L425.5 529.8 L424.9 530.5 L424.3 530.9 L423.7 529.7 L423.1 531.2 L422.5 529.4 L421.9 530.4 L421.3 530.1 L420.7 529.6 L420.1 530.4 L419.5 530.4 L418.9 530.0 L418.3 530.9 L417.7 530.7 L417.1 529.4 L416.5 530.6 L415.9 530.0 L415.3 530.1 L414.7 530.5 L414.1 529.5 L413.5 529.5 L412.9 530.2 L412.2 530.4 L411.6 530.0 L411.0 529.6 L410.4 530.7 L409.8 530.5 L409.2 530.7 L408.6 530.4 L408.0 531.0 L407.4 529.6 L406.8 529.0 L406.2 528.5 L405.6 527.3 L405.0 526.7Z M463.0 526.7 L463.6 526.1 L464.2 525.4 L464.8 524.9 L465.4 524.8 L466.0 523.2 L466.6 523.1 L467.2 523.1 L467.8 524.2 L468.5 523.2 L469.1 524.1 L469.7 524.1 L470.3 523.8 L470.9 523.4 L471.5 523.9 L472.1 524.2 L472.7 524.2 L473.3 523.0 L473.9 523.2 L474.5 524.0 L475.1 523.4 L475.7 523.8 L476.3 524.3 L476.9 524.7 L477.5 524.2 L478.2 524.5 L478.8 525.0 L479.4 524.9 L480.0 525.5 L480.6 525.5 L481.2 526.0 L481.8 526.3 L482.4 526.5 L483.0 526.7 L483.0 526.7 L482.4 526.9 L481.8 527.2 L481.2 527.4 L480.6 528.0 L480.0 528.0 L479.4 528.6 L478.8 528.5 L478.2 528.8 L477.5 529.1 L476.9 528.9 L476.3 529.4 L475.7 529.5 L475.1 530.0 L474.5 529.7 L473.9 530.5 L473.3 530.2 L472.7 529.4 L472.1 529.2 L471.5 529.6 L470.9 530.1 L470.3 529.9 L469.7 529.5 L469.1 529.5 L468.5 530.3 L467.8 529.6 L467.2 530.4 L466.6 530.5 L466.0 530.5 L465.4 528.8 L464.8 528.5 L464.2 528.3 L463.6 527.5 L463.0 526.7Z M486.0 526.7 L486.6 525.9 L487.2 525.2 L487.8 524.8 L488.5 523.8 L489.1 523.6 L489.7 523.0 L490.3 523.6 L490.9 523.1 L491.5 522.7 L492.1 523.4 L492.7 522.9 L493.4 522.8 L494.0 523.6 L494.6 523.9 L495.2 523.2 L495.8 523.2 L496.4 522.9 L497.0 523.3 L497.6 523.5 L498.3 523.4 L498.9 523.2 L499.5 523.5 L500.1 524.5 L500.7 524.1 L501.3 525.3 L501.9 525.1 L502.5 525.6 L503.2 525.6 L503.8 526.2 L504.4 526.4 L505.0 526.7 L505.0 526.7 L504.4 527.1 L503.8 527.3 L503.2 527.8 L502.5 527.9 L501.9 528.2 L501.3 528.2 L500.7 529.3 L500.1 529.2 L499.5 530.0 L498.9 530.2 L498.3 530.0 L497.6 529.9 L497.0 530.0 L496.4 530.4 L495.8 530.6 L495.2 530.4 L494.6 529.7 L494.0 529.9 L493.4 530.5 L492.7 530.4 L492.1 530.3 L491.5 531.0 L490.9 530.0 L490.3 529.9 L489.7 530.7 L489.1 529.6 L488.5 529.9 L487.8 528.9 L487.2 528.2 L486.6 527.7 L486.0 526.7Z M531.0 526.7 L531.6 525.9 L532.2 525.6 L532.8 524.7 L533.4 523.5 L534.0 523.0 L534.6 523.0 L535.3 522.9 L535.9 522.7 L536.5 522.4 L537.1 523.2 L537.7 523.2 L538.3 522.8 L538.9 523.6 L539.5 522.8 L540.1 523.8 L540.7 522.5 L541.3 523.5 L541.9 523.0 L542.5 524.1 L543.2 522.8 L543.8 522.5 L544.4 524.0 L545.0 522.9 L545.6 523.1 L546.2 522.6 L546.8 523.3 L547.4 523.5 L548.0 522.5 L548.6 523.2 L549.2 523.9 L549.8 523.0 L550.5 522.6 L551.1 523.3 L551.7 523.3 L552.3 523.3 L552.9 523.1 L553.5 523.8 L554.1 524.1 L554.7 523.5 L555.3 523.0 L555.9 523.7 L556.5 523.7 L557.1 523.8 L557.7 524.9 L558.4 525.1 L559.0 525.5 L559.6 525.5 L560.2 525.7 L560.8 526.2 L561.4 526.5 L562.0 526.7 L562.0 526.7 L561.4 527.0 L560.8 527.4 L560.2 527.7 L559.6 528.0 L559.0 528.1 L558.4 528.2 L557.7 528.6 L557.1 529.7 L556.5 529.5 L555.9 529.9 L555.3 530.6 L554.7 530.0 L554.1 529.6 L553.5 529.6 L552.9 530.5 L552.3 530.2 L551.7 530.4 L551.1 529.9 L550.5 531.1 L549.8 530.9 L549.2 529.4 L548.6 530.4 L548.0 531.1 L547.4 530.1 L546.8 530.1 L546.2 531.1 L545.6 530.2 L545.0 530.6 L544.4 529.7 L543.8 530.6 L543.2 531.0 L542.5 529.2 L541.9 530.8 L541.3 530.2 L540.7 530.8 L540.1 529.5 L539.5 531.0 L538.9 529.9 L538.3 530.8 L537.7 530.3 L537.1 530.4 L536.5 531.0 L535.9 530.8 L535.3 530.6 L534.6 530.2 L534.0 530.7 L533.4 530.2 L532.8 528.6 L532.2 527.9 L531.6 527.6 L531.0 526.7Z M567.0 526.7 L567.6 526.2 L568.2 525.5 L568.8 525.1 L569.4 524.5 L570.0 524.3 L570.6 524.3 L571.2 522.8 L571.8 523.5 L572.4 523.9 L573.0 522.8 L573.6 523.1 L574.2 523.8 L574.8 524.2 L575.4 524.3 L576.0 523.8 L576.6 524.0 L577.2 524.2 L577.8 523.7 L578.4 523.7 L579.0 522.8 L579.6 523.3 L580.2 524.3 L580.8 522.9 L581.4 523.3 L582.0 524.3 L582.6 524.1 L583.2 524.9 L583.8 524.5 L584.4 524.9 L585.0 525.6 L585.6 525.4 L586.2 526.0 L586.8 526.1 L587.4 526.5 L588.0 526.7 L588.0 526.7 L587.4 527.0 L586.8 527.4 L586.2 527.5 L585.6 528.2 L585.0 528.0 L584.4 528.5 L583.8 529.0 L583.2 528.8 L582.6 529.7 L582.0 529.1 L581.4 529.9 L580.8 530.7 L580.2 529.2 L579.6 530.3 L579.0 531.0 L578.4 530.0 L577.8 529.6 L577.2 529.3 L576.6 529.7 L576.0 529.4 L575.4 529.1 L574.8 529.3 L574.2 529.6 L573.6 530.3 L573.0 530.8 L572.4 529.6 L571.8 530.3 L571.2 531.0 L570.6 529.0 L570.0 529.4 L569.4 528.8 L568.8 528.3 L568.2 528.0 L567.6 527.2 L567.0 526.7Z" fill="#188020"/><path d="M294 526.74H594" stroke="#188020" stroke-width=".7" opacity=".8"/></svg><span style="transform:scaleX(1.007)">Cubase 7 - Lucky Number - 0028 - Audio - B-Voc mid_01</span></div>
<div class="clip" style="left:464.6px;top:442.9px;width:89.2px;height:34.4px;background:#48ab48"><svg style="left:0;top:-1px" width="89.2" height="34.4" viewBox="610.8 508.9 89.2 34.4"><path d="M616.0 526.7 L616.6 526.0 L617.2 525.5 L617.8 524.7 L618.4 524.0 L619.0 523.6 L619.6 523.0 L620.2 522.5 L620.8 522.6 L621.5 522.8 L622.1 522.4 L622.7 523.6 L623.3 522.5 L623.9 522.8 L624.5 524.0 L625.1 523.8 L625.7 523.3 L626.3 522.3 L626.9 523.3 L627.5 523.5 L628.1 523.2 L628.7 523.4 L629.3 523.7 L629.9 524.2 L630.5 523.6 L631.2 524.5 L631.8 524.7 L632.4 524.7 L633.0 525.5 L633.6 525.8 L634.2 525.6 L634.8 526.1 L635.4 526.4 L636.0 526.7 L636.0 526.7 L635.4 527.0 L634.8 527.5 L634.2 528.0 L633.6 527.7 L633.0 528.0 L632.4 528.9 L631.8 528.7 L631.2 528.8 L630.5 529.5 L629.9 529.1 L629.3 529.8 L628.7 530.2 L628.1 530.4 L627.5 529.7 L626.9 529.9 L626.3 530.9 L625.7 530.5 L625.1 529.7 L624.5 529.5 L623.9 530.3 L623.3 530.9 L622.7 530.0 L622.1 531.3 L621.5 530.6 L620.8 531.0 L620.2 530.9 L619.6 530.4 L619.0 529.6 L618.4 529.4 L617.8 528.7 L617.2 527.9 L616.6 527.5 L616.0 526.7Z M641.0 526.7 L641.6 526.1 L642.2 525.1 L642.8 524.5 L643.5 524.0 L644.1 524.1 L644.7 523.5 L645.3 522.8 L645.9 523.6 L646.5 523.5 L647.1 524.1 L647.7 523.5 L648.4 523.7 L649.0 523.6 L649.6 522.6 L650.2 523.9 L650.8 523.0 L651.4 523.2 L652.0 523.2 L652.6 522.8 L653.3 523.8 L653.9 524.4 L654.5 524.0 L655.1 524.2 L655.7 524.2 L656.3 525.1 L656.9 525.5 L657.5 525.8 L658.2 525.7 L658.8 526.3 L659.4 526.5 L660.0 526.7 L660.0 526.7 L659.4 527.0 L658.8 527.2 L658.2 527.8 L657.5 527.7 L656.9 527.9 L656.3 528.4 L655.7 529.1 L655.1 529.2 L654.5 529.4 L653.9 529.0 L653.3 529.7 L652.6 530.5 L652.0 530.1 L651.4 529.9 L650.8 530.5 L650.2 529.6 L649.6 530.8 L649.0 529.7 L648.4 529.7 L647.7 529.7 L647.1 529.5 L646.5 530.2 L645.9 529.8 L645.3 530.5 L644.7 530.3 L644.1 529.5 L643.5 529.5 L642.8 529.0 L642.2 528.5 L641.6 527.4 L641.0 526.7Z M664.0 526.7 L664.6 526.0 L665.2 525.3 L665.8 524.4 L666.4 524.1 L667.0 522.6 L667.6 524.1 L668.2 523.2 L668.8 522.6 L669.4 524.1 L670.0 524.1 L670.6 523.3 L671.2 522.8 L671.8 522.6 L672.4 522.6 L673.0 523.9 L673.6 523.8 L674.2 522.6 L674.8 523.2 L675.4 523.7 L676.0 524.1 L676.6 523.8 L677.2 523.9 L677.8 524.1 L678.4 524.1 L679.0 524.0 L679.6 524.1 L680.2 524.4 L680.8 525.0 L681.4 524.8 L682.0 525.4 L682.6 525.4 L683.2 525.9 L683.8 526.1 L684.4 526.4 L685.0 526.7 L685.0 526.7 L684.4 527.1 L683.8 527.4 L683.2 527.5 L682.6 528.0 L682.0 528.0 L681.4 528.8 L680.8 528.3 L680.2 529.1 L679.6 529.3 L679.0 529.5 L678.4 529.4 L677.8 529.6 L677.2 529.5 L676.6 529.7 L676.0 529.6 L675.4 529.6 L674.8 530.1 L674.2 531.1 L673.6 529.8 L673.0 529.6 L672.4 530.5 L671.8 530.7 L671.2 530.8 L670.6 529.9 L670.0 529.5 L669.4 529.6 L668.8 530.7 L668.2 530.6 L667.6 529.4 L667.0 530.8 L666.4 529.5 L665.8 529.3 L665.2 528.3 L664.6 527.5 L664.0 526.7Z M690.0 526.7 L690.6 526.1 L691.3 525.9 L692.0 525.6 L692.6 525.6 L693.2 525.4 L693.9 525.4 L694.5 525.9 L695.2 526.3 L695.9 526.4 L696.5 526.7 L696.5 526.7 L695.9 527.1 L695.2 527.2 L694.5 527.5 L693.9 528.1 L693.2 528.1 L692.6 527.9 L692.0 527.9 L691.3 527.6 L690.6 527.4 L690.0 526.7Z" fill="#188020"/><path d="M610.8 526.74H700" stroke="#188020" stroke-width=".7" opacity=".8"/></svg><span style="transform:scaleX(1.005)">Cubase 7... mid_01</span></div>
<svg style="left:0;top:0" width="624" height="512"><path d="M35.30 0V512 M72.12 0V512 M108.94 0V512 M145.76 0V512 M182.58 0V512 M219.40 0V512 M256.22 0V512 M293.04 0V512 M329.86 0V512 M366.68 0V512 M403.50 0V512 M440.32 0V512 M477.14 0V512 M513.96 0V512 M550.78 0V512 M587.60 0V512" stroke="rgba(20,24,30,.18)" stroke-width="1" fill="none"/></svg>
</div>
<div style="left:142px;top:37.6px;width:7px;height:541px;background:linear-gradient(90deg,rgba(255,255,255,.12) 0 1px,#3a4146 1px 2px,#020303 2px 4px,#55595c 4px 5px,rgba(0,0,0,.09) 5px 7px)"></div>
</body></html>
